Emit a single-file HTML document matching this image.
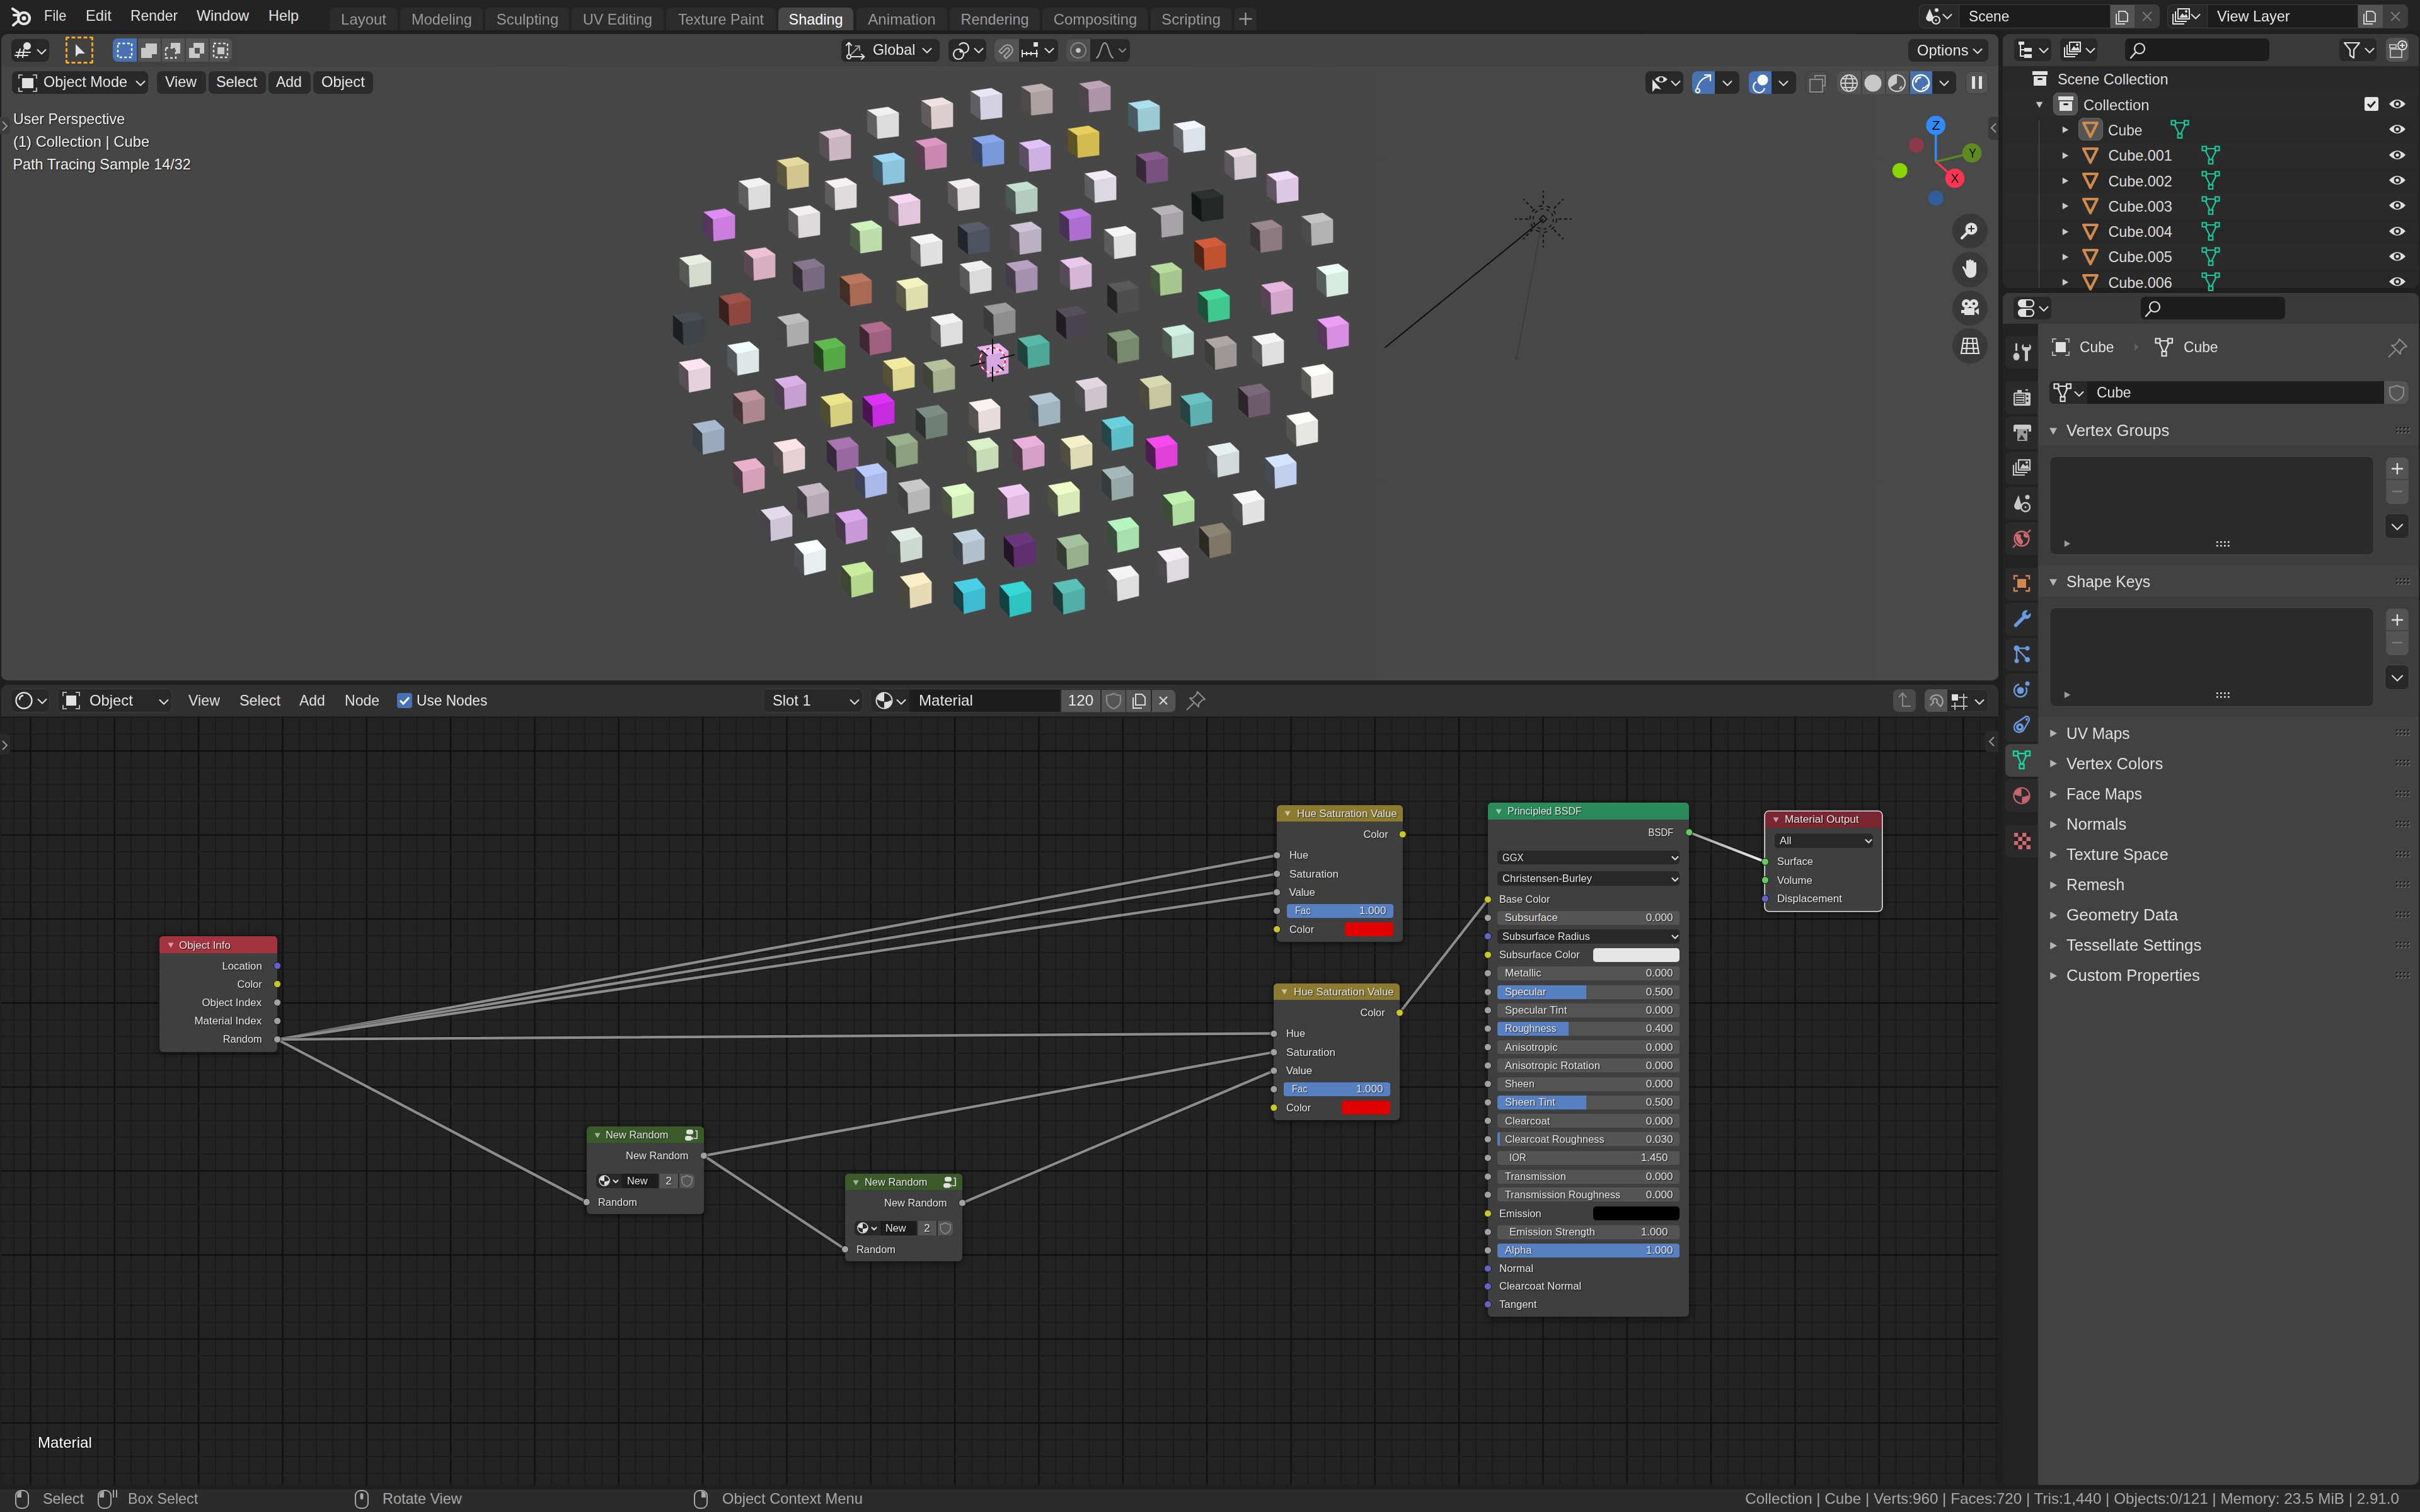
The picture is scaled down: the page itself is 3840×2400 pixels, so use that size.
<!DOCTYPE html>
<html><head><meta charset="utf-8"><style>
html,body{margin:0;padding:0;background:#1f1f1f;}
#root{position:relative;width:3840px;height:2400px;overflow:hidden;background:#1f1f1f;font-family:"Liberation Sans",sans-serif;}
.t{position:absolute;white-space:nowrap;}
svg{position:absolute;left:0;top:0;}
</style></head><body><div id="root">
<div style="position:absolute;left:0.0px;top:0.0px;width:3840.0px;height:48.0px;background:#232323;border-radius:0px;"></div>
<svg width="40" height="40" style="left:16px;top:6px" viewBox="0 0 40 40">
<g fill="none" stroke="#e6e6e6" stroke-width="4.2" stroke-linecap="round">
<circle cx="22" cy="23" r="9"/>
<path d="M13 14 L4 8"/><path d="M15 18 L6 18"/><path d="M12 28 L5 34"/>
</g><circle cx="22" cy="23" r="3.6" fill="#e6e6e6"/></svg>
<div class="t" style="left:70.0px;top:11.5px;font-size:23.4px;line-height:26.9px;color:#e0e0e0;transform:scaleX(0.9373);transform-origin:0 50%;">File</div>
<div class="t" style="left:136.0px;top:11.5px;font-size:23.4px;line-height:26.9px;color:#e0e0e0;transform:scaleX(1.0143);transform-origin:0 50%;">Edit</div>
<div class="t" style="left:207.0px;top:11.5px;font-size:23.4px;line-height:26.9px;color:#e0e0e0;transform:scaleX(0.9798);transform-origin:0 50%;">Render</div>
<div class="t" style="left:312.0px;top:11.5px;font-size:23.4px;line-height:26.9px;color:#e0e0e0;transform-origin:0 50%;">Window</div>
<div class="t" style="left:426.0px;top:11.5px;font-size:23.4px;line-height:26.9px;color:#e0e0e0;transform-origin:0 50%;">Help</div>
<div style="position:absolute;left:523.0px;top:12.0px;width:108.0px;height:36.0px;background:#2c2c2c;border-radius:0px;border-radius:8px 8px 0 0;"></div>
<div class="t" style="left:77.0px;width:1000px;top:17.5px;font-size:23.4px;line-height:26.9px;color:#9a9a9a;text-align:center;transform:scaleX(1.0220);transform-origin:50% 50%;">Layout</div>
<div style="position:absolute;left:635.0px;top:12.0px;width:131.0px;height:36.0px;background:#2c2c2c;border-radius:0px;border-radius:8px 8px 0 0;"></div>
<div class="t" style="left:200.5px;width:1000px;top:17.5px;font-size:23.4px;line-height:26.9px;color:#9a9a9a;text-align:center;transform:scaleX(1.0118);transform-origin:50% 50%;">Modeling</div>
<div style="position:absolute;left:770.0px;top:12.0px;width:133.0px;height:36.0px;background:#2c2c2c;border-radius:0px;border-radius:8px 8px 0 0;"></div>
<div class="t" style="left:336.5px;width:1000px;top:17.5px;font-size:23.4px;line-height:26.9px;color:#9a9a9a;text-align:center;transform:scaleX(1.0245);transform-origin:50% 50%;">Sculpting</div>
<div style="position:absolute;left:907.0px;top:12.0px;width:146.0px;height:36.0px;background:#2c2c2c;border-radius:0px;border-radius:8px 8px 0 0;"></div>
<div class="t" style="left:480.0px;width:1000px;top:17.5px;font-size:23.4px;line-height:26.9px;color:#9a9a9a;text-align:center;transform:scaleX(0.9965);transform-origin:50% 50%;">UV Editing</div>
<div style="position:absolute;left:1057.0px;top:12.0px;width:174.0px;height:36.0px;background:#2c2c2c;border-radius:0px;border-radius:8px 8px 0 0;"></div>
<div class="t" style="left:644.0px;width:1000px;top:17.5px;font-size:23.4px;line-height:26.9px;color:#9a9a9a;text-align:center;transform:scaleX(0.9979);transform-origin:50% 50%;">Texture Paint</div>
<div style="position:absolute;left:1235.0px;top:12.0px;width:119.0px;height:36.0px;background:#474747;border-radius:0px;border-radius:8px 8px 0 0;"></div>
<div class="t" style="left:794.5px;width:1000px;top:17.5px;font-size:23.4px;line-height:26.9px;color:#ffffff;text-align:center;transform-origin:50% 50%;">Shading</div>
<div style="position:absolute;left:1359.0px;top:12.0px;width:144.0px;height:36.0px;background:#2c2c2c;border-radius:0px;border-radius:8px 8px 0 0;"></div>
<div class="t" style="left:931.0px;width:1000px;top:17.5px;font-size:23.4px;line-height:26.9px;color:#9a9a9a;text-align:center;transform:scaleX(1.0347);transform-origin:50% 50%;">Animation</div>
<div style="position:absolute;left:1507.0px;top:12.0px;width:143.0px;height:36.0px;background:#2c2c2c;border-radius:0px;border-radius:8px 8px 0 0;"></div>
<div class="t" style="left:1078.5px;width:1000px;top:17.5px;font-size:23.4px;line-height:26.9px;color:#9a9a9a;text-align:center;transform-origin:50% 50%;">Rendering</div>
<div style="position:absolute;left:1654.0px;top:12.0px;width:167.0px;height:36.0px;background:#2c2c2c;border-radius:0px;border-radius:8px 8px 0 0;"></div>
<div class="t" style="left:1237.5px;width:1000px;top:17.5px;font-size:23.4px;line-height:26.9px;color:#9a9a9a;text-align:center;transform:scaleX(1.0179);transform-origin:50% 50%;">Compositing</div>
<div style="position:absolute;left:1826.0px;top:12.0px;width:128.0px;height:36.0px;background:#2c2c2c;border-radius:0px;border-radius:8px 8px 0 0;"></div>
<div class="t" style="left:1390.0px;width:1000px;top:17.5px;font-size:23.4px;line-height:26.9px;color:#9a9a9a;text-align:center;transform:scaleX(1.0316);transform-origin:50% 50%;">Scripting</div>
<div style="position:absolute;left:1959.0px;top:12.0px;width:35.0px;height:36.0px;background:#2c2c2c;border-radius:0px;border-radius:8px 8px 0 0;"></div>
<svg width="40" height="40" style="left:1957px;top:10px"><path d="M19.5 10 V30 M9.5 20 H29.5" stroke="#9a9a9a" stroke-width="2.4"/></svg>
<div style="position:absolute;left:3045.0px;top:7.0px;width:382.0px;height:38.0px;background:#3d3d3d;border-radius:8px;"></div>
<div style="position:absolute;left:3046.0px;top:8.0px;width:62.0px;height:36.0px;background:#282828;border-radius:0px;border-radius:7px 0 0 7px;"></div>
<div style="position:absolute;left:3109.0px;top:8.0px;width:239.0px;height:36.0px;background:#1d1d1d;border-radius:0px;"></div>
<div style="position:absolute;left:3349.0px;top:8.0px;width:38.0px;height:36.0px;background:#545454;border-radius:0px;"></div>
<div style="position:absolute;left:3388.0px;top:8.0px;width:38.0px;height:36.0px;background:#3d3d3d;border-radius:0px;border-radius:0 7px 7px 0;"></div>
<div class="t" style="left:3124.0px;top:12.5px;font-size:23.4px;line-height:26.9px;color:#e6e6e6;transform:scaleX(0.9706);transform-origin:0 50%;">Scene</div>
<svg width="40" height="40" style="left:3050px;top:6px"><path d="M12 8 L6 22 A6 6 0 0 0 18 22 Z" fill="#e0e0e0"/><circle cx="23" cy="10" r="3" fill="#e0e0e0"/><circle cx="22" cy="26" r="6" fill="none" stroke="#e0e0e0" stroke-width="2.2"/><circle cx="22" cy="26" r="1.6" fill="#e0e0e0"/></svg>
<svg width="40" height="40" style="left:3348px;top:6px"><g fill="none" stroke="#d0d0d0" stroke-width="2"><path d="M14 12 H24 L28 16 V28 H14 Z"/><path d="M10 16 V32 H24"/></g></svg>
<svg width="40" height="40" style="left:3387px;top:6px"><path d="M13 13 L27 27 M27 13 L13 27" stroke="#777" stroke-width="2.2"/></svg>
<svg width="24" height="24" style="left:3078.0px;top:14.0px"><path d="M5.5 9.075 L12 15.575 L18.5 9.075" fill="none" stroke="#e0e0e0" stroke-width="2.1" stroke-linecap="round" stroke-linejoin="round"/></svg>
<div style="position:absolute;left:3439.0px;top:7.0px;width:382.0px;height:38.0px;background:#3d3d3d;border-radius:8px;"></div>
<div style="position:absolute;left:3440.0px;top:8.0px;width:62.0px;height:36.0px;background:#282828;border-radius:0px;border-radius:7px 0 0 7px;"></div>
<div style="position:absolute;left:3503.0px;top:8.0px;width:238.0px;height:36.0px;background:#1d1d1d;border-radius:0px;"></div>
<div style="position:absolute;left:3742.0px;top:8.0px;width:39.0px;height:36.0px;background:#545454;border-radius:0px;"></div>
<div style="position:absolute;left:3782.0px;top:8.0px;width:38.0px;height:36.0px;background:#3d3d3d;border-radius:0px;border-radius:0 7px 7px 0;"></div>
<div class="t" style="left:3518.0px;top:12.5px;font-size:23.4px;line-height:26.9px;color:#e6e6e6;transform:scaleX(1.0034);transform-origin:0 50%;">View Layer</div>
<svg width="40" height="40" style="left:3444px;top:6px"><g fill="none" stroke="#e0e0e0" stroke-width="2"><rect x="12" y="8" width="18" height="16"/><path d="M8 12 V28 H26"/><path d="M4 16 V32 H22"/></g><path d="M14 22 L19 15 L22 19 L25 16 L28 22Z" fill="#e0e0e0"/><circle cx="25" cy="12" r="2" fill="#e0e0e0"/></svg>
<svg width="40" height="40" style="left:3741px;top:6px"><g fill="none" stroke="#d0d0d0" stroke-width="2"><path d="M14 12 H24 L28 16 V28 H14 Z"/><path d="M10 16 V32 H24"/></g></svg>
<svg width="40" height="40" style="left:3781px;top:6px"><path d="M13 13 L27 27 M27 13 L13 27" stroke="#777" stroke-width="2.2"/></svg>
<svg width="24" height="24" style="left:3472.0px;top:14.0px"><path d="M5.5 9.075 L12 15.575 L18.5 9.075" fill="none" stroke="#e0e0e0" stroke-width="2.1" stroke-linecap="round" stroke-linejoin="round"/></svg>
<div style="position:absolute;left:2.0px;top:54.0px;width:3169.0px;height:1026.0px;background:linear-gradient(90deg,#464646 0%,#474747 60%,#494949 100%);border-radius:10px;"></div>
<div style="position:absolute;left:2.0px;top:54.0px;width:3169.0px;height:51.0px;background:rgba(0,0,0,0.07);border-radius:0px;border-radius:10px 10px 0 0;"></div>
<div style="position:absolute;left:2.0px;top:1087.0px;width:3169.0px;height:1270.0px;background:#232323;border-radius:10px;"></div>
<div style="position:absolute;left:2.0px;top:1087.0px;width:3169.0px;height:50.0px;background:#303030;border-radius:0px;border-radius:10px 10px 0 0;"></div>
<svg width="3840" height="2400" style="clip-path:inset(1137px 669px 43px 2px round 0 0 10px 10px)"><line x1="21.83" y1="1137" x2="21.83" y2="2357" stroke="#1a1a1a" stroke-width="1.8"/><line x1="48.50" y1="1137" x2="48.50" y2="2357" stroke="#111111" stroke-width="2.4"/><line x1="75.17" y1="1137" x2="75.17" y2="2357" stroke="#1a1a1a" stroke-width="1.8"/><line x1="101.83" y1="1137" x2="101.83" y2="2357" stroke="#1a1a1a" stroke-width="1.8"/><line x1="128.50" y1="1137" x2="128.50" y2="2357" stroke="#1a1a1a" stroke-width="1.8"/><line x1="155.17" y1="1137" x2="155.17" y2="2357" stroke="#1a1a1a" stroke-width="1.8"/><line x1="181.83" y1="1137" x2="181.83" y2="2357" stroke="#111111" stroke-width="2.4"/><line x1="208.50" y1="1137" x2="208.50" y2="2357" stroke="#1a1a1a" stroke-width="1.8"/><line x1="235.17" y1="1137" x2="235.17" y2="2357" stroke="#1a1a1a" stroke-width="1.8"/><line x1="261.83" y1="1137" x2="261.83" y2="2357" stroke="#1a1a1a" stroke-width="1.8"/><line x1="288.50" y1="1137" x2="288.50" y2="2357" stroke="#1a1a1a" stroke-width="1.8"/><line x1="315.17" y1="1137" x2="315.17" y2="2357" stroke="#111111" stroke-width="2.4"/><line x1="341.83" y1="1137" x2="341.83" y2="2357" stroke="#1a1a1a" stroke-width="1.8"/><line x1="368.50" y1="1137" x2="368.50" y2="2357" stroke="#1a1a1a" stroke-width="1.8"/><line x1="395.17" y1="1137" x2="395.17" y2="2357" stroke="#1a1a1a" stroke-width="1.8"/><line x1="421.83" y1="1137" x2="421.83" y2="2357" stroke="#1a1a1a" stroke-width="1.8"/><line x1="448.50" y1="1137" x2="448.50" y2="2357" stroke="#111111" stroke-width="2.4"/><line x1="475.17" y1="1137" x2="475.17" y2="2357" stroke="#1a1a1a" stroke-width="1.8"/><line x1="501.83" y1="1137" x2="501.83" y2="2357" stroke="#1a1a1a" stroke-width="1.8"/><line x1="528.50" y1="1137" x2="528.50" y2="2357" stroke="#1a1a1a" stroke-width="1.8"/><line x1="555.17" y1="1137" x2="555.17" y2="2357" stroke="#1a1a1a" stroke-width="1.8"/><line x1="581.83" y1="1137" x2="581.83" y2="2357" stroke="#111111" stroke-width="2.4"/><line x1="608.50" y1="1137" x2="608.50" y2="2357" stroke="#1a1a1a" stroke-width="1.8"/><line x1="635.17" y1="1137" x2="635.17" y2="2357" stroke="#1a1a1a" stroke-width="1.8"/><line x1="661.83" y1="1137" x2="661.83" y2="2357" stroke="#1a1a1a" stroke-width="1.8"/><line x1="688.50" y1="1137" x2="688.50" y2="2357" stroke="#1a1a1a" stroke-width="1.8"/><line x1="715.17" y1="1137" x2="715.17" y2="2357" stroke="#111111" stroke-width="2.4"/><line x1="741.83" y1="1137" x2="741.83" y2="2357" stroke="#1a1a1a" stroke-width="1.8"/><line x1="768.50" y1="1137" x2="768.50" y2="2357" stroke="#1a1a1a" stroke-width="1.8"/><line x1="795.16" y1="1137" x2="795.16" y2="2357" stroke="#1a1a1a" stroke-width="1.8"/><line x1="821.83" y1="1137" x2="821.83" y2="2357" stroke="#1a1a1a" stroke-width="1.8"/><line x1="848.50" y1="1137" x2="848.50" y2="2357" stroke="#111111" stroke-width="2.4"/><line x1="875.16" y1="1137" x2="875.16" y2="2357" stroke="#1a1a1a" stroke-width="1.8"/><line x1="901.83" y1="1137" x2="901.83" y2="2357" stroke="#1a1a1a" stroke-width="1.8"/><line x1="928.50" y1="1137" x2="928.50" y2="2357" stroke="#1a1a1a" stroke-width="1.8"/><line x1="955.16" y1="1137" x2="955.16" y2="2357" stroke="#1a1a1a" stroke-width="1.8"/><line x1="981.83" y1="1137" x2="981.83" y2="2357" stroke="#111111" stroke-width="2.4"/><line x1="1008.50" y1="1137" x2="1008.50" y2="2357" stroke="#1a1a1a" stroke-width="1.8"/><line x1="1035.16" y1="1137" x2="1035.16" y2="2357" stroke="#1a1a1a" stroke-width="1.8"/><line x1="1061.83" y1="1137" x2="1061.83" y2="2357" stroke="#1a1a1a" stroke-width="1.8"/><line x1="1088.50" y1="1137" x2="1088.50" y2="2357" stroke="#1a1a1a" stroke-width="1.8"/><line x1="1115.16" y1="1137" x2="1115.16" y2="2357" stroke="#111111" stroke-width="2.4"/><line x1="1141.83" y1="1137" x2="1141.83" y2="2357" stroke="#1a1a1a" stroke-width="1.8"/><line x1="1168.50" y1="1137" x2="1168.50" y2="2357" stroke="#1a1a1a" stroke-width="1.8"/><line x1="1195.16" y1="1137" x2="1195.16" y2="2357" stroke="#1a1a1a" stroke-width="1.8"/><line x1="1221.83" y1="1137" x2="1221.83" y2="2357" stroke="#1a1a1a" stroke-width="1.8"/><line x1="1248.50" y1="1137" x2="1248.50" y2="2357" stroke="#111111" stroke-width="2.4"/><line x1="1275.16" y1="1137" x2="1275.16" y2="2357" stroke="#1a1a1a" stroke-width="1.8"/><line x1="1301.83" y1="1137" x2="1301.83" y2="2357" stroke="#1a1a1a" stroke-width="1.8"/><line x1="1328.50" y1="1137" x2="1328.50" y2="2357" stroke="#1a1a1a" stroke-width="1.8"/><line x1="1355.16" y1="1137" x2="1355.16" y2="2357" stroke="#1a1a1a" stroke-width="1.8"/><line x1="1381.83" y1="1137" x2="1381.83" y2="2357" stroke="#111111" stroke-width="2.4"/><line x1="1408.50" y1="1137" x2="1408.50" y2="2357" stroke="#1a1a1a" stroke-width="1.8"/><line x1="1435.16" y1="1137" x2="1435.16" y2="2357" stroke="#1a1a1a" stroke-width="1.8"/><line x1="1461.83" y1="1137" x2="1461.83" y2="2357" stroke="#1a1a1a" stroke-width="1.8"/><line x1="1488.50" y1="1137" x2="1488.50" y2="2357" stroke="#1a1a1a" stroke-width="1.8"/><line x1="1515.16" y1="1137" x2="1515.16" y2="2357" stroke="#111111" stroke-width="2.4"/><line x1="1541.83" y1="1137" x2="1541.83" y2="2357" stroke="#1a1a1a" stroke-width="1.8"/><line x1="1568.50" y1="1137" x2="1568.50" y2="2357" stroke="#1a1a1a" stroke-width="1.8"/><line x1="1595.16" y1="1137" x2="1595.16" y2="2357" stroke="#1a1a1a" stroke-width="1.8"/><line x1="1621.83" y1="1137" x2="1621.83" y2="2357" stroke="#1a1a1a" stroke-width="1.8"/><line x1="1648.50" y1="1137" x2="1648.50" y2="2357" stroke="#111111" stroke-width="2.4"/><line x1="1675.16" y1="1137" x2="1675.16" y2="2357" stroke="#1a1a1a" stroke-width="1.8"/><line x1="1701.83" y1="1137" x2="1701.83" y2="2357" stroke="#1a1a1a" stroke-width="1.8"/><line x1="1728.50" y1="1137" x2="1728.50" y2="2357" stroke="#1a1a1a" stroke-width="1.8"/><line x1="1755.16" y1="1137" x2="1755.16" y2="2357" stroke="#1a1a1a" stroke-width="1.8"/><line x1="1781.83" y1="1137" x2="1781.83" y2="2357" stroke="#111111" stroke-width="2.4"/><line x1="1808.50" y1="1137" x2="1808.50" y2="2357" stroke="#1a1a1a" stroke-width="1.8"/><line x1="1835.16" y1="1137" x2="1835.16" y2="2357" stroke="#1a1a1a" stroke-width="1.8"/><line x1="1861.83" y1="1137" x2="1861.83" y2="2357" stroke="#1a1a1a" stroke-width="1.8"/><line x1="1888.50" y1="1137" x2="1888.50" y2="2357" stroke="#1a1a1a" stroke-width="1.8"/><line x1="1915.16" y1="1137" x2="1915.16" y2="2357" stroke="#111111" stroke-width="2.4"/><line x1="1941.83" y1="1137" x2="1941.83" y2="2357" stroke="#1a1a1a" stroke-width="1.8"/><line x1="1968.50" y1="1137" x2="1968.50" y2="2357" stroke="#1a1a1a" stroke-width="1.8"/><line x1="1995.16" y1="1137" x2="1995.16" y2="2357" stroke="#1a1a1a" stroke-width="1.8"/><line x1="2021.83" y1="1137" x2="2021.83" y2="2357" stroke="#1a1a1a" stroke-width="1.8"/><line x1="2048.50" y1="1137" x2="2048.50" y2="2357" stroke="#111111" stroke-width="2.4"/><line x1="2075.16" y1="1137" x2="2075.16" y2="2357" stroke="#1a1a1a" stroke-width="1.8"/><line x1="2101.83" y1="1137" x2="2101.83" y2="2357" stroke="#1a1a1a" stroke-width="1.8"/><line x1="2128.49" y1="1137" x2="2128.49" y2="2357" stroke="#1a1a1a" stroke-width="1.8"/><line x1="2155.16" y1="1137" x2="2155.16" y2="2357" stroke="#1a1a1a" stroke-width="1.8"/><line x1="2181.83" y1="1137" x2="2181.83" y2="2357" stroke="#111111" stroke-width="2.4"/><line x1="2208.49" y1="1137" x2="2208.49" y2="2357" stroke="#1a1a1a" stroke-width="1.8"/><line x1="2235.16" y1="1137" x2="2235.16" y2="2357" stroke="#1a1a1a" stroke-width="1.8"/><line x1="2261.83" y1="1137" x2="2261.83" y2="2357" stroke="#1a1a1a" stroke-width="1.8"/><line x1="2288.49" y1="1137" x2="2288.49" y2="2357" stroke="#1a1a1a" stroke-width="1.8"/><line x1="2315.16" y1="1137" x2="2315.16" y2="2357" stroke="#111111" stroke-width="2.4"/><line x1="2341.83" y1="1137" x2="2341.83" y2="2357" stroke="#1a1a1a" stroke-width="1.8"/><line x1="2368.49" y1="1137" x2="2368.49" y2="2357" stroke="#1a1a1a" stroke-width="1.8"/><line x1="2395.16" y1="1137" x2="2395.16" y2="2357" stroke="#1a1a1a" stroke-width="1.8"/><line x1="2421.83" y1="1137" x2="2421.83" y2="2357" stroke="#1a1a1a" stroke-width="1.8"/><line x1="2448.49" y1="1137" x2="2448.49" y2="2357" stroke="#111111" stroke-width="2.4"/><line x1="2475.16" y1="1137" x2="2475.16" y2="2357" stroke="#1a1a1a" stroke-width="1.8"/><line x1="2501.83" y1="1137" x2="2501.83" y2="2357" stroke="#1a1a1a" stroke-width="1.8"/><line x1="2528.49" y1="1137" x2="2528.49" y2="2357" stroke="#1a1a1a" stroke-width="1.8"/><line x1="2555.16" y1="1137" x2="2555.16" y2="2357" stroke="#1a1a1a" stroke-width="1.8"/><line x1="2581.83" y1="1137" x2="2581.83" y2="2357" stroke="#111111" stroke-width="2.4"/><line x1="2608.49" y1="1137" x2="2608.49" y2="2357" stroke="#1a1a1a" stroke-width="1.8"/><line x1="2635.16" y1="1137" x2="2635.16" y2="2357" stroke="#1a1a1a" stroke-width="1.8"/><line x1="2661.83" y1="1137" x2="2661.83" y2="2357" stroke="#1a1a1a" stroke-width="1.8"/><line x1="2688.49" y1="1137" x2="2688.49" y2="2357" stroke="#1a1a1a" stroke-width="1.8"/><line x1="2715.16" y1="1137" x2="2715.16" y2="2357" stroke="#111111" stroke-width="2.4"/><line x1="2741.83" y1="1137" x2="2741.83" y2="2357" stroke="#1a1a1a" stroke-width="1.8"/><line x1="2768.49" y1="1137" x2="2768.49" y2="2357" stroke="#1a1a1a" stroke-width="1.8"/><line x1="2795.16" y1="1137" x2="2795.16" y2="2357" stroke="#1a1a1a" stroke-width="1.8"/><line x1="2821.83" y1="1137" x2="2821.83" y2="2357" stroke="#1a1a1a" stroke-width="1.8"/><line x1="2848.49" y1="1137" x2="2848.49" y2="2357" stroke="#111111" stroke-width="2.4"/><line x1="2875.16" y1="1137" x2="2875.16" y2="2357" stroke="#1a1a1a" stroke-width="1.8"/><line x1="2901.83" y1="1137" x2="2901.83" y2="2357" stroke="#1a1a1a" stroke-width="1.8"/><line x1="2928.49" y1="1137" x2="2928.49" y2="2357" stroke="#1a1a1a" stroke-width="1.8"/><line x1="2955.16" y1="1137" x2="2955.16" y2="2357" stroke="#1a1a1a" stroke-width="1.8"/><line x1="2981.83" y1="1137" x2="2981.83" y2="2357" stroke="#111111" stroke-width="2.4"/><line x1="3008.49" y1="1137" x2="3008.49" y2="2357" stroke="#1a1a1a" stroke-width="1.8"/><line x1="3035.16" y1="1137" x2="3035.16" y2="2357" stroke="#1a1a1a" stroke-width="1.8"/><line x1="3061.83" y1="1137" x2="3061.83" y2="2357" stroke="#1a1a1a" stroke-width="1.8"/><line x1="3088.49" y1="1137" x2="3088.49" y2="2357" stroke="#1a1a1a" stroke-width="1.8"/><line x1="3115.16" y1="1137" x2="3115.16" y2="2357" stroke="#111111" stroke-width="2.4"/><line x1="3141.83" y1="1137" x2="3141.83" y2="2357" stroke="#1a1a1a" stroke-width="1.8"/><line x1="3168.49" y1="1137" x2="3168.49" y2="2357" stroke="#1a1a1a" stroke-width="1.8"/><line x1="2" y1="1138.67" x2="3171" y2="1138.67" stroke="#1a1a1a" stroke-width="1.8"/><line x1="2" y1="1165.33" x2="3171" y2="1165.33" stroke="#1a1a1a" stroke-width="1.8"/><line x1="2" y1="1192.00" x2="3171" y2="1192.00" stroke="#111111" stroke-width="2.4"/><line x1="2" y1="1218.67" x2="3171" y2="1218.67" stroke="#1a1a1a" stroke-width="1.8"/><line x1="2" y1="1245.33" x2="3171" y2="1245.33" stroke="#1a1a1a" stroke-width="1.8"/><line x1="2" y1="1272.00" x2="3171" y2="1272.00" stroke="#1a1a1a" stroke-width="1.8"/><line x1="2" y1="1298.67" x2="3171" y2="1298.67" stroke="#1a1a1a" stroke-width="1.8"/><line x1="2" y1="1325.33" x2="3171" y2="1325.33" stroke="#111111" stroke-width="2.4"/><line x1="2" y1="1352.00" x2="3171" y2="1352.00" stroke="#1a1a1a" stroke-width="1.8"/><line x1="2" y1="1378.67" x2="3171" y2="1378.67" stroke="#1a1a1a" stroke-width="1.8"/><line x1="2" y1="1405.33" x2="3171" y2="1405.33" stroke="#1a1a1a" stroke-width="1.8"/><line x1="2" y1="1432.00" x2="3171" y2="1432.00" stroke="#1a1a1a" stroke-width="1.8"/><line x1="2" y1="1458.67" x2="3171" y2="1458.67" stroke="#111111" stroke-width="2.4"/><line x1="2" y1="1485.33" x2="3171" y2="1485.33" stroke="#1a1a1a" stroke-width="1.8"/><line x1="2" y1="1512.00" x2="3171" y2="1512.00" stroke="#1a1a1a" stroke-width="1.8"/><line x1="2" y1="1538.67" x2="3171" y2="1538.67" stroke="#1a1a1a" stroke-width="1.8"/><line x1="2" y1="1565.33" x2="3171" y2="1565.33" stroke="#1a1a1a" stroke-width="1.8"/><line x1="2" y1="1592.00" x2="3171" y2="1592.00" stroke="#111111" stroke-width="2.4"/><line x1="2" y1="1618.67" x2="3171" y2="1618.67" stroke="#1a1a1a" stroke-width="1.8"/><line x1="2" y1="1645.33" x2="3171" y2="1645.33" stroke="#1a1a1a" stroke-width="1.8"/><line x1="2" y1="1672.00" x2="3171" y2="1672.00" stroke="#1a1a1a" stroke-width="1.8"/><line x1="2" y1="1698.67" x2="3171" y2="1698.67" stroke="#1a1a1a" stroke-width="1.8"/><line x1="2" y1="1725.33" x2="3171" y2="1725.33" stroke="#111111" stroke-width="2.4"/><line x1="2" y1="1752.00" x2="3171" y2="1752.00" stroke="#1a1a1a" stroke-width="1.8"/><line x1="2" y1="1778.67" x2="3171" y2="1778.67" stroke="#1a1a1a" stroke-width="1.8"/><line x1="2" y1="1805.33" x2="3171" y2="1805.33" stroke="#1a1a1a" stroke-width="1.8"/><line x1="2" y1="1832.00" x2="3171" y2="1832.00" stroke="#1a1a1a" stroke-width="1.8"/><line x1="2" y1="1858.67" x2="3171" y2="1858.67" stroke="#111111" stroke-width="2.4"/><line x1="2" y1="1885.33" x2="3171" y2="1885.33" stroke="#1a1a1a" stroke-width="1.8"/><line x1="2" y1="1912.00" x2="3171" y2="1912.00" stroke="#1a1a1a" stroke-width="1.8"/><line x1="2" y1="1938.66" x2="3171" y2="1938.66" stroke="#1a1a1a" stroke-width="1.8"/><line x1="2" y1="1965.33" x2="3171" y2="1965.33" stroke="#1a1a1a" stroke-width="1.8"/><line x1="2" y1="1992.00" x2="3171" y2="1992.00" stroke="#111111" stroke-width="2.4"/><line x1="2" y1="2018.66" x2="3171" y2="2018.66" stroke="#1a1a1a" stroke-width="1.8"/><line x1="2" y1="2045.33" x2="3171" y2="2045.33" stroke="#1a1a1a" stroke-width="1.8"/><line x1="2" y1="2072.00" x2="3171" y2="2072.00" stroke="#1a1a1a" stroke-width="1.8"/><line x1="2" y1="2098.66" x2="3171" y2="2098.66" stroke="#1a1a1a" stroke-width="1.8"/><line x1="2" y1="2125.33" x2="3171" y2="2125.33" stroke="#111111" stroke-width="2.4"/><line x1="2" y1="2152.00" x2="3171" y2="2152.00" stroke="#1a1a1a" stroke-width="1.8"/><line x1="2" y1="2178.66" x2="3171" y2="2178.66" stroke="#1a1a1a" stroke-width="1.8"/><line x1="2" y1="2205.33" x2="3171" y2="2205.33" stroke="#1a1a1a" stroke-width="1.8"/><line x1="2" y1="2232.00" x2="3171" y2="2232.00" stroke="#1a1a1a" stroke-width="1.8"/><line x1="2" y1="2258.66" x2="3171" y2="2258.66" stroke="#111111" stroke-width="2.4"/><line x1="2" y1="2285.33" x2="3171" y2="2285.33" stroke="#1a1a1a" stroke-width="1.8"/><line x1="2" y1="2312.00" x2="3171" y2="2312.00" stroke="#1a1a1a" stroke-width="1.8"/><line x1="2" y1="2338.66" x2="3171" y2="2338.66" stroke="#1a1a1a" stroke-width="1.8"/></svg>
<div style="position:absolute;left:3178.0px;top:54.0px;width:660.0px;height:403.0px;background:#282828;border-radius:10px;"></div>
<div style="position:absolute;left:3178.0px;top:54.0px;width:660.0px;height:51.0px;background:#3a3a3a;border-radius:0px;border-radius:10px 10px 0 0;"></div>
<div style="position:absolute;left:3178.0px;top:465.0px;width:660.0px;height:1892.0px;background:#424242;border-radius:10px;"></div>
<div style="position:absolute;left:3178.0px;top:465.0px;width:660.0px;height:49.0px;background:#3a3a3a;border-radius:0px;border-radius:10px 10px 0 0;"></div>
<div style="position:absolute;left:3178.0px;top:514.0px;width:56.0px;height:1843.0px;background:#232323;border-radius:0px;border-radius:0 0 0 10px;"></div>
<div style="position:absolute;left:0.0px;top:2364.0px;width:3840.0px;height:36.0px;background:#2b2b2b;border-radius:0px;"></div>
<div style="position:absolute;left:18.0px;top:62.0px;width:60.0px;height:36.0px;background:#282828;border-radius:8px;"></div>
<svg width="36" height="32" style="left:22.0px;top:64.0px"><g fill="none" stroke="#e0e0e0" stroke-width="2.2" stroke-linecap="round"><path d="M6 27 L10 14 M14 27 L16 14 M4 19 H26 M2 24 H22"/></g><circle cx="21" cy="9" r="6" fill="#e0e0e0"/></svg>
<svg width="24" height="24" style="left:54.0px;top:70.0px"><path d="M5.5 9.075 L12 15.575 L18.5 9.075" fill="none" stroke="#e0e0e0" stroke-width="2.1" stroke-linecap="round" stroke-linejoin="round"/></svg>
<div style="position:absolute;left:104px;top:58px;width:44px;height:43px;box-sizing:border-box;border:3px dashed #f5a623;border-radius:3px"></div>
<svg width="26" height="28" style="left:114.0px;top:66.0px"><path d="M6 4 L6 24 L11 19 L21 19 Z" fill="#e0e0e0"/></svg>
<div style="position:absolute;left:179.0px;top:61.0px;width:189.0px;height:37.0px;background:#545454;border-radius:8px;"></div>
<div style="position:absolute;left:179.0px;top:61.0px;width:38.0px;height:37.0px;background:#4772b3;border-radius:0px;border-radius:8px 0 0 8px;"></div>
<div style="position:absolute;left:217.0px;top:61.0px;width:1.5px;height:37.0px;background:#3f3f3f;border-radius:0px;"></div>
<div style="position:absolute;left:255.0px;top:61.0px;width:1.5px;height:37.0px;background:#3f3f3f;border-radius:0px;"></div>
<div style="position:absolute;left:293.0px;top:61.0px;width:1.5px;height:37.0px;background:#3f3f3f;border-radius:0px;"></div>
<div style="position:absolute;left:331.0px;top:61.0px;width:1.5px;height:37.0px;background:#3f3f3f;border-radius:0px;"></div>
<svg width="30" height="32" style="left:183.0px;top:64.0px"><rect x="4" y="5" width="22" height="22" fill="none" stroke="#ffffff" stroke-width="2.4" stroke-dasharray="4 3.4"/></svg>
<svg width="30" height="32" style="left:221.0px;top:64.0px"><path d="M10 5 H28 V22 H20 V28 H3 V12 H10 Z" fill="#c8c8c8"/></svg>
<svg width="30" height="32" style="left:259.0px;top:64.0px"><rect x="4" y="12" width="16" height="16" fill="none" stroke="#e0e0e0" stroke-width="2.4" stroke-dasharray="4 3.4"/><path d="M12 4 H27 V21 H20 V12 H12 Z" fill="#c8c8c8"/></svg>
<svg width="30" height="32" style="left:297.0px;top:64.0px"><path d="M10 4 H27 V21 H20 V12 H12 V21 H20 V28 H3 V12 H10 Z" fill="#c8c8c8" fill-rule="evenodd"/></svg>
<svg width="30" height="32" style="left:335.0px;top:64.0px"><rect x="4" y="5" width="22" height="22" fill="none" stroke="#e0e0e0" stroke-width="2.4" stroke-dasharray="4 3.4"/><rect x="10" y="11" width="11" height="11" fill="#c8c8c8"/></svg>
<div style="position:absolute;left:1335.0px;top:62.0px;width:156.0px;height:36.0px;background:#282828;border-radius:8px;"></div>
<svg width="40" height="36" style="left:1340.0px;top:63.0px"><g fill="none" stroke="#e0e0e0" stroke-width="2" stroke-linecap="round" stroke-linejoin="round"><path d="M7 27 V5 M3 9 L7 4.5 L11 9"/><path d="M10 27 H31 M27 23 L31.5 27 L27 31"/></g><g fill="none" stroke="#9a9a9a" stroke-width="2" stroke-linecap="round"><path d="M9 25 L24 10 M17 10 H24 V17"/></g><circle cx="7" cy="27" r="3.2" fill="#282828" stroke="#e0e0e0" stroke-width="2"/></svg>
<div class="t" style="left:1385.0px;top:65.5px;font-size:23.4px;line-height:26.9px;color:#e6e6e6;transform:scaleX(0.9961);transform-origin:0 50%;">Global</div>
<svg width="24" height="24" style="left:1459.0px;top:68.0px"><path d="M5.5 9.075 L12 15.575 L18.5 9.075" fill="none" stroke="#e0e0e0" stroke-width="2.1" stroke-linecap="round" stroke-linejoin="round"/></svg>
<div style="position:absolute;left:1505.0px;top:62.0px;width:60.0px;height:36.0px;background:#282828;border-radius:8px;"></div>
<svg width="36" height="34" style="left:1508.0px;top:64.0px"><g fill="none" stroke="#e0e0e0" stroke-width="2.2"><circle cx="13" cy="22" r="8"/><path d="M14 8 A8 8 0 1 1 22 20"/></g><circle cx="17" cy="17" r="2.6" fill="#e0e0e0"/></svg>
<svg width="24" height="24" style="left:1541.0px;top:68.0px"><path d="M5.5 9.075 L12 15.575 L18.5 9.075" fill="none" stroke="#e0e0e0" stroke-width="2.1" stroke-linecap="round" stroke-linejoin="round"/></svg>
<div style="position:absolute;left:1578.0px;top:62.0px;width:101.0px;height:36.0px;background:#282828;border-radius:8px;"></div>
<div style="position:absolute;left:1578.0px;top:62.0px;width:39.0px;height:36.0px;background:#545454;border-radius:0px;border-radius:8px 0 0 8px;"></div>
<svg width="36" height="34" style="left:1580.0px;top:63.0px"><g transform="rotate(-135 18 17)"><path d="M10 7 V18 A8 8 0 0 0 26 18 V7 H21 V18 A3 3 0 0 1 15 18 V7 Z" fill="none" stroke="#a8a8a8" stroke-width="2" stroke-linejoin="round"/></g></svg>
<svg width="34" height="34" style="left:1618.0px;top:63.0px"><g stroke="#e0e0e0" stroke-width="2" fill="none"><path d="M3 22 H29 M4 16 V28 M11 19 V25 M18 19 V25 M27 16 V28"/></g><rect x="22" y="4" width="7" height="7" fill="#e0e0e0"/></svg>
<svg width="24" height="24" style="left:1653.0px;top:68.0px"><path d="M5.5 9.075 L12 15.575 L18.5 9.075" fill="none" stroke="#e0e0e0" stroke-width="2.1" stroke-linecap="round" stroke-linejoin="round"/></svg>
<div style="position:absolute;left:1692.0px;top:62.0px;width:101.0px;height:36.0px;background:#282828;border-radius:8px;"></div>
<div style="position:absolute;left:1692.0px;top:62.0px;width:38.0px;height:36.0px;background:#4e4e4e;border-radius:0px;border-radius:8px 0 0 8px;"></div>
<svg width="34" height="34" style="left:1694.0px;top:63.0px"><circle cx="17" cy="17" r="12" fill="none" stroke="#8a8a8a" stroke-width="1.8"/><circle cx="17" cy="17" r="3.8" fill="#c8c8c8"/></svg>
<svg width="36" height="34" style="left:1736.0px;top:63.0px"><path d="M3 29 C10 29 11 5 17 5 C23 5 24 29 31 29" fill="none" stroke="#9a9a9a" stroke-width="2"/></svg>
<svg width="24" height="24" style="left:1769.0px;top:68.0px"><path d="M7 9.75 L12 14.75 L17 9.75" fill="none" stroke="#8a8a8a" stroke-width="2.1" stroke-linecap="round" stroke-linejoin="round"/></svg>
<div style="position:absolute;left:3028.0px;top:62.0px;width:127.0px;height:36.0px;background:#282828;border-radius:8px;"></div>
<div class="t" style="left:3042.0px;top:66.5px;font-size:23.4px;line-height:26.9px;color:#e6e6e6;transform:scaleX(1.0105);transform-origin:0 50%;">Options</div>
<svg width="24" height="24" style="left:3126.0px;top:69.0px"><path d="M5.5 9.075 L12 15.575 L18.5 9.075" fill="none" stroke="#e0e0e0" stroke-width="2.1" stroke-linecap="round" stroke-linejoin="round"/></svg>
<div style="position:absolute;left:19.0px;top:113.0px;width:216.0px;height:36.0px;background:#282828;border-radius:8px;"></div>
<svg width="40" height="36" style="left:24.0px;top:113.0px"><g fill="none" stroke="#b0b0b0" stroke-width="2.2"><path d="M6 12 V6 H12 M28 6 H34 V12 M34 26 V32 H28 M12 32 H6 V26"/></g><rect x="11" y="11" width="18" height="16" fill="#e0e0e0"/></svg>
<div class="t" style="left:69.0px;top:116.5px;font-size:23.4px;line-height:26.9px;color:#e6e6e6;transform:scaleX(1.0029);transform-origin:0 50%;">Object Mode</div>
<svg width="24" height="24" style="left:211.0px;top:120.0px"><path d="M5.5 9.075 L12 15.575 L18.5 9.075" fill="none" stroke="#e0e0e0" stroke-width="2.1" stroke-linecap="round" stroke-linejoin="round"/></svg>
<div style="position:absolute;left:249.0px;top:113.0px;width:78.0px;height:36.0px;background:#2b2b2b;border-radius:8px;"></div>
<div class="t" style="left:262.0px;top:116.5px;font-size:23.4px;line-height:26.9px;color:#e6e6e6;transform:scaleX(0.9964);transform-origin:0 50%;">View</div>
<div style="position:absolute;left:331.0px;top:113.0px;width:91.0px;height:36.0px;background:#2b2b2b;border-radius:8px;"></div>
<div class="t" style="left:343.0px;top:116.5px;font-size:23.4px;line-height:26.9px;color:#e6e6e6;transform-origin:0 50%;">Select</div>
<div style="position:absolute;left:426.0px;top:113.0px;width:67.0px;height:36.0px;background:#2b2b2b;border-radius:8px;"></div>
<div class="t" style="left:438.0px;top:116.5px;font-size:23.4px;line-height:26.9px;color:#e6e6e6;transform:scaleX(0.9822);transform-origin:0 50%;">Add</div>
<div style="position:absolute;left:497.0px;top:113.0px;width:95.0px;height:36.0px;background:#2b2b2b;border-radius:8px;"></div>
<div class="t" style="left:509.5px;top:116.5px;font-size:23.4px;line-height:26.9px;color:#e6e6e6;transform:scaleX(1.0171);transform-origin:0 50%;">Object</div>
<div style="position:absolute;left:2611.0px;top:113.0px;width:60.0px;height:36.0px;background:#282828;border-radius:8px;"></div>
<svg width="38" height="36" style="left:2614.0px;top:114.0px"><path d="M8 12 L8 32 L13 26 L22 28 Z" fill="#e0e0e0"/><path d="M12 12 Q22 2 32 12 Q22 22 12 12Z" fill="#e0e0e0"/><circle cx="22" cy="12" r="3.5" fill="#282828"/></svg>
<svg width="24" height="24" style="left:2647.0px;top:120.0px"><path d="M5.5 9.075 L12 15.575 L18.5 9.075" fill="none" stroke="#e0e0e0" stroke-width="2.1" stroke-linecap="round" stroke-linejoin="round"/></svg>
<div style="position:absolute;left:2685.0px;top:113.0px;width:75.0px;height:36.0px;background:#282828;border-radius:8px;"></div>
<div style="position:absolute;left:2685.0px;top:113.0px;width:36.0px;height:36.0px;background:#4772b3;border-radius:0px;border-radius:8px 0 0 8px;"></div>
<svg width="36" height="36" style="left:2686.0px;top:114.0px"><g fill="none" stroke="#ffffff" stroke-width="2.2" stroke-linecap="round"><path d="M7 25 Q12 10 26 7"/><path d="M19 5 H28 V14"/></g><circle cx="8" cy="30" r="3.2" fill="none" stroke="#fff" stroke-width="2"/></svg>
<svg width="24" height="24" style="left:2729.0px;top:120.0px"><path d="M5.5 9.075 L12 15.575 L18.5 9.075" fill="none" stroke="#e0e0e0" stroke-width="2.1" stroke-linecap="round" stroke-linejoin="round"/></svg>
<div style="position:absolute;left:2775.0px;top:113.0px;width:75.0px;height:36.0px;background:#282828;border-radius:8px;"></div>
<div style="position:absolute;left:2775.0px;top:113.0px;width:36.0px;height:36.0px;background:#4772b3;border-radius:0px;border-radius:8px 0 0 8px;"></div>
<svg width="36" height="36" style="left:2776.0px;top:114.0px"><circle cx="21" cy="13" r="8.5" fill="#fff"/><path d="M11 16 A9 9 0 1 0 24 26" fill="none" stroke="#fff" stroke-width="2.2"/></svg>
<svg width="24" height="24" style="left:2818.0px;top:120.0px"><path d="M5.5 9.075 L12 15.575 L18.5 9.075" fill="none" stroke="#e0e0e0" stroke-width="2.1" stroke-linecap="round" stroke-linejoin="round"/></svg>
<div style="position:absolute;left:2865.0px;top:113.0px;width:36.0px;height:36.0px;background:#4a4a4a;border-radius:8px;box-sizing:border-box;border:1.5px solid #3d3d3d;"></div>
<svg width="36" height="36" style="left:2866.0px;top:114.0px"><g fill="none" stroke="#8a8a8a" stroke-width="2"><path d="M14 10 V6 H30 V22 H26"/><rect x="6" y="12" width="20" height="20"/></g></svg>
<div style="position:absolute;left:2915.0px;top:113.0px;width:189.0px;height:36.0px;background:#282828;border-radius:8px;"></div>
<div style="position:absolute;left:2915.0px;top:113.0px;width:151.0px;height:36.0px;background:#545454;border-radius:0px;border-radius:8px 0 0 8px;"></div>
<div style="position:absolute;left:3029.0px;top:113.0px;width:37.0px;height:36.0px;background:#4772b3;border-radius:0px;"></div>
<div style="position:absolute;left:2953.0px;top:113.0px;width:1.5px;height:36.0px;background:#3f3f3f;border-radius:0px;"></div>
<div style="position:absolute;left:2991.0px;top:113.0px;width:1.5px;height:36.0px;background:#3f3f3f;border-radius:0px;"></div>
<div style="position:absolute;left:3029.0px;top:113.0px;width:1.5px;height:36.0px;background:#3f3f3f;border-radius:0px;"></div>
<svg width="36" height="36" style="left:2916.0px;top:114.0px"><g fill="none" stroke="#d0d0d0" stroke-width="2"><circle cx="18" cy="18" r="13"/><ellipse cx="18" cy="18" rx="6" ry="13"/><path d="M5 18 H31 M7 11 H29 M7 25 H29"/></g></svg>
<svg width="36" height="36" style="left:2954.0px;top:114.0px"><circle cx="18" cy="18" r="13.5" fill="#c8c8c8"/></svg>
<svg width="36" height="36" style="left:2992.0px;top:114.0px"><circle cx="18" cy="18" r="13" fill="none" stroke="#d0d0d0" stroke-width="2"/><path d="M18 5 V18 L7 25 A13 13 0 0 1 18 5Z" fill="#c8c8c8"/><path d="M22 27 l4-4 M25 29 l4-4" stroke="#d0d0d0" stroke-width="2"/></svg>
<svg width="36" height="36" style="left:3030.0px;top:114.0px"><circle cx="18" cy="18" r="13" fill="none" stroke="#fff" stroke-width="2.4"/><path d="M10 16 A8 8 0 0 1 17 9" fill="none" stroke="#fff" stroke-width="3" stroke-linecap="round"/><path d="M20 28 l3-4 M24 26 l3-4 M27 23 l3-3" stroke="#fff" stroke-width="2"/></svg>
<svg width="24" height="24" style="left:3073.0px;top:120.0px"><path d="M5.5 9.075 L12 15.575 L18.5 9.075" fill="none" stroke="#e0e0e0" stroke-width="2.1" stroke-linecap="round" stroke-linejoin="round"/></svg>
<div style="position:absolute;left:3119.0px;top:113.0px;width:36.0px;height:36.0px;background:#545454;border-radius:8px;box-sizing:border-box;border:1.5px solid #3d3d3d;"></div>
<div style="position:absolute;left:3129.0px;top:121.0px;width:5.0px;height:20.0px;background:#e0e0e0;border-radius:0px;"></div>
<div style="position:absolute;left:3140.0px;top:121.0px;width:5.0px;height:20.0px;background:#e0e0e0;border-radius:0px;"></div>
<svg width="3840" height="2400" style="filter:blur(0.4px)"><polygon points="1712.0,133.0 1745.0,128.0 1762.0,137.0 1727.5,143.0" fill="#bfa4b7" stroke="#bfa4b7" stroke-width="0.7" stroke-linejoin="round"/><polygon points="1712.0,133.0 1727.5,143.0 1728.5,178.0 1712.5,167.0" fill="#4e444b" stroke="#4e444b" stroke-width="0.7" stroke-linejoin="round"/><polygon points="1727.5,143.0 1762.0,137.0 1762.0,174.0 1728.5,178.0" fill="#ad94a6" stroke="#ad94a6" stroke-width="0.7" stroke-linejoin="round"/><polygon points="1620.0,138.0 1653.0,133.0 1670.0,142.0 1635.5,148.0" fill="#bfb1b3" stroke="#bfb1b3" stroke-width="0.7" stroke-linejoin="round"/><polygon points="1620.0,138.0 1635.5,148.0 1636.5,183.0 1620.5,172.0" fill="#4e494a" stroke="#4e494a" stroke-width="0.7" stroke-linejoin="round"/><polygon points="1635.5,148.0 1670.0,142.0 1670.0,179.0 1636.5,183.0" fill="#ada0a2" stroke="#ada0a2" stroke-width="0.7" stroke-linejoin="round"/><polygon points="1540.0,145.0 1573.0,140.0 1590.0,149.0 1555.5,155.0" fill="#e8e6f7" stroke="#e8e6f7" stroke-width="0.7" stroke-linejoin="round"/><polygon points="1540.0,145.0 1555.5,155.0 1556.5,190.0 1540.5,179.0" fill="#5e5e64" stroke="#5e5e64" stroke-width="0.7" stroke-linejoin="round"/><polygon points="1555.5,155.0 1590.0,149.0 1590.0,186.0 1556.5,190.0" fill="#d4d2e2" stroke="#d4d2e2" stroke-width="0.7" stroke-linejoin="round"/><polygon points="1462.0,160.0 1495.1,154.9 1512.0,164.1 1477.5,170.2" fill="#f1e1e4" stroke="#f1e1e4" stroke-width="0.7" stroke-linejoin="round"/><polygon points="1462.0,160.0 1477.5,170.2 1478.5,205.1 1462.5,193.9" fill="#615b5c" stroke="#615b5c" stroke-width="0.7" stroke-linejoin="round"/><polygon points="1477.5,170.2 1512.0,164.1 1512.0,201.0 1478.5,205.1" fill="#dccdd0" stroke="#dccdd0" stroke-width="0.7" stroke-linejoin="round"/><polygon points="1790.0,164.0 1823.1,158.9 1840.0,168.1 1805.5,174.2" fill="#acdfed" stroke="#acdfed" stroke-width="0.7" stroke-linejoin="round"/><polygon points="1790.0,164.0 1805.5,174.2 1806.5,209.1 1790.5,197.9" fill="#465a5f" stroke="#465a5f" stroke-width="0.7" stroke-linejoin="round"/><polygon points="1805.5,174.2 1840.0,168.1 1840.0,205.0 1806.5,209.1" fill="#9ccbd8" stroke="#9ccbd8" stroke-width="0.7" stroke-linejoin="round"/><polygon points="1376.0,174.9 1409.2,169.9 1426.0,179.1 1391.5,185.3" fill="#f1f1f1" stroke="#f1f1f1" stroke-width="0.7" stroke-linejoin="round"/><polygon points="1376.0,174.9 1391.5,185.3 1392.5,220.1 1376.5,208.9" fill="#616161" stroke="#616161" stroke-width="0.7" stroke-linejoin="round"/><polygon points="1391.5,185.3 1426.0,179.1 1426.0,215.9 1392.5,220.1" fill="#dcdcdc" stroke="#dcdcdc" stroke-width="0.7" stroke-linejoin="round"/><polygon points="1862.0,196.9 1895.3,191.8 1912.0,201.2 1877.5,207.5" fill="#f2f7ff" stroke="#f2f7ff" stroke-width="0.7" stroke-linejoin="round"/><polygon points="1862.0,196.9 1877.5,207.5 1878.5,242.2 1862.5,230.8" fill="#606266" stroke="#606266" stroke-width="0.7" stroke-linejoin="round"/><polygon points="1877.5,207.5 1912.0,201.2 1912.0,237.9 1878.5,242.2" fill="#dde2ea" stroke="#dde2ea" stroke-width="0.7" stroke-linejoin="round"/><polygon points="1694.0,204.9 1727.3,199.7 1744.0,209.2 1709.5,215.6" fill="#e8cf5b" stroke="#e8cf5b" stroke-width="0.7" stroke-linejoin="round"/><polygon points="1694.0,204.9 1709.5,215.6 1710.5,250.3 1694.5,238.8" fill="#5c5326" stroke="#5c5326" stroke-width="0.7" stroke-linejoin="round"/><polygon points="1709.5,215.6 1744.0,209.2 1744.0,245.9 1710.5,250.3" fill="#d4bc50" stroke="#d4bc50" stroke-width="0.7" stroke-linejoin="round"/><polygon points="1300.0,209.9 1333.4,204.7 1350.0,214.2 1315.5,220.6" fill="#e0c8d3" stroke="#e0c8d3" stroke-width="0.7" stroke-linejoin="round"/><polygon points="1300.0,209.9 1315.5,220.6 1316.5,255.3 1300.5,243.8" fill="#595054" stroke="#595054" stroke-width="0.7" stroke-linejoin="round"/><polygon points="1315.5,220.6 1350.0,214.2 1350.0,250.9 1316.5,255.3" fill="#ccb6c0" stroke="#ccb6c0" stroke-width="0.7" stroke-linejoin="round"/><polygon points="1543.0,218.9 1576.4,213.7 1593.0,223.3 1558.5,229.7" fill="#88a8ed" stroke="#88a8ed" stroke-width="0.7" stroke-linejoin="round"/><polygon points="1543.0,218.9 1558.5,229.7 1559.5,264.3 1543.5,252.7" fill="#37435e" stroke="#37435e" stroke-width="0.7" stroke-linejoin="round"/><polygon points="1558.5,229.7 1593.0,223.3 1593.0,259.9 1559.5,264.3" fill="#7a98d8" stroke="#7a98d8" stroke-width="0.7" stroke-linejoin="round"/><polygon points="1452.0,223.9 1485.4,218.7 1502.0,228.3 1467.5,234.7" fill="#dc97c2" stroke="#dc97c2" stroke-width="0.7" stroke-linejoin="round"/><polygon points="1452.0,223.9 1467.5,234.7 1468.5,269.4 1452.5,257.7" fill="#573d4d" stroke="#573d4d" stroke-width="0.7" stroke-linejoin="round"/><polygon points="1467.5,234.7 1502.0,228.3 1502.0,264.9 1468.5,269.4" fill="#c888b0" stroke="#c888b0" stroke-width="0.7" stroke-linejoin="round"/><polygon points="1617.0,226.9 1650.4,221.6 1667.0,231.3 1632.5,237.8" fill="#e3c2f7" stroke="#e3c2f7" stroke-width="0.7" stroke-linejoin="round"/><polygon points="1617.0,226.9 1632.5,237.8 1633.5,272.4 1617.5,260.7" fill="#5a4d61" stroke="#5a4d61" stroke-width="0.7" stroke-linejoin="round"/><polygon points="1632.5,237.8 1667.0,231.3 1667.0,267.9 1633.5,272.4" fill="#cfb0e2" stroke="#cfb0e2" stroke-width="0.7" stroke-linejoin="round"/><polygon points="1943.0,239.8 1976.5,234.6 1993.0,244.4 1958.5,250.9" fill="#eadee4" stroke="#eadee4" stroke-width="0.7" stroke-linejoin="round"/><polygon points="1943.0,239.8 1958.5,250.9 1959.5,285.4 1943.5,273.6" fill="#5c575a" stroke="#5c575a" stroke-width="0.7" stroke-linejoin="round"/><polygon points="1958.5,250.9 1993.0,244.4 1993.0,280.8 1959.5,285.4" fill="#d6cad0" stroke="#d6cad0" stroke-width="0.7" stroke-linejoin="round"/><polygon points="1803.0,245.8 1836.5,240.6 1853.0,250.4 1818.5,256.9" fill="#885d8e" stroke="#885d8e" stroke-width="0.7" stroke-linejoin="round"/><polygon points="1803.0,245.8 1818.5,256.9 1819.5,291.4 1803.5,279.6" fill="#372739" stroke="#372739" stroke-width="0.7" stroke-linejoin="round"/><polygon points="1818.5,256.9 1853.0,250.4 1853.0,286.8 1819.5,291.4" fill="#7a5280" stroke="#7a5280" stroke-width="0.7" stroke-linejoin="round"/><polygon points="1385.0,247.8 1418.6,242.6 1435.0,252.4 1400.5,258.9" fill="#9bd7f3" stroke="#9bd7f3" stroke-width="0.7" stroke-linejoin="round"/><polygon points="1385.0,247.8 1400.5,258.9 1401.5,293.4 1385.5,281.6" fill="#3e555f" stroke="#3e555f" stroke-width="0.7" stroke-linejoin="round"/><polygon points="1400.5,258.9 1435.0,252.4 1435.0,288.8 1401.5,293.4" fill="#8cc4de" stroke="#8cc4de" stroke-width="0.7" stroke-linejoin="round"/><polygon points="1233.0,254.8 1266.6,249.5 1283.0,259.4 1248.5,266.0" fill="#e6d99d" stroke="#e6d99d" stroke-width="0.7" stroke-linejoin="round"/><polygon points="1233.0,254.8 1248.5,266.0 1249.5,300.5 1233.5,288.6" fill="#5a553f" stroke="#5a553f" stroke-width="0.7" stroke-linejoin="round"/><polygon points="1248.5,266.0 1283.0,259.4 1283.0,295.8 1249.5,300.5" fill="#d2c68e" stroke="#d2c68e" stroke-width="0.7" stroke-linejoin="round"/><polygon points="1721.0,275.8 1754.7,270.4 1771.0,280.5 1736.5,287.2" fill="#f1edf7" stroke="#f1edf7" stroke-width="0.7" stroke-linejoin="round"/><polygon points="1721.0,275.8 1736.5,287.2 1737.5,321.6 1721.5,309.5" fill="#5d5c60" stroke="#5d5c60" stroke-width="0.7" stroke-linejoin="round"/><polygon points="1736.5,287.2 1771.0,280.5 1771.0,316.8 1737.5,321.6" fill="#dcd8e2" stroke="#dcd8e2" stroke-width="0.7" stroke-linejoin="round"/><polygon points="2010.0,276.8 2043.7,271.4 2060.0,281.5 2025.5,288.2" fill="#f1dcf9" stroke="#f1dcf9" stroke-width="0.7" stroke-linejoin="round"/><polygon points="2010.0,276.8 2025.5,288.2 2026.5,322.6 2010.5,310.5" fill="#5d5560" stroke="#5d5560" stroke-width="0.7" stroke-linejoin="round"/><polygon points="2025.5,288.2 2060.0,281.5 2060.0,317.8 2026.5,322.6" fill="#dcc8e4" stroke="#dcc8e4" stroke-width="0.7" stroke-linejoin="round"/><polygon points="1172.0,287.8 1205.8,282.4 1222.0,292.5 1187.5,299.3" fill="#f1f1f1" stroke="#f1f1f1" stroke-width="0.7" stroke-linejoin="round"/><polygon points="1172.0,287.8 1187.5,299.3 1188.5,333.6 1172.5,321.5" fill="#5d5d5d" stroke="#5d5d5d" stroke-width="0.7" stroke-linejoin="round"/><polygon points="1187.5,299.3 1222.0,292.5 1222.0,328.8 1188.5,333.6" fill="#dcdcdc" stroke="#dcdcdc" stroke-width="0.7" stroke-linejoin="round"/><polygon points="1309.0,287.8 1342.8,282.4 1359.0,292.5 1324.5,299.3" fill="#f3f1f1" stroke="#f3f1f1" stroke-width="0.7" stroke-linejoin="round"/><polygon points="1309.0,287.8 1324.5,299.3 1325.5,333.6 1309.5,321.5" fill="#5e5d5d" stroke="#5e5d5d" stroke-width="0.7" stroke-linejoin="round"/><polygon points="1324.5,299.3 1359.0,292.5 1359.0,328.8 1325.5,333.6" fill="#dedcdc" stroke="#dedcdc" stroke-width="0.7" stroke-linejoin="round"/><polygon points="1504.0,288.8 1537.8,283.4 1554.0,293.5 1519.5,300.3" fill="#f1eff0" stroke="#f1eff0" stroke-width="0.7" stroke-linejoin="round"/><polygon points="1504.0,288.8 1519.5,300.3 1520.5,334.6 1504.5,322.5" fill="#5d5c5c" stroke="#5d5c5c" stroke-width="0.7" stroke-linejoin="round"/><polygon points="1519.5,300.3 1554.0,293.5 1554.0,329.8 1520.5,334.6" fill="#dcdadb" stroke="#dcdadb" stroke-width="0.7" stroke-linejoin="round"/><polygon points="1596.0,293.8 1629.8,288.4 1646.0,298.5 1611.5,305.3" fill="#c4e0d3" stroke="#c4e0d3" stroke-width="0.7" stroke-linejoin="round"/><polygon points="1596.0,293.8 1611.5,305.3 1612.5,339.6 1596.5,327.5" fill="#4c5652" stroke="#4c5652" stroke-width="0.7" stroke-linejoin="round"/><polygon points="1611.5,305.3 1646.0,298.5 1646.0,334.8 1612.5,339.6" fill="#b2ccc0" stroke="#b2ccc0" stroke-width="0.7" stroke-linejoin="round"/><polygon points="1891.0,305.7 1924.9,300.3 1941.0,310.6 1906.5,317.4" fill="#2e3030" stroke="#2e3030" stroke-width="0.7" stroke-linejoin="round"/><polygon points="1891.0,305.7 1906.5,317.4 1907.5,351.7 1891.5,339.4" fill="#141515" stroke="#141515" stroke-width="0.7" stroke-linejoin="round"/><polygon points="1906.5,317.4 1941.0,310.6 1941.0,346.7 1907.5,351.7" fill="#262828" stroke="#262828" stroke-width="0.7" stroke-linejoin="round"/><polygon points="1410.0,312.7 1443.9,307.3 1460.0,317.6 1425.5,324.5" fill="#f7d7f1" stroke="#f7d7f1" stroke-width="0.7" stroke-linejoin="round"/><polygon points="1410.0,312.7 1425.5,324.5 1426.5,358.7 1410.5,346.4" fill="#5e535c" stroke="#5e535c" stroke-width="0.7" stroke-linejoin="round"/><polygon points="1425.5,324.5 1460.0,317.6 1460.0,353.7 1426.5,358.7" fill="#e2c4dc" stroke="#e2c4dc" stroke-width="0.7" stroke-linejoin="round"/><polygon points="1827.0,330.7 1861.0,325.2 1877.0,335.7 1842.5,342.7" fill="#b7b5b9" stroke="#b7b5b9" stroke-width="0.7" stroke-linejoin="round"/><polygon points="1827.0,330.7 1842.5,342.7 1843.5,376.8 1827.5,364.3" fill="#464647" stroke="#464647" stroke-width="0.7" stroke-linejoin="round"/><polygon points="1842.5,342.7 1877.0,335.7 1877.0,371.7 1843.5,376.8" fill="#a6a4a8" stroke="#a6a4a8" stroke-width="0.7" stroke-linejoin="round"/><polygon points="1251.0,331.7 1285.0,326.2 1301.0,336.7 1266.5,343.7" fill="#f1efef" stroke="#f1efef" stroke-width="0.7" stroke-linejoin="round"/><polygon points="1251.0,331.7 1266.5,343.7 1267.5,377.8 1251.5,365.3" fill="#5b5b5b" stroke="#5b5b5b" stroke-width="0.7" stroke-linejoin="round"/><polygon points="1266.5,343.7 1301.0,336.7 1301.0,372.7 1267.5,377.8" fill="#dcdada" stroke="#dcdada" stroke-width="0.7" stroke-linejoin="round"/><polygon points="1116.0,336.7 1150.0,331.2 1166.0,341.7 1131.5,348.7" fill="#e08cf5" stroke="#e08cf5" stroke-width="0.7" stroke-linejoin="round"/><polygon points="1116.0,336.7 1131.5,348.7 1132.5,382.8 1116.5,370.3" fill="#55375d" stroke="#55375d" stroke-width="0.7" stroke-linejoin="round"/><polygon points="1131.5,348.7 1166.0,341.7 1166.0,377.7 1132.5,382.8" fill="#cc7ee0" stroke="#cc7ee0" stroke-width="0.7" stroke-linejoin="round"/><polygon points="1681.0,336.7 1715.0,331.2 1731.0,341.7 1696.5,348.7" fill="#c07be4" stroke="#c07be4" stroke-width="0.7" stroke-linejoin="round"/><polygon points="1681.0,336.7 1696.5,348.7 1697.5,382.8 1681.5,370.3" fill="#493057" stroke="#493057" stroke-width="0.7" stroke-linejoin="round"/><polygon points="1696.5,348.7 1731.0,341.7 1731.0,377.7 1697.5,382.8" fill="#ae6ed0" stroke="#ae6ed0" stroke-width="0.7" stroke-linejoin="round"/><polygon points="2065.0,343.7 2099.0,338.1 2115.0,348.7 2080.5,355.8" fill="#c4c4c4" stroke="#c4c4c4" stroke-width="0.7" stroke-linejoin="round"/><polygon points="2065.0,343.7 2080.5,355.8 2081.5,389.8 2065.5,377.3" fill="#4b4b4b" stroke="#4b4b4b" stroke-width="0.7" stroke-linejoin="round"/><polygon points="2080.5,355.8 2115.0,348.7 2115.0,384.7 2081.5,389.8" fill="#b2b2b2" stroke="#b2b2b2" stroke-width="0.7" stroke-linejoin="round"/><polygon points="1984.0,354.7 2018.1,349.1 2034.0,359.8 1999.5,366.9" fill="#9b888e" stroke="#9b888e" stroke-width="0.7" stroke-linejoin="round"/><polygon points="1984.0,354.7 1999.5,366.9 2000.5,400.9 1984.5,388.2" fill="#3c3537" stroke="#3c3537" stroke-width="0.7" stroke-linejoin="round"/><polygon points="1999.5,366.9 2034.0,359.8 2034.0,395.7 2000.5,400.9" fill="#8c7a80" stroke="#8c7a80" stroke-width="0.7" stroke-linejoin="round"/><polygon points="1349.0,355.7 1383.1,350.1 1399.0,360.8 1364.5,367.9" fill="#cff1be" stroke="#cff1be" stroke-width="0.7" stroke-linejoin="round"/><polygon points="1349.0,355.7 1364.5,367.9 1365.5,401.9 1349.5,389.2" fill="#4e5b48" stroke="#4e5b48" stroke-width="0.7" stroke-linejoin="round"/><polygon points="1364.5,367.9 1399.0,360.8 1399.0,396.7 1365.5,401.9" fill="#bcdcac" stroke="#bcdcac" stroke-width="0.7" stroke-linejoin="round"/><polygon points="1520.0,357.7 1554.1,352.1 1570.0,362.8 1535.5,369.9" fill="#595d6a" stroke="#595d6a" stroke-width="0.7" stroke-linejoin="round"/><polygon points="1520.0,357.7 1535.5,369.9 1536.5,403.9 1520.5,391.2" fill="#24252a" stroke="#24252a" stroke-width="0.7" stroke-linejoin="round"/><polygon points="1535.5,369.9 1570.0,362.8 1570.0,398.7 1536.5,403.9" fill="#4e525e" stroke="#4e525e" stroke-width="0.7" stroke-linejoin="round"/><polygon points="1602.0,357.7 1636.1,352.1 1652.0,362.8 1617.5,369.9" fill="#cdc4d5" stroke="#cdc4d5" stroke-width="0.7" stroke-linejoin="round"/><polygon points="1602.0,357.7 1617.5,369.9 1618.5,403.9 1602.5,391.2" fill="#4d4a50" stroke="#4d4a50" stroke-width="0.7" stroke-linejoin="round"/><polygon points="1617.5,369.9 1652.0,362.8 1652.0,398.7 1618.5,403.9" fill="#bab2c2" stroke="#bab2c2" stroke-width="0.7" stroke-linejoin="round"/><polygon points="1752.0,364.6 1786.2,359.1 1802.0,369.8 1767.5,376.9" fill="#f5f5f5" stroke="#f5f5f5" stroke-width="0.7" stroke-linejoin="round"/><polygon points="1752.0,364.6 1767.5,376.9 1768.5,410.9 1752.5,398.2" fill="#5c5c5c" stroke="#5c5c5c" stroke-width="0.7" stroke-linejoin="round"/><polygon points="1767.5,376.9 1802.0,369.8 1802.0,405.6 1768.5,410.9" fill="#e0e0e0" stroke="#e0e0e0" stroke-width="0.7" stroke-linejoin="round"/><polygon points="1445.0,376.6 1479.2,371.0 1495.0,381.8 1460.5,389.1" fill="#f5f5f5" stroke="#f5f5f5" stroke-width="0.7" stroke-linejoin="round"/><polygon points="1445.0,376.6 1460.5,389.1 1461.5,423.0 1445.5,410.2" fill="#5b5b5b" stroke="#5b5b5b" stroke-width="0.7" stroke-linejoin="round"/><polygon points="1460.5,389.1 1495.0,381.8 1495.0,417.6 1461.5,423.0" fill="#e0e0e0" stroke="#e0e0e0" stroke-width="0.7" stroke-linejoin="round"/><polygon points="1895.0,382.6 1929.2,377.0 1945.0,387.9 1910.5,395.1" fill="#d35d3b" stroke="#d35d3b" stroke-width="0.7" stroke-linejoin="round"/><polygon points="1895.0,382.6 1910.5,395.1 1911.5,429.0 1895.5,416.1" fill="#4f2519" stroke="#4f2519" stroke-width="0.7" stroke-linejoin="round"/><polygon points="1910.5,395.1 1945.0,387.9 1945.0,423.6 1911.5,429.0" fill="#c05232" stroke="#c05232" stroke-width="0.7" stroke-linejoin="round"/><polygon points="1180.0,398.6 1214.3,392.9 1230.0,403.9 1195.5,411.2" fill="#edc2d5" stroke="#edc2d5" stroke-width="0.7" stroke-linejoin="round"/><polygon points="1180.0,398.6 1195.5,411.2 1196.5,445.1 1180.5,432.1" fill="#58484f" stroke="#58484f" stroke-width="0.7" stroke-linejoin="round"/><polygon points="1195.5,411.2 1230.0,403.9 1230.0,439.6 1196.5,445.1" fill="#d8b0c2" stroke="#d8b0c2" stroke-width="0.7" stroke-linejoin="round"/><polygon points="1078.0,409.6 1112.4,403.9 1128.0,415.0 1093.5,422.3" fill="#e8efe2" stroke="#e8efe2" stroke-width="0.7" stroke-linejoin="round"/><polygon points="1078.0,409.6 1093.5,422.3 1094.5,456.1 1078.5,443.0" fill="#565853" stroke="#565853" stroke-width="0.7" stroke-linejoin="round"/><polygon points="1093.5,422.3 1128.0,415.0 1128.0,450.6 1094.5,456.1" fill="#d4dace" stroke="#d4dace" stroke-width="0.7" stroke-linejoin="round"/><polygon points="1682.0,413.6 1716.4,407.9 1732.0,419.0 1697.5,426.4" fill="#eac8ea" stroke="#eac8ea" stroke-width="0.7" stroke-linejoin="round"/><polygon points="1682.0,413.6 1697.5,426.4 1698.5,460.1 1682.5,447.0" fill="#564a56" stroke="#564a56" stroke-width="0.7" stroke-linejoin="round"/><polygon points="1697.5,426.4 1732.0,419.0 1732.0,454.6 1698.5,460.1" fill="#d6b6d6" stroke="#d6b6d6" stroke-width="0.7" stroke-linejoin="round"/><polygon points="1258.0,416.6 1292.4,410.8 1308.0,422.0 1273.5,429.4" fill="#86778e" stroke="#86778e" stroke-width="0.7" stroke-linejoin="round"/><polygon points="1258.0,416.6 1273.5,429.4 1274.5,463.2 1258.5,450.0" fill="#332e36" stroke="#332e36" stroke-width="0.7" stroke-linejoin="round"/><polygon points="1273.5,429.4 1308.0,422.0 1308.0,457.6 1274.5,463.2" fill="#786a80" stroke="#786a80" stroke-width="0.7" stroke-linejoin="round"/><polygon points="1596.0,418.6 1630.4,412.8 1646.0,424.0 1611.5,431.4" fill="#b7a0c2" stroke="#b7a0c2" stroke-width="0.7" stroke-linejoin="round"/><polygon points="1596.0,418.6 1611.5,431.4 1612.5,465.2 1596.5,452.0" fill="#443c48" stroke="#443c48" stroke-width="0.7" stroke-linejoin="round"/><polygon points="1611.5,431.4 1646.0,424.0 1646.0,459.6 1612.5,465.2" fill="#a690b0" stroke="#a690b0" stroke-width="0.7" stroke-linejoin="round"/><polygon points="1523.0,419.6 1557.4,413.8 1573.0,425.0 1538.5,432.4" fill="#efefef" stroke="#efefef" stroke-width="0.7" stroke-linejoin="round"/><polygon points="1523.0,419.6 1538.5,432.4 1539.5,466.2 1523.5,453.0" fill="#585858" stroke="#585858" stroke-width="0.7" stroke-linejoin="round"/><polygon points="1538.5,432.4 1573.0,425.0 1573.0,460.6 1539.5,466.2" fill="#dadada" stroke="#dadada" stroke-width="0.7" stroke-linejoin="round"/><polygon points="1825.0,422.5 1859.5,416.8 1875.0,428.0 1840.5,435.4" fill="#b7dc9d" stroke="#b7dc9d" stroke-width="0.7" stroke-linejoin="round"/><polygon points="1825.0,422.5 1840.5,435.4 1841.5,469.2 1825.5,456.0" fill="#44513b" stroke="#44513b" stroke-width="0.7" stroke-linejoin="round"/><polygon points="1840.5,435.4 1875.0,428.0 1875.0,463.5 1841.5,469.2" fill="#a6c88e" stroke="#a6c88e" stroke-width="0.7" stroke-linejoin="round"/><polygon points="2089.0,424.5 2123.5,418.8 2139.0,430.0 2104.5,437.5" fill="#eafff7" stroke="#eafff7" stroke-width="0.7" stroke-linejoin="round"/><polygon points="2089.0,424.5 2104.5,437.5 2105.5,471.2 2089.5,458.0" fill="#565e5b" stroke="#565e5b" stroke-width="0.7" stroke-linejoin="round"/><polygon points="2104.5,437.5 2139.0,430.0 2139.0,465.5 2105.5,471.2" fill="#d6ece2" stroke="#d6ece2" stroke-width="0.7" stroke-linejoin="round"/><polygon points="1333.0,439.5 1367.5,433.8 1383.0,445.1 1348.5,452.6" fill="#b9775d" stroke="#b9775d" stroke-width="0.7" stroke-linejoin="round"/><polygon points="1333.0,439.5 1348.5,452.6 1349.5,486.2 1333.5,472.9" fill="#442d24" stroke="#442d24" stroke-width="0.7" stroke-linejoin="round"/><polygon points="1348.5,452.6 1383.0,445.1 1383.0,480.5 1349.5,486.2" fill="#a86a52" stroke="#a86a52" stroke-width="0.7" stroke-linejoin="round"/><polygon points="1422.0,446.5 1456.6,440.7 1472.0,452.1 1437.5,459.7" fill="#f3f3c0" stroke="#f3f3c0" stroke-width="0.7" stroke-linejoin="round"/><polygon points="1422.0,446.5 1437.5,459.7 1438.5,493.3 1422.5,479.9" fill="#585846" stroke="#585846" stroke-width="0.7" stroke-linejoin="round"/><polygon points="1437.5,459.7 1472.0,452.1 1472.0,487.5 1438.5,493.3" fill="#dedeae" stroke="#dedeae" stroke-width="0.7" stroke-linejoin="round"/><polygon points="1757.0,451.5 1791.6,445.7 1807.0,457.1 1772.5,464.7" fill="#595959" stroke="#595959" stroke-width="0.7" stroke-linejoin="round"/><polygon points="1757.0,451.5 1772.5,464.7 1773.5,498.3 1757.5,484.9" fill="#232323" stroke="#232323" stroke-width="0.7" stroke-linejoin="round"/><polygon points="1772.5,464.7 1807.0,457.1 1807.0,492.5 1773.5,498.3" fill="#4e4e4e" stroke="#4e4e4e" stroke-width="0.7" stroke-linejoin="round"/><polygon points="2001.0,452.5 2035.6,446.7 2051.0,458.1 2016.5,465.7" fill="#e6b7de" stroke="#e6b7de" stroke-width="0.7" stroke-linejoin="round"/><polygon points="2001.0,452.5 2016.5,465.7 2017.5,499.3 2001.5,485.9" fill="#544351" stroke="#544351" stroke-width="0.7" stroke-linejoin="round"/><polygon points="2016.5,465.7 2051.0,458.1 2051.0,493.5 2017.5,499.3" fill="#d2a6ca" stroke="#d2a6ca" stroke-width="0.7" stroke-linejoin="round"/><polygon points="1901.0,464.5 1935.7,458.6 1951.0,470.1 1916.5,477.8" fill="#48dca0" stroke="#48dca0" stroke-width="0.7" stroke-linejoin="round"/><polygon points="1901.0,464.5 1916.5,477.8 1917.5,511.4 1901.5,497.9" fill="#1c503b" stroke="#1c503b" stroke-width="0.7" stroke-linejoin="round"/><polygon points="1916.5,477.8 1951.0,470.1 1951.0,505.5 1917.5,511.4" fill="#3ec890" stroke="#3ec890" stroke-width="0.7" stroke-linejoin="round"/><polygon points="1141.0,470.5 1175.7,464.6 1191.0,476.2 1156.5,483.9" fill="#9d534a" stroke="#9d534a" stroke-width="0.7" stroke-linejoin="round"/><polygon points="1141.0,470.5 1156.5,483.9 1157.5,517.4 1141.5,503.8" fill="#3a201d" stroke="#3a201d" stroke-width="0.7" stroke-linejoin="round"/><polygon points="1156.5,483.9 1191.0,476.2 1191.0,511.5 1157.5,517.4" fill="#8e4840" stroke="#8e4840" stroke-width="0.7" stroke-linejoin="round"/><polygon points="1561.0,486.4 1595.8,480.6 1611.0,492.2 1576.5,500.0" fill="#9d9d9d" stroke="#9d9d9d" stroke-width="0.7" stroke-linejoin="round"/><polygon points="1561.0,486.4 1576.5,500.0 1577.5,533.4 1561.5,519.8" fill="#3a3a3a" stroke="#3a3a3a" stroke-width="0.7" stroke-linejoin="round"/><polygon points="1576.5,500.0 1611.0,492.2 1611.0,527.4 1577.5,533.4" fill="#8e8e8e" stroke="#8e8e8e" stroke-width="0.7" stroke-linejoin="round"/><polygon points="1676.0,491.4 1710.8,485.5 1726.0,497.2 1691.5,505.0" fill="#554e5b" stroke="#554e5b" stroke-width="0.7" stroke-linejoin="round"/><polygon points="1676.0,491.4 1691.5,505.0 1692.5,538.5 1676.5,524.8" fill="#211e23" stroke="#211e23" stroke-width="0.7" stroke-linejoin="round"/><polygon points="1691.5,505.0 1726.0,497.2 1726.0,532.4 1692.5,538.5" fill="#4a4450" stroke="#4a4450" stroke-width="0.7" stroke-linejoin="round"/><polygon points="1068.0,500.4 1102.9,494.5 1118.0,506.3 1083.5,514.1" fill="#484e53" stroke="#484e53" stroke-width="0.7" stroke-linejoin="round"/><polygon points="1068.0,500.4 1083.5,514.1 1084.5,547.5 1068.5,533.7" fill="#1c1e20" stroke="#1c1e20" stroke-width="0.7" stroke-linejoin="round"/><polygon points="1083.5,514.1 1118.0,506.3 1118.0,541.4 1084.5,547.5" fill="#3e4448" stroke="#3e4448" stroke-width="0.7" stroke-linejoin="round"/><polygon points="1233.0,503.4 1267.9,497.5 1283.0,509.3 1248.5,517.1" fill="#bebebe" stroke="#bebebe" stroke-width="0.7" stroke-linejoin="round"/><polygon points="1233.0,503.4 1248.5,517.1 1249.5,550.5 1233.5,536.7" fill="#444444" stroke="#444444" stroke-width="0.7" stroke-linejoin="round"/><polygon points="1248.5,517.1 1283.0,509.3 1283.0,544.4 1249.5,550.5" fill="#acacac" stroke="#acacac" stroke-width="0.7" stroke-linejoin="round"/><polygon points="1477.0,503.4 1511.9,497.5 1527.0,509.3 1492.5,517.1" fill="#f3f3f3" stroke="#f3f3f3" stroke-width="0.7" stroke-linejoin="round"/><polygon points="1477.0,503.4 1492.5,517.1 1493.5,550.5 1477.5,536.7" fill="#565656" stroke="#565656" stroke-width="0.7" stroke-linejoin="round"/><polygon points="1492.5,517.1 1527.0,509.3 1527.0,544.4 1493.5,550.5" fill="#dedede" stroke="#dedede" stroke-width="0.7" stroke-linejoin="round"/><polygon points="2090.0,507.4 2124.9,501.5 2140.0,513.3 2105.5,521.2" fill="#ed9df5" stroke="#ed9df5" stroke-width="0.7" stroke-linejoin="round"/><polygon points="2090.0,507.4 2105.5,521.2 2106.5,554.5 2090.5,540.7" fill="#543957" stroke="#543957" stroke-width="0.7" stroke-linejoin="round"/><polygon points="2105.5,521.2 2140.0,513.3 2140.0,548.4 2106.5,554.5" fill="#d88ee0" stroke="#d88ee0" stroke-width="0.7" stroke-linejoin="round"/><polygon points="1364.0,516.4 1398.9,510.4 1414.0,522.3 1379.5,530.3" fill="#b16c8e" stroke="#b16c8e" stroke-width="0.7" stroke-linejoin="round"/><polygon points="1364.0,516.4 1379.5,530.3 1380.5,563.6 1364.5,549.7" fill="#3f2834" stroke="#3f2834" stroke-width="0.7" stroke-linejoin="round"/><polygon points="1379.5,530.3 1414.0,522.3 1414.0,557.4 1380.5,563.6" fill="#a06080" stroke="#a06080" stroke-width="0.7" stroke-linejoin="round"/><polygon points="1844.0,521.4 1879.0,515.4 1894.0,527.3 1859.5,535.3" fill="#d1f1e2" stroke="#d1f1e2" stroke-width="0.7" stroke-linejoin="round"/><polygon points="1844.0,521.4 1859.5,535.3 1860.5,568.6 1844.5,554.7" fill="#4a5550" stroke="#4a5550" stroke-width="0.7" stroke-linejoin="round"/><polygon points="1859.5,535.3 1894.0,527.3 1894.0,562.4 1860.5,568.6" fill="#bedcce" stroke="#bedcce" stroke-width="0.7" stroke-linejoin="round"/><polygon points="1757.0,529.4 1792.0,523.4 1807.0,535.4 1772.5,543.4" fill="#86997b" stroke="#86997b" stroke-width="0.7" stroke-linejoin="round"/><polygon points="1757.0,529.4 1772.5,543.4 1773.5,576.6 1757.5,562.6" fill="#31372d" stroke="#31372d" stroke-width="0.7" stroke-linejoin="round"/><polygon points="1772.5,543.4 1807.0,535.4 1807.0,570.4 1773.5,576.6" fill="#788a6e" stroke="#788a6e" stroke-width="0.7" stroke-linejoin="round"/><polygon points="1987.0,534.4 2022.0,528.4 2037.0,540.4 2002.5,548.4" fill="#f5f5f5" stroke="#f5f5f5" stroke-width="0.7" stroke-linejoin="round"/><polygon points="1987.0,534.4 2002.5,548.4 2003.5,581.6 1987.5,567.6" fill="#565656" stroke="#565656" stroke-width="0.7" stroke-linejoin="round"/><polygon points="2002.5,548.4 2037.0,540.4 2037.0,575.4 2003.5,581.6" fill="#e0e0e0" stroke="#e0e0e0" stroke-width="0.7" stroke-linejoin="round"/><polygon points="1615.0,537.4 1650.0,531.3 1665.0,543.4 1630.5,551.4" fill="#59b9a8" stroke="#59b9a8" stroke-width="0.7" stroke-linejoin="round"/><polygon points="1615.0,537.4 1630.5,551.4 1631.5,584.7 1615.5,570.6" fill="#21423c" stroke="#21423c" stroke-width="0.7" stroke-linejoin="round"/><polygon points="1630.5,551.4 1665.0,543.4 1665.0,578.4 1631.5,584.7" fill="#4ea898" stroke="#4ea898" stroke-width="0.7" stroke-linejoin="round"/><polygon points="1912.0,539.4 1947.1,533.3 1962.0,545.4 1927.5,553.5" fill="#afa6a6" stroke="#afa6a6" stroke-width="0.7" stroke-linejoin="round"/><polygon points="1912.0,539.4 1927.5,553.5 1928.5,586.7 1912.5,572.6" fill="#3e3b3b" stroke="#3e3b3b" stroke-width="0.7" stroke-linejoin="round"/><polygon points="1927.5,553.5 1962.0,545.4 1962.0,580.4 1928.5,586.7" fill="#9e9696" stroke="#9e9696" stroke-width="0.7" stroke-linejoin="round"/><polygon points="1291.0,542.4 1326.1,536.3 1341.0,548.4 1306.5,556.5" fill="#62b950" stroke="#62b950" stroke-width="0.7" stroke-linejoin="round"/><polygon points="1291.0,542.4 1306.5,556.5 1307.5,589.7 1291.5,575.6" fill="#24421f" stroke="#24421f" stroke-width="0.7" stroke-linejoin="round"/><polygon points="1306.5,556.5 1341.0,548.4 1341.0,583.4 1307.5,589.7" fill="#56a846" stroke="#56a846" stroke-width="0.7" stroke-linejoin="round"/><polygon points="1154.0,548.3 1189.1,542.3 1204.0,554.4 1169.5,562.5" fill="#f3fcfc" stroke="#f3fcfc" stroke-width="0.7" stroke-linejoin="round"/><polygon points="1154.0,548.3 1169.5,562.5 1170.5,595.7 1154.5,581.6" fill="#555858" stroke="#555858" stroke-width="0.7" stroke-linejoin="round"/><polygon points="1169.5,562.5 1204.0,554.4 1204.0,589.3 1170.5,595.7" fill="#dee6e6" stroke="#dee6e6" stroke-width="0.7" stroke-linejoin="round"/><polygon points="1550.0,551.3 1585.1,545.3 1600.0,557.5 1565.5,565.6" fill="#eab7f5" stroke="#eab7f5" stroke-width="0.7" stroke-linejoin="round"/><polygon points="1550.0,551.3 1565.5,565.6 1566.5,598.7 1550.5,584.5" fill="#524155" stroke="#524155" stroke-width="0.7" stroke-linejoin="round"/><polygon points="1565.5,565.6 1600.0,557.5 1600.0,592.3 1566.5,598.7" fill="#d6a6e0" stroke="#d6a6e0" stroke-width="0.7" stroke-linejoin="round"/><polygon points="1401.0,573.3 1436.2,567.2 1451.0,579.5 1416.5,587.8" fill="#f3eaa0" stroke="#f3eaa0" stroke-width="0.7" stroke-linejoin="round"/><polygon points="1401.0,573.3 1416.5,587.8 1417.5,620.8 1401.5,606.5" fill="#545138" stroke="#545138" stroke-width="0.7" stroke-linejoin="round"/><polygon points="1416.5,587.8 1451.0,579.5 1451.0,614.3 1417.5,620.8" fill="#ded690" stroke="#ded690" stroke-width="0.7" stroke-linejoin="round"/><polygon points="1077.0,575.3 1112.2,569.2 1127.0,581.5 1092.5,589.8" fill="#fce4f1" stroke="#fce4f1" stroke-width="0.7" stroke-linejoin="round"/><polygon points="1077.0,575.3 1092.5,589.8 1093.5,622.8 1077.5,608.5" fill="#574f53" stroke="#574f53" stroke-width="0.7" stroke-linejoin="round"/><polygon points="1092.5,589.8 1127.0,581.5 1127.0,616.3 1093.5,622.8" fill="#e6d0dc" stroke="#e6d0dc" stroke-width="0.7" stroke-linejoin="round"/><polygon points="1465.0,576.3 1500.2,570.2 1515.0,582.5 1480.5,590.8" fill="#b7c09d" stroke="#b7c09d" stroke-width="0.7" stroke-linejoin="round"/><polygon points="1465.0,576.3 1480.5,590.8 1481.5,623.8 1465.5,609.5" fill="#404338" stroke="#404338" stroke-width="0.7" stroke-linejoin="round"/><polygon points="1480.5,590.8 1515.0,582.5 1515.0,617.3 1481.5,623.8" fill="#a6ae8e" stroke="#a6ae8e" stroke-width="0.7" stroke-linejoin="round"/><polygon points="2065.0,584.3 2100.3,578.1 2115.0,590.6 2080.5,598.9" fill="#fffffe" stroke="#fffffe" stroke-width="0.7" stroke-linejoin="round"/><polygon points="2065.0,584.3 2080.5,598.9 2081.5,631.9 2065.5,617.4" fill="#585857" stroke="#585857" stroke-width="0.7" stroke-linejoin="round"/><polygon points="2080.5,598.9 2115.0,590.6 2115.0,625.3 2081.5,631.9" fill="#ecebe8" stroke="#ecebe8" stroke-width="0.7" stroke-linejoin="round"/><polygon points="1229.0,602.3 1264.4,596.1 1279.0,608.6 1244.5,617.0" fill="#d9b1e4" stroke="#d9b1e4" stroke-width="0.7" stroke-linejoin="round"/><polygon points="1229.0,602.3 1244.5,617.0 1245.5,649.9 1229.5,635.4" fill="#4b3d4e" stroke="#4b3d4e" stroke-width="0.7" stroke-linejoin="round"/><polygon points="1244.5,617.0 1279.0,608.6 1279.0,643.3 1245.5,649.9" fill="#c6a0d0" stroke="#c6a0d0" stroke-width="0.7" stroke-linejoin="round"/><polygon points="1808.0,602.3 1843.4,596.1 1858.0,608.6 1823.5,617.0" fill="#d9d9b1" stroke="#d9d9b1" stroke-width="0.7" stroke-linejoin="round"/><polygon points="1808.0,602.3 1823.5,617.0 1824.5,649.9 1808.5,635.4" fill="#4b4b3d" stroke="#4b4b3d" stroke-width="0.7" stroke-linejoin="round"/><polygon points="1823.5,617.0 1858.0,608.6 1858.0,643.3 1824.5,649.9" fill="#c6c6a0" stroke="#c6c6a0" stroke-width="0.7" stroke-linejoin="round"/><polygon points="1706.0,605.3 1741.4,599.1 1756.0,611.6 1721.5,620.0" fill="#e2d7e0" stroke="#e2d7e0" stroke-width="0.7" stroke-linejoin="round"/><polygon points="1706.0,605.3 1721.5,620.0 1722.5,652.9 1706.5,638.4" fill="#4d4a4d" stroke="#4d4a4d" stroke-width="0.7" stroke-linejoin="round"/><polygon points="1721.5,620.0 1756.0,611.6 1756.0,646.3 1722.5,652.9" fill="#cec4cc" stroke="#cec4cc" stroke-width="0.7" stroke-linejoin="round"/><polygon points="1965.0,615.2 2000.4,609.0 2015.0,621.7 1980.5,630.1" fill="#7b687b" stroke="#7b687b" stroke-width="0.7" stroke-linejoin="round"/><polygon points="1965.0,615.2 1980.5,630.1 1981.5,663.0 1965.5,648.3" fill="#2c252c" stroke="#2c252c" stroke-width="0.7" stroke-linejoin="round"/><polygon points="1980.5,630.1 2015.0,621.7 2015.0,656.2 1981.5,663.0" fill="#6e5c6e" stroke="#6e5c6e" stroke-width="0.7" stroke-linejoin="round"/><polygon points="1163.0,625.2 1198.5,619.0 1213.0,631.7 1178.5,640.2" fill="#c097a0" stroke="#c097a0" stroke-width="0.7" stroke-linejoin="round"/><polygon points="1163.0,625.2 1178.5,640.2 1179.5,673.0 1163.5,658.3" fill="#423437" stroke="#423437" stroke-width="0.7" stroke-linejoin="round"/><polygon points="1178.5,640.2 1213.0,631.7 1213.0,666.2 1179.5,673.0" fill="#ae8890" stroke="#ae8890" stroke-width="0.7" stroke-linejoin="round"/><polygon points="1632.0,629.2 1667.5,623.0 1682.0,635.7 1647.5,644.2" fill="#b1c6d3" stroke="#b1c6d3" stroke-width="0.7" stroke-linejoin="round"/><polygon points="1632.0,629.2 1647.5,644.2 1648.5,677.0 1632.5,662.3" fill="#3d4448" stroke="#3d4448" stroke-width="0.7" stroke-linejoin="round"/><polygon points="1647.5,644.2 1682.0,635.7 1682.0,670.2 1648.5,677.0" fill="#a0b4c0" stroke="#a0b4c0" stroke-width="0.7" stroke-linejoin="round"/><polygon points="1873.0,629.2 1908.5,623.0 1923.0,635.7 1888.5,644.2" fill="#6ac2c2" stroke="#6ac2c2" stroke-width="0.7" stroke-linejoin="round"/><polygon points="1873.0,629.2 1888.5,644.2 1889.5,677.0 1873.5,662.3" fill="#264242" stroke="#264242" stroke-width="0.7" stroke-linejoin="round"/><polygon points="1888.5,644.2 1923.0,635.7 1923.0,670.2 1889.5,677.0" fill="#5eb0b0" stroke="#5eb0b0" stroke-width="0.7" stroke-linejoin="round"/><polygon points="1302.0,630.2 1337.5,624.0 1352.0,636.7 1317.5,645.2" fill="#eae48c" stroke="#eae48c" stroke-width="0.7" stroke-linejoin="round"/><polygon points="1302.0,630.2 1317.5,645.2 1318.5,678.0 1302.5,663.3" fill="#4f4d31" stroke="#4f4d31" stroke-width="0.7" stroke-linejoin="round"/><polygon points="1317.5,645.2 1352.0,636.7 1352.0,671.2 1318.5,678.0" fill="#d6d07e" stroke="#d6d07e" stroke-width="0.7" stroke-linejoin="round"/><polygon points="1369.0,630.2 1404.5,624.0 1419.0,636.7 1384.5,645.2" fill="#dc32f5" stroke="#dc32f5" stroke-width="0.7" stroke-linejoin="round"/><polygon points="1369.0,630.2 1384.5,645.2 1385.5,678.0 1369.5,663.3" fill="#4a1453" stroke="#4a1453" stroke-width="0.7" stroke-linejoin="round"/><polygon points="1384.5,645.2 1419.0,636.7 1419.0,671.2 1385.5,678.0" fill="#c82ae0" stroke="#c82ae0" stroke-width="0.7" stroke-linejoin="round"/><polygon points="1537.0,639.2 1572.6,632.9 1587.0,645.8 1552.5,654.3" fill="#fcf1f1" stroke="#fcf1f1" stroke-width="0.7" stroke-linejoin="round"/><polygon points="1537.0,639.2 1552.5,654.3 1553.5,687.1 1537.5,672.2" fill="#545151" stroke="#545151" stroke-width="0.7" stroke-linejoin="round"/><polygon points="1552.5,654.3 1587.0,645.8 1587.0,680.2 1553.5,687.1" fill="#e6dcdc" stroke="#e6dcdc" stroke-width="0.7" stroke-linejoin="round"/><polygon points="1453.0,649.2 1488.6,642.9 1503.0,655.8 1468.5,664.4" fill="#7b8e84" stroke="#7b8e84" stroke-width="0.7" stroke-linejoin="round"/><polygon points="1453.0,649.2 1468.5,664.4 1469.5,697.1 1453.5,682.2" fill="#2b312e" stroke="#2b312e" stroke-width="0.7" stroke-linejoin="round"/><polygon points="1468.5,664.4 1503.0,655.8 1503.0,690.2 1469.5,697.1" fill="#6e8076" stroke="#6e8076" stroke-width="0.7" stroke-linejoin="round"/><polygon points="2041.0,660.2 2076.7,653.8 2091.0,666.8 2056.5,675.5" fill="#fcfcf9" stroke="#fcfcf9" stroke-width="0.7" stroke-linejoin="round"/><polygon points="2041.0,660.2 2056.5,675.5 2057.5,708.2 2041.5,693.2" fill="#545453" stroke="#545453" stroke-width="0.7" stroke-linejoin="round"/><polygon points="2056.5,675.5 2091.0,666.8 2091.0,701.2 2057.5,708.2" fill="#e6e6e4" stroke="#e6e6e4" stroke-width="0.7" stroke-linejoin="round"/><polygon points="1748.0,667.2 1783.7,660.8 1798.0,673.9 1763.5,682.6" fill="#6ad1dc" stroke="#6ad1dc" stroke-width="0.7" stroke-linejoin="round"/><polygon points="1748.0,667.2 1763.5,682.6 1764.5,715.2 1748.5,700.1" fill="#254649" stroke="#254649" stroke-width="0.7" stroke-linejoin="round"/><polygon points="1763.5,682.6 1798.0,673.9 1798.0,708.2 1764.5,715.2" fill="#5ebec8" stroke="#5ebec8" stroke-width="0.7" stroke-linejoin="round"/><polygon points="1099.0,673.1 1134.7,666.8 1149.0,679.9 1114.5,688.6" fill="#a8bbce" stroke="#a8bbce" stroke-width="0.7" stroke-linejoin="round"/><polygon points="1099.0,673.1 1114.5,688.6 1115.5,721.2 1099.5,706.1" fill="#393f45" stroke="#393f45" stroke-width="0.7" stroke-linejoin="round"/><polygon points="1114.5,688.6 1149.0,679.9 1149.0,714.1 1115.5,721.2" fill="#98aabb" stroke="#98aabb" stroke-width="0.7" stroke-linejoin="round"/><polygon points="1406.0,694.1 1441.8,687.7 1456.0,701.0 1421.5,709.8" fill="#99b18c" stroke="#99b18c" stroke-width="0.7" stroke-linejoin="round"/><polygon points="1406.0,694.1 1421.5,709.8 1422.5,742.3 1406.5,727.0" fill="#343b30" stroke="#343b30" stroke-width="0.7" stroke-linejoin="round"/><polygon points="1421.5,709.8 1456.0,701.0 1456.0,735.1 1422.5,742.3" fill="#8aa07e" stroke="#8aa07e" stroke-width="0.7" stroke-linejoin="round"/><polygon points="1683.0,697.1 1718.9,690.7 1733.0,704.0 1698.5,712.8" fill="#f3efc8" stroke="#f3efc8" stroke-width="0.7" stroke-linejoin="round"/><polygon points="1683.0,697.1 1698.5,712.8 1699.5,745.3 1683.5,730.0" fill="#504e42" stroke="#504e42" stroke-width="0.7" stroke-linejoin="round"/><polygon points="1698.5,712.8 1733.0,704.0 1733.0,738.1 1699.5,745.3" fill="#dedab6" stroke="#dedab6" stroke-width="0.7" stroke-linejoin="round"/><polygon points="1818.0,697.1 1853.9,690.7 1868.0,704.0 1833.5,712.8" fill="#f54aed" stroke="#f54aed" stroke-width="0.7" stroke-linejoin="round"/><polygon points="1818.0,697.1 1833.5,712.8 1834.5,745.3 1818.5,730.0" fill="#501b4e" stroke="#501b4e" stroke-width="0.7" stroke-linejoin="round"/><polygon points="1833.5,712.8 1868.0,704.0 1868.0,738.1 1834.5,745.3" fill="#e040d8" stroke="#e040d8" stroke-width="0.7" stroke-linejoin="round"/><polygon points="1607.0,698.1 1642.9,691.7 1657.0,705.0 1622.5,713.8" fill="#eab1dc" stroke="#eab1dc" stroke-width="0.7" stroke-linejoin="round"/><polygon points="1607.0,698.1 1622.5,713.8 1623.5,746.3 1607.5,731.0" fill="#4d3b48" stroke="#4d3b48" stroke-width="0.7" stroke-linejoin="round"/><polygon points="1622.5,713.8 1657.0,705.0 1657.0,739.1 1623.5,746.3" fill="#d6a0c8" stroke="#d6a0c8" stroke-width="0.7" stroke-linejoin="round"/><polygon points="1312.0,700.1 1347.9,693.7 1362.0,707.0 1327.5,715.9" fill="#a875b1" stroke="#a875b1" stroke-width="0.7" stroke-linejoin="round"/><polygon points="1312.0,700.1 1327.5,715.9 1328.5,748.3 1312.5,733.0" fill="#38283b" stroke="#38283b" stroke-width="0.7" stroke-linejoin="round"/><polygon points="1327.5,715.9 1362.0,707.0 1362.0,741.1 1328.5,748.3" fill="#9868a0" stroke="#9868a0" stroke-width="0.7" stroke-linejoin="round"/><polygon points="1534.0,701.1 1569.9,694.7 1584.0,708.0 1549.5,716.9" fill="#d9f1c8" stroke="#d9f1c8" stroke-width="0.7" stroke-linejoin="round"/><polygon points="1534.0,701.1 1549.5,716.9 1550.5,749.3 1534.5,734.0" fill="#484f42" stroke="#484f42" stroke-width="0.7" stroke-linejoin="round"/><polygon points="1549.5,716.9 1584.0,708.0 1584.0,742.1 1550.5,749.3" fill="#c6dcb6" stroke="#c6dcb6" stroke-width="0.7" stroke-linejoin="round"/><polygon points="1227.0,703.1 1262.9,696.6 1277.0,710.0 1242.5,718.9" fill="#fce4e8" stroke="#fce4e8" stroke-width="0.7" stroke-linejoin="round"/><polygon points="1227.0,703.1 1242.5,718.9 1243.5,751.4 1227.5,736.0" fill="#524b4c" stroke="#524b4c" stroke-width="0.7" stroke-linejoin="round"/><polygon points="1242.5,718.9 1277.0,710.0 1277.0,744.1 1243.5,751.4" fill="#e6d0d4" stroke="#e6d0d4" stroke-width="0.7" stroke-linejoin="round"/><polygon points="1916.0,709.1 1951.9,702.6 1966.0,716.0 1931.5,724.9" fill="#e6efef" stroke="#e6efef" stroke-width="0.7" stroke-linejoin="round"/><polygon points="1916.0,709.1 1931.5,724.9 1932.5,757.4 1916.5,742.0" fill="#4b4e4e" stroke="#4b4e4e" stroke-width="0.7" stroke-linejoin="round"/><polygon points="1931.5,724.9 1966.0,716.0 1966.0,750.1 1932.5,757.4" fill="#d2dada" stroke="#d2dada" stroke-width="0.7" stroke-linejoin="round"/><polygon points="2007.0,727.1 2043.0,720.5 2057.0,734.1 2022.5,743.1" fill="#d3e4ff" stroke="#d3e4ff" stroke-width="0.7" stroke-linejoin="round"/><polygon points="2007.0,727.1 2022.5,743.1 2023.5,775.4 2007.5,759.9" fill="#454a53" stroke="#454a53" stroke-width="0.7" stroke-linejoin="round"/><polygon points="2022.5,743.1 2057.0,734.1 2057.0,768.1 2023.5,775.4" fill="#c0d0ec" stroke="#c0d0ec" stroke-width="0.7" stroke-linejoin="round"/><polygon points="1163.0,734.0 1199.1,727.5 1213.0,741.1 1178.5,750.1" fill="#eab1ca" stroke="#eab1ca" stroke-width="0.7" stroke-linejoin="round"/><polygon points="1163.0,734.0 1178.5,750.1 1179.5,782.5 1163.5,766.9" fill="#4c3a42" stroke="#4c3a42" stroke-width="0.7" stroke-linejoin="round"/><polygon points="1178.5,750.1 1213.0,741.1 1213.0,775.0 1179.5,782.5" fill="#d6a0b8" stroke="#d6a0b8" stroke-width="0.7" stroke-linejoin="round"/><polygon points="1357.0,742.0 1393.1,735.5 1407.0,749.1 1372.5,758.2" fill="#b9cafe" stroke="#b9cafe" stroke-width="0.7" stroke-linejoin="round"/><polygon points="1357.0,742.0 1372.5,758.2 1373.5,790.5 1357.5,774.9" fill="#3c4251" stroke="#3c4251" stroke-width="0.7" stroke-linejoin="round"/><polygon points="1372.5,758.2 1407.0,749.1 1407.0,783.0 1373.5,790.5" fill="#a8b8e8" stroke="#a8b8e8" stroke-width="0.7" stroke-linejoin="round"/><polygon points="1748.0,746.0 1784.1,739.5 1798.0,753.1 1763.5,762.3" fill="#a6b9b9" stroke="#a6b9b9" stroke-width="0.7" stroke-linejoin="round"/><polygon points="1748.0,746.0 1763.5,762.3 1764.5,794.5 1748.5,778.9" fill="#363c3c" stroke="#363c3c" stroke-width="0.7" stroke-linejoin="round"/><polygon points="1763.5,762.3 1798.0,753.1 1798.0,787.0 1764.5,794.5" fill="#96a8a8" stroke="#96a8a8" stroke-width="0.7" stroke-linejoin="round"/><polygon points="1425.0,767.0 1461.2,760.4 1475.0,774.2 1440.5,783.4" fill="#c8c8c8" stroke="#c8c8c8" stroke-width="0.7" stroke-linejoin="round"/><polygon points="1425.0,767.0 1440.5,783.4 1441.5,815.6 1425.5,799.8" fill="#404040" stroke="#404040" stroke-width="0.7" stroke-linejoin="round"/><polygon points="1440.5,783.4 1475.0,774.2 1475.0,808.0 1441.5,815.6" fill="#b6b6b6" stroke="#b6b6b6" stroke-width="0.7" stroke-linejoin="round"/><polygon points="1663.0,771.0 1699.2,764.4 1713.0,778.2 1678.5,787.5" fill="#efffc8" stroke="#efffc8" stroke-width="0.7" stroke-linejoin="round"/><polygon points="1663.0,771.0 1678.5,787.5 1679.5,819.6 1663.5,803.8" fill="#4c5140" stroke="#4c5140" stroke-width="0.7" stroke-linejoin="round"/><polygon points="1678.5,787.5 1713.0,778.2 1713.0,812.0 1679.5,819.6" fill="#daeab6" stroke="#daeab6" stroke-width="0.7" stroke-linejoin="round"/><polygon points="1265.0,773.0 1301.3,766.4 1315.0,780.2 1280.5,789.5" fill="#c8b9c6" stroke="#c8b9c6" stroke-width="0.7" stroke-linejoin="round"/><polygon points="1265.0,773.0 1280.5,789.5 1281.5,821.6 1265.5,805.8" fill="#403c40" stroke="#403c40" stroke-width="0.7" stroke-linejoin="round"/><polygon points="1280.5,789.5 1315.0,780.2 1315.0,814.0 1281.5,821.6" fill="#b6a8b4" stroke="#b6a8b4" stroke-width="0.7" stroke-linejoin="round"/><polygon points="1495.0,774.0 1531.3,767.4 1545.0,781.2 1510.5,790.5" fill="#e1ffc8" stroke="#e1ffc8" stroke-width="0.7" stroke-linejoin="round"/><polygon points="1495.0,774.0 1510.5,790.5 1511.5,822.6 1495.5,806.8" fill="#485140" stroke="#485140" stroke-width="0.7" stroke-linejoin="round"/><polygon points="1510.5,790.5 1545.0,781.2 1545.0,815.0 1511.5,822.6" fill="#cdeab6" stroke="#cdeab6" stroke-width="0.7" stroke-linejoin="round"/><polygon points="1583.0,775.0 1619.3,768.4 1633.0,782.2 1598.5,791.5" fill="#f3caf3" stroke="#f3caf3" stroke-width="0.7" stroke-linejoin="round"/><polygon points="1583.0,775.0 1598.5,791.5 1599.5,823.6 1583.5,807.8" fill="#4d414d" stroke="#4d414d" stroke-width="0.7" stroke-linejoin="round"/><polygon points="1598.5,791.5 1633.0,782.2 1633.0,816.0 1599.5,823.6" fill="#deb8de" stroke="#deb8de" stroke-width="0.7" stroke-linejoin="round"/><polygon points="1956.0,785.0 1992.3,778.3 2006.0,792.3 1971.5,801.6" fill="#f7f7f7" stroke="#f7f7f7" stroke-width="0.7" stroke-linejoin="round"/><polygon points="1956.0,785.0 1971.5,801.6 1972.5,833.7 1956.5,817.7" fill="#4e4e4e" stroke="#4e4e4e" stroke-width="0.7" stroke-linejoin="round"/><polygon points="1971.5,801.6 2006.0,792.3 2006.0,826.0 1972.5,833.7" fill="#e2e2e2" stroke="#e2e2e2" stroke-width="0.7" stroke-linejoin="round"/><polygon points="1845.0,786.0 1881.3,779.3 1895.0,793.3 1860.5,802.6" fill="#c0f1af" stroke="#c0f1af" stroke-width="0.7" stroke-linejoin="round"/><polygon points="1845.0,786.0 1860.5,802.6 1861.5,834.7 1845.5,818.7" fill="#3d4c38" stroke="#3d4c38" stroke-width="0.7" stroke-linejoin="round"/><polygon points="1860.5,802.6 1895.0,793.3 1895.0,827.0 1861.5,834.7" fill="#aedc9e" stroke="#aedc9e" stroke-width="0.7" stroke-linejoin="round"/><polygon points="1207.0,809.9 1243.4,803.2 1257.0,817.4 1222.5,826.8" fill="#e2d9ea" stroke="#e2d9ea" stroke-width="0.7" stroke-linejoin="round"/><polygon points="1207.0,809.9 1222.5,826.8 1223.5,858.8 1207.5,842.6" fill="#474449" stroke="#474449" stroke-width="0.7" stroke-linejoin="round"/><polygon points="1222.5,826.8 1257.0,817.4 1257.0,850.9 1223.5,858.8" fill="#cec6d6" stroke="#cec6d6" stroke-width="0.7" stroke-linejoin="round"/><polygon points="1326.0,814.9 1362.5,808.2 1376.0,822.4 1341.5,831.8" fill="#dca8ed" stroke="#dca8ed" stroke-width="0.7" stroke-linejoin="round"/><polygon points="1326.0,814.9 1341.5,831.8 1342.5,863.8 1326.5,847.6" fill="#45364a" stroke="#45364a" stroke-width="0.7" stroke-linejoin="round"/><polygon points="1341.5,831.8 1376.0,822.4 1376.0,855.9 1342.5,863.8" fill="#c898d8" stroke="#c898d8" stroke-width="0.7" stroke-linejoin="round"/><polygon points="1757.0,827.9 1793.5,821.1 1807.0,835.4 1772.5,845.0" fill="#b7f5c0" stroke="#b7f5c0" stroke-width="0.7" stroke-linejoin="round"/><polygon points="1757.0,827.9 1772.5,845.0 1773.5,876.9 1757.5,860.6" fill="#3a4c3c" stroke="#3a4c3c" stroke-width="0.7" stroke-linejoin="round"/><polygon points="1772.5,845.0 1807.0,835.4 1807.0,868.9 1773.5,876.9" fill="#a6e0ae" stroke="#a6e0ae" stroke-width="0.7" stroke-linejoin="round"/><polygon points="1903.0,836.9 1939.6,830.1 1953.0,844.5 1918.5,854.0" fill="#8c8473" stroke="#8c8473" stroke-width="0.7" stroke-linejoin="round"/><polygon points="1903.0,836.9 1918.5,854.0 1919.5,885.9 1903.5,869.5" fill="#2d2a25" stroke="#2d2a25" stroke-width="0.7" stroke-linejoin="round"/><polygon points="1918.5,854.0 1953.0,844.5 1953.0,877.9 1919.5,885.9" fill="#7e7666" stroke="#7e7666" stroke-width="0.7" stroke-linejoin="round"/><polygon points="1413.0,843.9 1449.6,837.1 1463.0,851.5 1428.5,861.1" fill="#e2ede6" stroke="#e2ede6" stroke-width="0.7" stroke-linejoin="round"/><polygon points="1413.0,843.9 1428.5,861.1 1429.5,892.9 1413.5,876.5" fill="#464947" stroke="#464947" stroke-width="0.7" stroke-linejoin="round"/><polygon points="1428.5,861.1 1463.0,851.5 1463.0,884.9 1429.5,892.9" fill="#ced8d2" stroke="#ced8d2" stroke-width="0.7" stroke-linejoin="round"/><polygon points="1512.0,846.9 1548.6,840.0 1562.0,854.5 1527.5,864.1" fill="#c2d3e0" stroke="#c2d3e0" stroke-width="0.7" stroke-linejoin="round"/><polygon points="1512.0,846.9 1527.5,864.1 1528.5,895.9 1512.5,879.5" fill="#3c4145" stroke="#3c4145" stroke-width="0.7" stroke-linejoin="round"/><polygon points="1527.5,864.1 1562.0,854.5 1562.0,887.9 1528.5,895.9" fill="#b0c0cc" stroke="#b0c0cc" stroke-width="0.7" stroke-linejoin="round"/><polygon points="1593.0,851.9 1629.7,845.0 1643.0,859.5 1608.5,869.2" fill="#6a377d" stroke="#6a377d" stroke-width="0.7" stroke-linejoin="round"/><polygon points="1593.0,851.9 1608.5,869.2 1609.5,901.0 1593.5,884.5" fill="#231428" stroke="#231428" stroke-width="0.7" stroke-linejoin="round"/><polygon points="1608.5,869.2 1643.0,859.5 1643.0,892.9 1609.5,901.0" fill="#5e2e70" stroke="#5e2e70" stroke-width="0.7" stroke-linejoin="round"/><polygon points="1677.0,854.9 1713.7,848.0 1727.0,862.5 1692.5,872.2" fill="#a6c29d" stroke="#a6c29d" stroke-width="0.7" stroke-linejoin="round"/><polygon points="1677.0,854.9 1692.5,872.2 1693.5,904.0 1677.5,887.5" fill="#343c31" stroke="#343c31" stroke-width="0.7" stroke-linejoin="round"/><polygon points="1692.5,872.2 1727.0,862.5 1727.0,895.9 1693.5,904.0" fill="#96b08e" stroke="#96b08e" stroke-width="0.7" stroke-linejoin="round"/><polygon points="1260.0,863.8 1296.7,857.0 1310.0,871.6 1275.5,881.3" fill="#fcffff" stroke="#fcffff" stroke-width="0.7" stroke-linejoin="round"/><polygon points="1260.0,863.8 1275.5,881.3 1276.5,913.0 1260.5,896.4" fill="#4c4f4f" stroke="#4c4f4f" stroke-width="0.7" stroke-linejoin="round"/><polygon points="1275.5,881.3 1310.0,871.6 1310.0,904.8 1276.5,913.0" fill="#e6eeee" stroke="#e6eeee" stroke-width="0.7" stroke-linejoin="round"/><polygon points="1836.0,875.8 1872.8,868.9 1886.0,883.6 1851.5,893.4" fill="#f3eff3" stroke="#f3eff3" stroke-width="0.7" stroke-linejoin="round"/><polygon points="1836.0,875.8 1851.5,893.4 1852.5,925.1 1836.5,908.4" fill="#4a484a" stroke="#4a484a" stroke-width="0.7" stroke-linejoin="round"/><polygon points="1851.5,893.4 1886.0,883.6 1886.0,916.8 1852.5,925.1" fill="#dedade" stroke="#dedade" stroke-width="0.7" stroke-linejoin="round"/><polygon points="1335.0,898.8 1371.9,891.8 1385.0,906.7 1350.5,916.6" fill="#c8ed9d" stroke="#c8ed9d" stroke-width="0.7" stroke-linejoin="round"/><polygon points="1335.0,898.8 1350.5,916.6 1351.5,948.2 1335.5,931.3" fill="#3d4731" stroke="#3d4731" stroke-width="0.7" stroke-linejoin="round"/><polygon points="1350.5,916.6 1385.0,906.7 1385.0,939.8 1351.5,948.2" fill="#b6d88e" stroke="#b6d88e" stroke-width="0.7" stroke-linejoin="round"/><polygon points="1757.0,904.8 1793.9,897.8 1807.0,912.7 1772.5,922.6" fill="#f3f3f3" stroke="#f3f3f3" stroke-width="0.7" stroke-linejoin="round"/><polygon points="1757.0,904.8 1772.5,922.6 1773.5,954.2 1757.5,937.3" fill="#494949" stroke="#494949" stroke-width="0.7" stroke-linejoin="round"/><polygon points="1772.5,922.6 1807.0,912.7 1807.0,945.8 1773.5,954.2" fill="#dedede" stroke="#dedede" stroke-width="0.7" stroke-linejoin="round"/><polygon points="1428.0,915.8 1465.0,908.8 1478.0,923.7 1443.5,933.7" fill="#fcefc8" stroke="#fcefc8" stroke-width="0.7" stroke-linejoin="round"/><polygon points="1428.0,915.8 1443.5,933.7 1444.5,965.2 1428.5,948.3" fill="#4b473c" stroke="#4b473c" stroke-width="0.7" stroke-linejoin="round"/><polygon points="1443.5,933.7 1478.0,923.7 1478.0,956.8 1444.5,965.2" fill="#e6dab6" stroke="#e6dab6" stroke-width="0.7" stroke-linejoin="round"/><polygon points="1513.0,924.8 1550.0,917.8 1563.0,932.8 1528.5,942.8" fill="#4acfe4" stroke="#4acfe4" stroke-width="0.7" stroke-linejoin="round"/><polygon points="1513.0,924.8 1528.5,942.8 1529.5,974.2 1513.5,957.2" fill="#193e44" stroke="#193e44" stroke-width="0.7" stroke-linejoin="round"/><polygon points="1528.5,942.8 1563.0,932.8 1563.0,965.8 1529.5,974.2" fill="#40bcd0" stroke="#40bcd0" stroke-width="0.7" stroke-linejoin="round"/><polygon points="1671.0,925.8 1708.0,918.8 1721.0,933.8 1686.5,943.8" fill="#5bc0b7" stroke="#5bc0b7" stroke-width="0.7" stroke-linejoin="round"/><polygon points="1671.0,925.8 1686.5,943.8 1687.5,975.2 1671.5,958.2" fill="#1e3a37" stroke="#1e3a37" stroke-width="0.7" stroke-linejoin="round"/><polygon points="1686.5,943.8 1721.0,933.8 1721.0,966.8 1687.5,975.2" fill="#50aea6" stroke="#50aea6" stroke-width="0.7" stroke-linejoin="round"/><polygon points="1586.0,929.8 1623.0,922.8 1636.0,937.8 1601.5,947.8" fill="#37d7d7" stroke="#37d7d7" stroke-width="0.7" stroke-linejoin="round"/><polygon points="1586.0,929.8 1601.5,947.8 1602.5,979.2 1586.5,962.2" fill="#134040" stroke="#134040" stroke-width="0.7" stroke-linejoin="round"/><polygon points="1601.5,947.8 1636.0,937.8 1636.0,970.8 1602.5,979.2" fill="#2ec4c4" stroke="#2ec4c4" stroke-width="0.7" stroke-linejoin="round"/></svg>
<svg width="3840" height="2400">
<line x1="2197.4" y1="552" x2="2448.8" y2="347.7" stroke="#0e0e0e" stroke-width="2"/>
<line x1="2406.5" y1="568" x2="2447" y2="352" stroke="#3a3a3a" stroke-width="1.5"/>
<circle cx="2406.5" cy="568" r="2.5" fill="none" stroke="#333" stroke-width="1"/>
<circle cx="2448.8" cy="347.7" r="16" fill="none" stroke="#111" stroke-width="1.8" stroke-dasharray="5 5"/><circle cx="2448.8" cy="347.7" r="21" fill="none" stroke="#111" stroke-width="1.8" stroke-dasharray="6 7"/>
<rect x="2444.8" y="343.7" width="8" height="8" fill="none" stroke="#111" stroke-width="1.8" transform="rotate(45 2448.8 347.7)"/>
<line x1="2472.8" y1="347.7" x2="2493.8" y2="347.7" stroke="#111" stroke-width="2" stroke-dasharray="5 4"/><line x1="2465.8" y1="364.7" x2="2480.6" y2="379.5" stroke="#111" stroke-width="2" stroke-dasharray="5 4"/><line x1="2448.8" y1="371.7" x2="2448.8" y2="392.7" stroke="#111" stroke-width="2" stroke-dasharray="5 4"/><line x1="2431.8" y1="364.7" x2="2417.0" y2="379.5" stroke="#111" stroke-width="2" stroke-dasharray="5 4"/><line x1="2424.8" y1="347.7" x2="2403.8" y2="347.7" stroke="#111" stroke-width="2" stroke-dasharray="5 4"/><line x1="2431.8" y1="330.7" x2="2417.0" y2="315.9" stroke="#111" stroke-width="2" stroke-dasharray="5 4"/><line x1="2448.8" y1="323.7" x2="2448.8" y2="302.7" stroke="#111" stroke-width="2" stroke-dasharray="5 4"/><line x1="2465.8" y1="330.7" x2="2480.6" y2="315.9" stroke="#111" stroke-width="2" stroke-dasharray="5 4"/>
</svg>
<svg width="3840" height="2400">
<circle cx="1575" cy="572" r="20" fill="none" stroke="#ffffff" stroke-width="2"/>
<circle cx="1575" cy="572" r="20" fill="none" stroke="#e01010" stroke-width="2" stroke-dasharray="5.2 5.2"/>
<g stroke="#111" stroke-width="2"><line x1="1575" y1="538" x2="1575" y2="562"/><line x1="1575" y1="582" x2="1575" y2="606"/>
<line x1="1540" y1="581" x2="1563" y2="575"/><line x1="1587" y1="569" x2="1610" y2="563"/>
<line x1="1557" y1="556" x2="1567" y2="565"/><line x1="1583" y1="579" x2="1593" y2="588"/></g>
</svg>
<svg width="3840" height="2400">
<circle cx="3041" cy="230.5" r="12" fill="#8b3a4a"/>
<circle cx="3014.7" cy="270.8" r="12" fill="#8ad400"/>
<circle cx="3071.7" cy="314.4" r="12" fill="#2f5e9a"/>
<line x1="3071.7" y1="256.7" x2="3071.7" y2="199" stroke="#2f8cff" stroke-width="3.4"/>
<line x1="3071.7" y1="256.7" x2="3129" y2="242.8" stroke="#5a8a1e" stroke-width="3.4"/>
<line x1="3071.7" y1="256.7" x2="3102" y2="283" stroke="#ff3352" stroke-width="3.4"/>
<circle cx="3071.7" cy="199" r="15.3" fill="#2f8cff"/>
<circle cx="3129" cy="242.8" r="15.3" fill="#5e8a1e"/>
<circle cx="3102" cy="283" r="15.3" fill="#ff3352"/>
</svg>
<div class="t" style="left:2571.7px;width:1000px;top:187.4px;font-size:21px;line-height:24.1px;color:#000;text-align:center;transform:scaleX(1.0122);transform-origin:50% 50%;">Z</div>
<div class="t" style="left:2629.5px;width:1000px;top:230.9px;font-size:21px;line-height:24.1px;color:#000;text-align:center;transform:scaleX(0.8264);transform-origin:50% 50%;">Y</div>
<div class="t" style="left:2602.0px;width:1000px;top:271.4px;font-size:21px;line-height:24.1px;color:#000;text-align:center;transform:scaleX(0.9268);transform-origin:50% 50%;">X</div>
<div style="position:absolute;left:3098.0px;top:338.9px;width:55.6px;height:55.6px;border-radius:50%;background:rgba(30,30,30,0.35)"></div>
<div style="position:absolute;left:3098.0px;top:400.0px;width:55.6px;height:55.6px;border-radius:50%;background:rgba(30,30,30,0.35)"></div>
<div style="position:absolute;left:3098.0px;top:461.1px;width:55.6px;height:55.6px;border-radius:50%;background:rgba(30,30,30,0.35)"></div>
<div style="position:absolute;left:3098.0px;top:521.2px;width:55.6px;height:55.6px;border-radius:50%;background:rgba(30,30,30,0.35)"></div>
<svg width="36" height="36" style="left:3108.0px;top:349.0px"><circle cx="20" cy="14" r="9.5" fill="#e0e0e0"/><path d="M20 9 V19 M15 14 H25" stroke="#2e2e2e" stroke-width="2"/><path d="M13 21 L5 29" stroke="#e0e0e0" stroke-width="4" stroke-linecap="round"/></svg>
<svg width="36" height="36" style="left:3108.0px;top:410.0px"><path d="M9 20 L6 15 Q5 12 8 13 L12 18 V6 Q12 3 14 3 Q16 3 16 6 V14 V4 Q16 1.5 18 1.5 Q20 1.5 20 4 V14 V5 Q20 3 22 3 Q24 3 24 5.5 V15 V8 Q24 6 26 6 Q28 6 28 8 V20 Q28 31 18 31 Q12 31 9 20Z" fill="#e0e0e0"/></svg>
<svg width="36" height="36" style="left:3108.0px;top:471.0px"><circle cx="12" cy="11" r="7" fill="#e0e0e0"/><circle cx="24" cy="11" r="7" fill="#e0e0e0"/><circle cx="12" cy="11" r="2.2" fill="#3a3a3a"/><circle cx="24" cy="11" r="2.2" fill="#3a3a3a"/><rect x="9" y="18" width="16" height="11" fill="#e0e0e0"/><path d="M25 23 L32 18 V29Z" fill="#e0e0e0"/><rect x="4" y="21" width="5" height="5" fill="#e0e0e0"/></svg>
<svg width="36" height="36" style="left:3108.0px;top:531.0px"><g fill="none" stroke="#e0e0e0" stroke-width="2.2"><path d="M8 6 H28 L32 30 H4 Z"/><path d="M14 6 L12 30 M22 6 L24 30 M6 14 H30 M5 22 H31"/></g></svg>
<div class="t" style="left:20.5px;top:175.5px;font-size:23.4px;line-height:26.9px;color:#f0f0f0;transform:scaleX(0.9944);transform-origin:0 50%;text-shadow:1px 1px 2px rgba(0,0,0,0.7);">User Perspective</div>
<div class="t" style="left:20.5px;top:211.5px;font-size:23.4px;line-height:26.9px;color:#f0f0f0;transform:scaleX(1.0155);transform-origin:0 50%;text-shadow:1px 1px 2px rgba(0,0,0,0.7);">(1) Collection | Cube</div>
<div class="t" style="left:20.5px;top:247.5px;font-size:23.4px;line-height:26.9px;color:#f0f0f0;transform-origin:0 50%;text-shadow:1px 1px 2px rgba(0,0,0,0.7);">Path Tracing Sample 14/32</div>
<div style="position:absolute;left:0.0px;top:186.0px;width:16.0px;height:27.0px;background:#3d3d3d;border-radius:0px;border-radius:0 6px 6px 0;"></div>
<svg width="16" height="26" style="left:0.0px;top:186.5px"><path d="M4 6 L11 13 L4 20" fill="none" stroke="#999" stroke-width="2"/></svg>
<div style="position:absolute;left:3155.0px;top:185.0px;width:16.0px;height:37.0px;background:#3a3a3a;border-radius:0px;border-radius:6px 0 0 6px;"></div>
<svg width="16" height="26" style="left:3155.0px;top:190.0px"><path d="M12 6 L5 13 L12 20" fill="none" stroke="#999" stroke-width="2"/></svg>
<div style="position:absolute;left:3195.0px;top:60.0px;width:61.0px;height:38.0px;background:#282828;border-radius:8px;box-sizing:border-box;border:1.5px solid #3a3a3a;"></div>
<svg width="34" height="34" style="left:3200.0px;top:62.0px"><g fill="#e0e0e0"><rect x="3" y="4" width="9" height="5"/><rect x="12" y="14" width="12" height="6"/><rect x="12" y="24" width="12" height="6"/></g><path d="M6 9 V27 H12 M6 17 H12" fill="none" stroke="#e0e0e0" stroke-width="2"/></svg>
<svg width="24" height="24" style="left:3231.0px;top:68.0px"><path d="M5.5 9.075 L12 15.575 L18.5 9.075" fill="none" stroke="#e0e0e0" stroke-width="2.1" stroke-linecap="round" stroke-linejoin="round"/></svg>
<div style="position:absolute;left:3268.0px;top:60.0px;width:61.0px;height:38.0px;background:#282828;border-radius:8px;box-sizing:border-box;border:1.5px solid #3a3a3a;"></div>
<svg width="36" height="34" style="left:3272.0px;top:62.0px"><g fill="none" stroke="#e0e0e0" stroke-width="2"><rect x="12" y="5" width="17" height="15"/><path d="M8 9 V24 H25"/><path d="M4 13 V28 H21"/></g><path d="M14 18 L19 11 L22 15 L25 12 L28 18Z" fill="#e0e0e0"/><circle cx="24" cy="9" r="2" fill="#e0e0e0"/></svg>
<svg width="24" height="24" style="left:3305.0px;top:68.0px"><path d="M5.5 9.075 L12 15.575 L18.5 9.075" fill="none" stroke="#e0e0e0" stroke-width="2.1" stroke-linecap="round" stroke-linejoin="round"/></svg>
<div style="position:absolute;left:3371.0px;top:60.0px;width:231.0px;height:38.0px;background:#1d1d1d;border-radius:8px;box-sizing:border-box;border:1.5px solid #3a3a3a;"></div>
<svg width="34" height="34" style="left:3376.0px;top:63.0px"><circle cx="19" cy="14" r="8" fill="none" stroke="#e0e0e0" stroke-width="2.2"/><path d="M13 20 L5 29" stroke="#e0e0e0" stroke-width="2.4" stroke-linecap="round"/></svg>
<div style="position:absolute;left:3711.0px;top:60.0px;width:61.0px;height:38.0px;background:#282828;border-radius:8px;box-sizing:border-box;border:1.5px solid #3a3a3a;"></div>
<svg width="34" height="34" style="left:3716.0px;top:62.0px"><path d="M4 6 H28 L19 17 V30 L13 26 V17 Z" fill="none" stroke="#e0e0e0" stroke-width="2.2" stroke-linejoin="round"/></svg>
<svg width="24" height="24" style="left:3748.0px;top:68.0px"><path d="M5.5 9.075 L12 15.575 L18.5 9.075" fill="none" stroke="#e0e0e0" stroke-width="2.1" stroke-linecap="round" stroke-linejoin="round"/></svg>
<div style="position:absolute;left:3786.0px;top:60.0px;width:36.0px;height:38.0px;background:#545454;border-radius:8px;"></div>
<svg width="34" height="36" style="left:3787.0px;top:61.0px"><g fill="none" stroke="#b8b8b8" stroke-width="2"><rect x="5" y="10" width="10" height="5"/><rect x="6" y="17" width="18" height="13"/></g><circle cx="25" cy="11" r="7" fill="#545454" stroke="#e0e0e0" stroke-width="2"/><path d="M25 7 V15 M21 11 H29" stroke="#e0e0e0" stroke-width="2"/></svg>
<div style="position:absolute;left:3178.0px;top:144.9px;width:660.0px;height:40.3px;background:#2b2b2b;border-radius:0px;"></div>
<div style="position:absolute;left:3178.0px;top:225.5px;width:660.0px;height:40.3px;background:#2b2b2b;border-radius:0px;"></div>
<div style="position:absolute;left:3178.0px;top:306.1px;width:660.0px;height:40.3px;background:#2b2b2b;border-radius:0px;"></div>
<div style="position:absolute;left:3178.0px;top:386.7px;width:660.0px;height:40.3px;background:#2b2b2b;border-radius:0px;"></div>
<div style="position:absolute;left:3178px;top:440px;width:660px;height:17px;background:#282828;border-radius:0 0 10px 10px"></div>
<svg width="32" height="32" style="left:3220.5px;top:108.8px"><rect x="4" y="4" width="24" height="6" fill="#e0e0e0"/><rect x="6" y="12" width="20" height="15" fill="#e0e0e0"/><rect x="12" y="15" width="8" height="3" rx="1.5" fill="#282828"/></svg>
<div class="t" style="left:3265.0px;top:113.3px;font-size:23.4px;line-height:26.9px;color:#dddddd;transform-origin:0 50%;">Scene Collection</div>
<svg width="20" height="20" style="left:3226.0px;top:156.0px"><path d="M4.75 5.8 L15.25 5.8 L10 15.25Z" fill="#c8c8c8"/></svg>
<div style="position:absolute;left:3258.0px;top:147.0px;width:39.0px;height:36.0px;background:#545454;border-radius:8px;box-sizing:border-box;border:1.5px solid #666;"></div>
<svg width="32" height="32" style="left:3261.5px;top:149.0px"><rect x="4" y="4" width="24" height="6" fill="#e0e0e0"/><rect x="6" y="12" width="20" height="15" fill="#e0e0e0"/><rect x="12" y="15" width="8" height="3" rx="1.5" fill="#282828"/></svg>
<div class="t" style="left:3305.7px;top:153.6px;font-size:23.4px;line-height:26.9px;color:#dddddd;transform:scaleX(1.0167);transform-origin:0 50%;">Collection</div>
<svg width="22" height="22" style="left:3752.0px;top:154.0px"><rect x="0" y="0" width="22" height="22" rx="3" fill="#e6e6e6"/><path d="M5 11 L9.5 15.5 L17 7" fill="none" stroke="#282828" stroke-width="3"/></svg>
<svg width="32" height="24" style="left:3788.0px;top:153.0px"><path d="M3 12 Q16 -2 29 12 Q16 26 3 12Z" fill="#e0e0e0"/><circle cx="16" cy="12" r="5.5" fill="#282828"/><circle cx="16" cy="12" r="2.6" fill="#e0e0e0"/></svg>
<div style="position:absolute;left:3234.8px;top:191.3px;width:1.5px;height:265.6px;background:#5a5a5a;border-radius:0px;"></div>
<svg width="20" height="20" style="left:3267.0px;top:196.3px"><path d="M5.8 4.75 L15.25 10 L5.8 15.25Z" fill="#c8c8c8"/></svg>
<div style="position:absolute;left:3298.0px;top:187.3px;width:39.0px;height:36.0px;background:#545454;border-radius:8px;box-sizing:border-box;border:1.5px solid #666;"></div>
<svg width="32" height="32" style="left:3301.0px;top:189.3px"><path d="M5 6 H27 L16 28 Z" fill="none" stroke="#d08a4c" stroke-width="4.2" stroke-linejoin="round"/></svg>
<svg width="32" height="32" style="left:3443.0px;top:189.3px"><g fill="none" stroke="#19c79b" stroke-width="2.2"><path d="M6 6 H26 L16 26 Z"/><rect x="2.5" y="2.5" width="6.5" height="6.5" fill="#282828"/><rect x="23" y="2.5" width="6.5" height="6.5" fill="#282828"/><rect x="12.75" y="23.5" width="6.5" height="6.5" fill="#282828"/></g></svg>
<div class="t" style="left:3345.4px;top:193.9px;font-size:23.4px;line-height:26.9px;color:#dddddd;transform:scaleX(0.9749);transform-origin:0 50%;">Cube</div>
<svg width="32" height="24" style="left:3788.0px;top:193.3px"><path d="M3 12 Q16 -2 29 12 Q16 26 3 12Z" fill="#e0e0e0"/><circle cx="16" cy="12" r="5.5" fill="#282828"/><circle cx="16" cy="12" r="2.6" fill="#e0e0e0"/></svg>
<svg width="20" height="20" style="left:3267.0px;top:236.7px"><path d="M5.8 4.75 L15.25 10 L5.8 15.25Z" fill="#c8c8c8"/></svg>
<svg width="32" height="32" style="left:3301.0px;top:229.7px"><path d="M5 6 H27 L16 28 Z" fill="none" stroke="#d08a4c" stroke-width="4.2" stroke-linejoin="round"/></svg>
<svg width="32" height="32" style="left:3492.0px;top:229.7px"><g fill="none" stroke="#19c79b" stroke-width="2.2"><path d="M6 6 H26 L16 26 Z"/><rect x="2.5" y="2.5" width="6.5" height="6.5" fill="#282828"/><rect x="23" y="2.5" width="6.5" height="6.5" fill="#282828"/><rect x="12.75" y="23.5" width="6.5" height="6.5" fill="#282828"/></g></svg>
<div class="t" style="left:3345.4px;top:234.2px;font-size:23.4px;line-height:26.9px;color:#dddddd;transform-origin:0 50%;">Cube.001</div>
<svg width="32" height="24" style="left:3788.0px;top:233.7px"><path d="M3 12 Q16 -2 29 12 Q16 26 3 12Z" fill="#e0e0e0"/><circle cx="16" cy="12" r="5.5" fill="#282828"/><circle cx="16" cy="12" r="2.6" fill="#e0e0e0"/></svg>
<svg width="20" height="20" style="left:3267.0px;top:276.9px"><path d="M5.8 4.75 L15.25 10 L5.8 15.25Z" fill="#c8c8c8"/></svg>
<svg width="32" height="32" style="left:3301.0px;top:269.9px"><path d="M5 6 H27 L16 28 Z" fill="none" stroke="#d08a4c" stroke-width="4.2" stroke-linejoin="round"/></svg>
<svg width="32" height="32" style="left:3492.0px;top:269.9px"><g fill="none" stroke="#19c79b" stroke-width="2.2"><path d="M6 6 H26 L16 26 Z"/><rect x="2.5" y="2.5" width="6.5" height="6.5" fill="#282828"/><rect x="23" y="2.5" width="6.5" height="6.5" fill="#282828"/><rect x="12.75" y="23.5" width="6.5" height="6.5" fill="#282828"/></g></svg>
<div class="t" style="left:3345.4px;top:274.5px;font-size:23.4px;line-height:26.9px;color:#dddddd;transform-origin:0 50%;">Cube.002</div>
<svg width="32" height="24" style="left:3788.0px;top:273.9px"><path d="M3 12 Q16 -2 29 12 Q16 26 3 12Z" fill="#e0e0e0"/><circle cx="16" cy="12" r="5.5" fill="#282828"/><circle cx="16" cy="12" r="2.6" fill="#e0e0e0"/></svg>
<svg width="20" height="20" style="left:3267.0px;top:317.2px"><path d="M5.8 4.75 L15.25 10 L5.8 15.25Z" fill="#c8c8c8"/></svg>
<svg width="32" height="32" style="left:3301.0px;top:310.2px"><path d="M5 6 H27 L16 28 Z" fill="none" stroke="#d08a4c" stroke-width="4.2" stroke-linejoin="round"/></svg>
<svg width="32" height="32" style="left:3492.0px;top:310.2px"><g fill="none" stroke="#19c79b" stroke-width="2.2"><path d="M6 6 H26 L16 26 Z"/><rect x="2.5" y="2.5" width="6.5" height="6.5" fill="#282828"/><rect x="23" y="2.5" width="6.5" height="6.5" fill="#282828"/><rect x="12.75" y="23.5" width="6.5" height="6.5" fill="#282828"/></g></svg>
<div class="t" style="left:3345.4px;top:314.8px;font-size:23.4px;line-height:26.9px;color:#dddddd;transform-origin:0 50%;">Cube.003</div>
<svg width="32" height="24" style="left:3788.0px;top:314.2px"><path d="M3 12 Q16 -2 29 12 Q16 26 3 12Z" fill="#e0e0e0"/><circle cx="16" cy="12" r="5.5" fill="#282828"/><circle cx="16" cy="12" r="2.6" fill="#e0e0e0"/></svg>
<svg width="20" height="20" style="left:3267.0px;top:357.5px"><path d="M5.8 4.75 L15.25 10 L5.8 15.25Z" fill="#c8c8c8"/></svg>
<svg width="32" height="32" style="left:3301.0px;top:350.5px"><path d="M5 6 H27 L16 28 Z" fill="none" stroke="#d08a4c" stroke-width="4.2" stroke-linejoin="round"/></svg>
<svg width="32" height="32" style="left:3492.0px;top:350.5px"><g fill="none" stroke="#19c79b" stroke-width="2.2"><path d="M6 6 H26 L16 26 Z"/><rect x="2.5" y="2.5" width="6.5" height="6.5" fill="#282828"/><rect x="23" y="2.5" width="6.5" height="6.5" fill="#282828"/><rect x="12.75" y="23.5" width="6.5" height="6.5" fill="#282828"/></g></svg>
<div class="t" style="left:3345.4px;top:355.1px;font-size:23.4px;line-height:26.9px;color:#dddddd;transform-origin:0 50%;">Cube.004</div>
<svg width="32" height="24" style="left:3788.0px;top:354.5px"><path d="M3 12 Q16 -2 29 12 Q16 26 3 12Z" fill="#e0e0e0"/><circle cx="16" cy="12" r="5.5" fill="#282828"/><circle cx="16" cy="12" r="2.6" fill="#e0e0e0"/></svg>
<svg width="20" height="20" style="left:3267.0px;top:397.8px"><path d="M5.8 4.75 L15.25 10 L5.8 15.25Z" fill="#c8c8c8"/></svg>
<svg width="32" height="32" style="left:3301.0px;top:390.8px"><path d="M5 6 H27 L16 28 Z" fill="none" stroke="#d08a4c" stroke-width="4.2" stroke-linejoin="round"/></svg>
<svg width="32" height="32" style="left:3492.0px;top:390.8px"><g fill="none" stroke="#19c79b" stroke-width="2.2"><path d="M6 6 H26 L16 26 Z"/><rect x="2.5" y="2.5" width="6.5" height="6.5" fill="#282828"/><rect x="23" y="2.5" width="6.5" height="6.5" fill="#282828"/><rect x="12.75" y="23.5" width="6.5" height="6.5" fill="#282828"/></g></svg>
<div class="t" style="left:3345.4px;top:395.4px;font-size:23.4px;line-height:26.9px;color:#dddddd;transform-origin:0 50%;">Cube.005</div>
<svg width="32" height="24" style="left:3788.0px;top:394.8px"><path d="M3 12 Q16 -2 29 12 Q16 26 3 12Z" fill="#e0e0e0"/><circle cx="16" cy="12" r="5.5" fill="#282828"/><circle cx="16" cy="12" r="2.6" fill="#e0e0e0"/></svg>
<svg width="20" height="20" style="left:3267.0px;top:438.1px"><path d="M5.8 4.75 L15.25 10 L5.8 15.25Z" fill="#c8c8c8"/></svg>
<svg width="32" height="32" style="left:3301.0px;top:431.1px"><path d="M5 6 H27 L16 28 Z" fill="none" stroke="#d08a4c" stroke-width="4.2" stroke-linejoin="round"/></svg>
<svg width="32" height="32" style="left:3492.0px;top:431.1px"><g fill="none" stroke="#19c79b" stroke-width="2.2"><path d="M6 6 H26 L16 26 Z"/><rect x="2.5" y="2.5" width="6.5" height="6.5" fill="#282828"/><rect x="23" y="2.5" width="6.5" height="6.5" fill="#282828"/><rect x="12.75" y="23.5" width="6.5" height="6.5" fill="#282828"/></g></svg>
<div class="t" style="left:3345.4px;top:435.7px;font-size:23.4px;line-height:26.9px;color:#dddddd;transform-origin:0 50%;">Cube.006</div>
<svg width="32" height="24" style="left:3788.0px;top:435.1px"><path d="M3 12 Q16 -2 29 12 Q16 26 3 12Z" fill="#e0e0e0"/><circle cx="16" cy="12" r="5.5" fill="#282828"/><circle cx="16" cy="12" r="2.6" fill="#e0e0e0"/></svg>
<div style="position:absolute;left:3194.0px;top:470.0px;width:62.0px;height:38.0px;background:#282828;border-radius:8px;box-sizing:border-box;border:1.5px solid #3a3a3a;"></div>
<svg width="36" height="34" style="left:3199.0px;top:472.0px"><g fill="none" stroke="#e0e0e0" stroke-width="2.2"><rect x="4" y="4" width="24" height="11" rx="5.5"/><rect x="4" y="19" width="24" height="11" rx="5.5"/></g><path d="M9.5 4 H16 V15 H9.5 A5.5 5.5 0 0 1 9.5 4Z M9.5 19 H16 V30 H9.5 A5.5 5.5 0 0 1 9.5 19Z" fill="#e0e0e0"/></svg>
<svg width="24" height="24" style="left:3231.0px;top:478.0px"><path d="M5.5 9.075 L12 15.575 L18.5 9.075" fill="none" stroke="#e0e0e0" stroke-width="2.1" stroke-linecap="round" stroke-linejoin="round"/></svg>
<div style="position:absolute;left:3396.0px;top:470.0px;width:231.0px;height:38.0px;background:#1d1d1d;border-radius:8px;box-sizing:border-box;border:1.5px solid #3a3a3a;"></div>
<svg width="34" height="34" style="left:3400.0px;top:473.0px"><circle cx="19" cy="14" r="8" fill="none" stroke="#e0e0e0" stroke-width="2.2"/><path d="M13 20 L5 29" stroke="#e0e0e0" stroke-width="2.4" stroke-linecap="round"/></svg>
<div style="position:absolute;left:3182.0px;top:533.0px;width:52.0px;height:51.5px;background:#2b2b2b;border-radius:0px;border-radius:8px 0 0 8px;"></div>
<div style="position:absolute;left:3182.0px;top:605.0px;width:52.0px;height:51.5px;background:#2b2b2b;border-radius:0px;border-radius:8px 0 0 8px;"></div>
<div style="position:absolute;left:3182.0px;top:661.0px;width:52.0px;height:51.5px;background:#2b2b2b;border-radius:0px;border-radius:8px 0 0 8px;"></div>
<div style="position:absolute;left:3182.0px;top:717.0px;width:52.0px;height:51.5px;background:#2b2b2b;border-radius:0px;border-radius:8px 0 0 8px;"></div>
<div style="position:absolute;left:3182.0px;top:773.0px;width:52.0px;height:51.5px;background:#2b2b2b;border-radius:0px;border-radius:8px 0 0 8px;"></div>
<div style="position:absolute;left:3182.0px;top:829.0px;width:52.0px;height:51.5px;background:#2b2b2b;border-radius:0px;border-radius:8px 0 0 8px;"></div>
<div style="position:absolute;left:3182.0px;top:901.0px;width:52.0px;height:51.5px;background:#2b2b2b;border-radius:0px;border-radius:8px 0 0 8px;"></div>
<div style="position:absolute;left:3182.0px;top:957.0px;width:52.0px;height:51.5px;background:#2b2b2b;border-radius:0px;border-radius:8px 0 0 8px;"></div>
<div style="position:absolute;left:3182.0px;top:1013.0px;width:52.0px;height:51.5px;background:#2b2b2b;border-radius:0px;border-radius:8px 0 0 8px;"></div>
<div style="position:absolute;left:3182.0px;top:1069.0px;width:52.0px;height:51.5px;background:#2b2b2b;border-radius:0px;border-radius:8px 0 0 8px;"></div>
<div style="position:absolute;left:3182.0px;top:1125.0px;width:52.0px;height:51.5px;background:#2b2b2b;border-radius:0px;border-radius:8px 0 0 8px;"></div>
<div style="position:absolute;left:3182.0px;top:1181.0px;width:52.0px;height:51.5px;background:#424242;border-radius:0px;border-radius:8px 0 0 8px;"></div>
<div style="position:absolute;left:3182.0px;top:1237.0px;width:52.0px;height:51.5px;background:#2b2b2b;border-radius:0px;border-radius:8px 0 0 8px;"></div>
<div style="position:absolute;left:3182.0px;top:1309.0px;width:52.0px;height:51.5px;background:#2b2b2b;border-radius:0px;border-radius:8px 0 0 8px;"></div>
<svg width="34" height="34" style="left:3192.0px;top:542.0px"><g fill="#c8c8c8"><rect x="6" y="3" width="3" height="12"/><ellipse cx="7.5" cy="24" rx="5" ry="6"/><path d="M19 4 A6 6 0 0 0 21 15 V29 A2.5 2.5 0 0 0 26 29 V15 A6 6 0 0 0 28 4 V9 H19Z"/></g></svg>
<svg width="34" height="34" style="left:3192.0px;top:614.0px"><rect x="3" y="9" width="27" height="21" rx="2.5" fill="#c8c8c8"/><path d="M9 9 V5 H16 V9Z" fill="#c8c8c8"/><rect x="22" y="4" width="4" height="2" fill="#c8c8c8"/><g stroke="#2b2b2b" stroke-width="2"><path d="M7 15 H19 M7 19 H19 M7 23 H19"/></g><rect x="6" y="12" width="15" height="14" fill="none" stroke="#2b2b2b" stroke-width="1.5"/><circle cx="25" cy="15" r="1.8" fill="#2b2b2b"/><circle cx="25" cy="22" r="1.8" fill="#2b2b2b"/></svg>
<svg width="34" height="34" style="left:3192.0px;top:670.0px"><path d="M6 4 H28 A3 3 0 0 1 31 7 V15 H27 V11 H7 V15 H3 V7 A3 3 0 0 1 6 4Z" fill="#c8c8c8"/><rect x="9" y="11" width="16" height="19" fill="#9a9a9a"/><path d="M11 28 L16 20 L21 28Z" fill="#2b2b2b"/><circle cx="21" cy="16" r="2.2" fill="#2b2b2b"/></svg>
<svg width="34" height="34" style="left:3192.0px;top:726.0px"><g fill="none" stroke="#c8c8c8" stroke-width="2.2"><rect x="11" y="4" width="18" height="16"/><path d="M7 8 V24 H25"/><path d="M3 12 V28 H21"/></g><path d="M13 18 L18 10 L22 14 L25 11 L28 18Z" fill="#c8c8c8"/><circle cx="24" cy="8" r="2" fill="#c8c8c8"/></svg>
<svg width="34" height="34" style="left:3192.0px;top:782.0px"><path d="M11 4 L4 20 A6 6 0 0 0 16 22 Z" fill="#c8c8c8"/><circle cx="25" cy="7" r="3.5" fill="#c8c8c8"/><circle cx="22" cy="23" r="7" fill="none" stroke="#c8c8c8" stroke-width="2.4"/><circle cx="22" cy="23" r="1.6" fill="#c8c8c8"/></svg>
<svg width="34" height="34" style="left:3192.0px;top:838.0px"><circle cx="16" cy="17" r="11.5" fill="none" stroke="#d06a72" stroke-width="2.4"/><path d="M7 11 Q12 8 15 12 Q13 16 17 19 Q20 23 15 27 Q8 23 7 17Z M19 8 Q25 10 26 15 Q22 17 19 13Z" fill="#d06a72"/><path d="M2 31 L6.5 26.5 M25.5 7.5 L30 3" stroke="#d06a72" stroke-width="2.4"/></svg>
<svg width="34" height="34" style="left:3192.0px;top:910.0px"><g fill="none" stroke="#d4874c" stroke-width="2.4"><path d="M4 10 V4 H10 M22 4 H28 V10 M28 22 V28 H22 M10 28 H4 V22"/></g><rect x="9" y="9" width="14" height="14" fill="#d4874c"/></svg>
<svg width="34" height="34" style="left:3192.0px;top:966.0px"><path d="M26 3 A7 7 0 0 0 17 12 L4 25 A3 3 0 0 0 8 29 L21 16 A7 7 0 0 0 30 7 L25 11 L22 8Z" fill="#6a9be0"/></svg>
<svg width="34" height="34" style="left:3192.0px;top:1022.0px"><g stroke="#6a9be0" stroke-width="2.4"><path d="M8 7 V27 M8 7 L25 25 M8 7 H25"/></g><g fill="#6a9be0"><circle cx="8" cy="7" r="4.5"/><circle cx="25" cy="7" r="3.5"/><circle cx="8" cy="27" r="3.5"/><circle cx="25" cy="25" r="4"/></g></svg>
<svg width="34" height="34" style="left:3192.0px;top:1078.0px"><circle cx="14" cy="18" r="10" fill="none" stroke="#6a9be0" stroke-width="2.4" stroke-dasharray="50 14" transform="rotate(-30 14 18)"/><circle cx="14" cy="18" r="5.5" fill="#6a9be0"/><circle cx="25" cy="7" r="3.5" fill="#6a9be0"/></svg>
<svg width="34" height="34" style="left:3192.0px;top:1134.0px"><path d="M6 26 A9 9 0 0 1 10 12 L23 3 A5 5 0 0 1 28 9 L20 23 A9 9 0 0 1 6 26Z" fill="none" stroke="#6a9be0" stroke-width="2.4"/><circle cx="13" cy="20" r="6" fill="#6a9be0"/><circle cx="13" cy="20" r="2.2" fill="#2b2b2b"/><circle cx="24" cy="8" r="2" fill="#6a9be0"/></svg>
<svg width="34" height="34" style="left:3192.0px;top:1190.0px"><g fill="none" stroke="#19d7a5" stroke-width="2.4"><path d="M8 6 H25 L16 25 Z"/><rect x="3" y="2.5" width="7" height="7" fill="#424242"/><rect x="22" y="2.5" width="7" height="7" fill="#424242"/><rect x="12.5" y="23" width="7" height="7" fill="#424242"/></g></svg>
<svg width="34" height="34" style="left:3192.0px;top:1246.0px"><circle cx="16" cy="17" r="12.5" fill="none" stroke="#c96470" stroke-width="2.2"/><path d="M15.5 5.5 V18 Q9 17.5 4.5 15 A11.5 11.5 0 0 1 15.5 5.5Z" fill="#c96470"/><path d="M16.5 28.5 V19 Q23 18.5 27.5 16 A11.5 11.5 0 0 1 16.5 28.5Z" fill="#c96470"/></svg>
<svg width="34" height="34" style="left:3192.0px;top:1318.0px"><rect x="4.0" y="4.0" width="6.5" height="6.5" fill="#d06a72"/><rect x="10.5" y="4.0" width="6.5" height="6.5" fill="#222"/><rect x="17.0" y="4.0" width="6.5" height="6.5" fill="#d06a72"/><rect x="23.5" y="4.0" width="6.5" height="6.5" fill="#222"/><rect x="4.0" y="10.5" width="6.5" height="6.5" fill="#222"/><rect x="10.5" y="10.5" width="6.5" height="6.5" fill="#d06a72"/><rect x="17.0" y="10.5" width="6.5" height="6.5" fill="#222"/><rect x="23.5" y="10.5" width="6.5" height="6.5" fill="#d06a72"/><rect x="4.0" y="17.0" width="6.5" height="6.5" fill="#d06a72"/><rect x="10.5" y="17.0" width="6.5" height="6.5" fill="#222"/><rect x="17.0" y="17.0" width="6.5" height="6.5" fill="#d06a72"/><rect x="23.5" y="17.0" width="6.5" height="6.5" fill="#222"/><rect x="4.0" y="23.5" width="6.5" height="6.5" fill="#222"/><rect x="10.5" y="23.5" width="6.5" height="6.5" fill="#d06a72"/><rect x="17.0" y="23.5" width="6.5" height="6.5" fill="#222"/><rect x="23.5" y="23.5" width="6.5" height="6.5" fill="#d06a72"/></svg>
<svg width="34" height="34" style="left:3253.0px;top:534.0px"><g fill="none" stroke="#b0b0b0" stroke-width="2"><path d="M4 10 V4 H10 M24 4 H30 V10 M30 24 V30 H24 M10 30 H4 V24"/></g><rect x="9" y="9" width="16" height="16" fill="#e0e0e0"/></svg>
<div class="t" style="left:3300.4px;top:537.5px;font-size:23.4px;line-height:26.9px;color:#e0e0e0;transform:scaleX(0.9749);transform-origin:0 50%;">Cube</div>
<svg width="16" height="18" style="left:3382.0px;top:542.0px"><path d="M5 3 L12 9 L5 15Z" fill="#5e5e5e"/></svg>
<svg width="34" height="34" style="left:3417.0px;top:534.0px"><g fill="none" stroke="#e0e0e0" stroke-width="2.2"><path d="M8 7 H26 L17 27 Z"/><rect x="3.5" y="3.5" width="7" height="7" fill="#424242"/><rect x="23" y="3.5" width="7" height="7" fill="#424242"/><rect x="13.5" y="24" width="7" height="7" fill="#424242"/></g></svg>
<div class="t" style="left:3464.8px;top:537.5px;font-size:23.4px;line-height:26.9px;color:#e0e0e0;transform:scaleX(0.9749);transform-origin:0 50%;">Cube</div>
<svg width="40" height="40" style="left:3785.0px;top:532.0px"><g fill="none" stroke="#8a8a8a" stroke-width="2.2" stroke-linejoin="round"><path d="M22 6 L34 18 L30 19 L24 25 L24 30 L10 16 L15 16 L21 10Z"/><path d="M16 24 L5 35"/></g></svg>
<div style="position:absolute;left:3252.0px;top:605.0px;width:570.0px;height:36.0px;background:#1d1d1d;border-radius:8px;"></div>
<div style="position:absolute;left:3252.0px;top:605.0px;width:60.0px;height:36.0px;background:#282828;border-radius:0px;border-radius:8px 0 0 8px;"></div>
<div style="position:absolute;left:3783.0px;top:605.0px;width:39.0px;height:36.0px;background:#545454;border-radius:0px;border-radius:0 8px 8px 0;"></div>
<svg width="36" height="34" style="left:3256.0px;top:606.0px"><g fill="none" stroke="#e0e0e0" stroke-width="2.2"><path d="M8 7 H26 L17 27 Z"/><rect x="3.5" y="3.5" width="7" height="7" fill="#282828"/><rect x="23" y="3.5" width="7" height="7" fill="#282828"/><rect x="13.5" y="24" width="7" height="7" fill="#282828"/></g></svg>
<svg width="24" height="24" style="left:3287.0px;top:613.0px"><path d="M5.5 9.075 L12 15.575 L18.5 9.075" fill="none" stroke="#e0e0e0" stroke-width="2.1" stroke-linecap="round" stroke-linejoin="round"/></svg>
<div class="t" style="left:3327.4px;top:609.5px;font-size:23.4px;line-height:26.9px;color:#e0e0e0;transform:scaleX(0.9749);transform-origin:0 50%;">Cube</div>
<svg width="28" height="30" style="left:3788.5px;top:608.0px"><path d="M14 4 Q20 7 25 7 V15 Q25 24 14 28 Q3 24 3 15 V7 Q8 7 14 4Z" fill="none" stroke="#8a8a8a" stroke-width="2.2"/></svg>
<div style="position:absolute;left:3234.0px;top:658.5px;width:604.0px;height:48.2px;background:#424242;border-radius:0px;"></div>
<svg width="20" height="20" style="left:3248.0px;top:673.6px"><path d="M4.0 5.2 L16.0 5.2 L10 16.0Z" fill="#b4b4b4"/></svg>
<div class="t" style="left:3278.5px;top:668.9px;font-size:25.5px;line-height:29.3px;color:#e0e0e0;transform:scaleX(1.0022);transform-origin:0 50%;">Vertex Groups</div>
<svg width="30" height="16" style="left:3800.0px;top:675.6px"><rect x="3" y="3" width="2.6" height="2.6" fill="#909090"/><rect x="2" y="2" width="2.6" height="2.6" fill="#141414"/><rect x="9" y="3" width="2.6" height="2.6" fill="#909090"/><rect x="8" y="2" width="2.6" height="2.6" fill="#141414"/><rect x="15" y="3" width="2.6" height="2.6" fill="#909090"/><rect x="14" y="2" width="2.6" height="2.6" fill="#141414"/><rect x="21" y="3" width="2.6" height="2.6" fill="#909090"/><rect x="20" y="2" width="2.6" height="2.6" fill="#141414"/><rect x="3" y="9" width="2.6" height="2.6" fill="#909090"/><rect x="2" y="8" width="2.6" height="2.6" fill="#141414"/><rect x="9" y="9" width="2.6" height="2.6" fill="#909090"/><rect x="8" y="8" width="2.6" height="2.6" fill="#141414"/><rect x="15" y="9" width="2.6" height="2.6" fill="#909090"/><rect x="14" y="8" width="2.6" height="2.6" fill="#141414"/><rect x="21" y="9" width="2.6" height="2.6" fill="#909090"/><rect x="20" y="8" width="2.6" height="2.6" fill="#141414"/></svg>
<div style="position:absolute;left:3234.0px;top:706.7px;width:604.0px;height:190.7px;background:#3d3d3d;border-radius:0px;"></div>
<div style="position:absolute;left:3251.5px;top:724.4px;width:515.2px;height:157.1px;background:#2b2b2b;border-radius:10px;box-sizing:border-box;border:1.5px solid #484848;"></div>
<svg width="20" height="20" style="left:3269.8px;top:852.5px"><path d="M5.8 4.75 L15.25 10 L5.8 15.25Z" fill="#9a9a9a"/></svg>
<svg width="30" height="14" style="left:3515.0px;top:856.5px"><rect x="2" y="2" width="2.6" height="2.6" fill="#e0e0e0"/><rect x="8" y="2" width="2.6" height="2.6" fill="#e0e0e0"/><rect x="14" y="2" width="2.6" height="2.6" fill="#e0e0e0"/><rect x="20" y="2" width="2.6" height="2.6" fill="#e0e0e0"/><rect x="2" y="8" width="2.6" height="2.6" fill="#e0e0e0"/><rect x="8" y="8" width="2.6" height="2.6" fill="#e0e0e0"/><rect x="14" y="8" width="2.6" height="2.6" fill="#e0e0e0"/><rect x="20" y="8" width="2.6" height="2.6" fill="#e0e0e0"/></svg>
<div style="position:absolute;left:3786.0px;top:726.4px;width:35.5px;height:74.0px;background:#545454;border-radius:8px;"></div>
<div style="position:absolute;left:3786.0px;top:760.4px;width:35.5px;height:1.5px;background:#454545;border-radius:0px;"></div>
<svg width="32" height="32" style="left:3788.0px;top:728.4px"><path d="M16 7 V25 M7 16 H25" stroke="#e0e0e0" stroke-width="2.4"/></svg>
<svg width="32" height="32" style="left:3788.0px;top:764.4px"><path d="M8 16 H24" stroke="#777" stroke-width="2.4"/></svg>
<div style="position:absolute;left:3784.0px;top:815.4px;width:39.0px;height:40.0px;background:#282828;border-radius:8px;box-sizing:border-box;border:1.5px solid #4a4a4a;"></div>
<svg width="24" height="24" style="left:3791.5px;top:824.4px"><path d="M4 8.4 L12 16.4 L20 8.4" fill="none" stroke="#e0e0e0" stroke-width="2.1" stroke-linecap="round" stroke-linejoin="round"/></svg>
<div style="position:absolute;left:3234.0px;top:899.0px;width:604.0px;height:47.7px;background:#424242;border-radius:0px;"></div>
<svg width="20" height="20" style="left:3248.0px;top:913.9px"><path d="M4.0 5.2 L16.0 5.2 L10 16.0Z" fill="#b4b4b4"/></svg>
<div class="t" style="left:3278.5px;top:909.2px;font-size:25.5px;line-height:29.3px;color:#e0e0e0;transform:scaleX(0.9680);transform-origin:0 50%;">Shape Keys</div>
<svg width="30" height="16" style="left:3800.0px;top:915.9px"><rect x="3" y="3" width="2.6" height="2.6" fill="#909090"/><rect x="2" y="2" width="2.6" height="2.6" fill="#141414"/><rect x="9" y="3" width="2.6" height="2.6" fill="#909090"/><rect x="8" y="2" width="2.6" height="2.6" fill="#141414"/><rect x="15" y="3" width="2.6" height="2.6" fill="#909090"/><rect x="14" y="2" width="2.6" height="2.6" fill="#141414"/><rect x="21" y="3" width="2.6" height="2.6" fill="#909090"/><rect x="20" y="2" width="2.6" height="2.6" fill="#141414"/><rect x="3" y="9" width="2.6" height="2.6" fill="#909090"/><rect x="2" y="8" width="2.6" height="2.6" fill="#141414"/><rect x="9" y="9" width="2.6" height="2.6" fill="#909090"/><rect x="8" y="8" width="2.6" height="2.6" fill="#141414"/><rect x="15" y="9" width="2.6" height="2.6" fill="#909090"/><rect x="14" y="8" width="2.6" height="2.6" fill="#141414"/><rect x="21" y="9" width="2.6" height="2.6" fill="#909090"/><rect x="20" y="8" width="2.6" height="2.6" fill="#141414"/></svg>
<div style="position:absolute;left:3234.0px;top:946.7px;width:604.0px;height:191.1px;background:#3d3d3d;border-radius:0px;"></div>
<div style="position:absolute;left:3251.5px;top:964.0px;width:515.2px;height:157.5px;background:#2b2b2b;border-radius:10px;box-sizing:border-box;border:1.5px solid #484848;"></div>
<svg width="20" height="20" style="left:3269.8px;top:1092.5px"><path d="M5.8 4.75 L15.25 10 L5.8 15.25Z" fill="#9a9a9a"/></svg>
<svg width="30" height="14" style="left:3515.0px;top:1096.5px"><rect x="2" y="2" width="2.6" height="2.6" fill="#e0e0e0"/><rect x="8" y="2" width="2.6" height="2.6" fill="#e0e0e0"/><rect x="14" y="2" width="2.6" height="2.6" fill="#e0e0e0"/><rect x="20" y="2" width="2.6" height="2.6" fill="#e0e0e0"/><rect x="2" y="8" width="2.6" height="2.6" fill="#e0e0e0"/><rect x="8" y="8" width="2.6" height="2.6" fill="#e0e0e0"/><rect x="14" y="8" width="2.6" height="2.6" fill="#e0e0e0"/><rect x="20" y="8" width="2.6" height="2.6" fill="#e0e0e0"/></svg>
<div style="position:absolute;left:3786.0px;top:966.0px;width:35.5px;height:74.0px;background:#545454;border-radius:8px;"></div>
<div style="position:absolute;left:3786.0px;top:1000.0px;width:35.5px;height:1.5px;background:#454545;border-radius:0px;"></div>
<svg width="32" height="32" style="left:3788.0px;top:968.0px"><path d="M16 7 V25 M7 16 H25" stroke="#e0e0e0" stroke-width="2.4"/></svg>
<svg width="32" height="32" style="left:3788.0px;top:1004.0px"><path d="M8 16 H24" stroke="#777" stroke-width="2.4"/></svg>
<div style="position:absolute;left:3784.0px;top:1055.0px;width:39.0px;height:40.0px;background:#282828;border-radius:8px;box-sizing:border-box;border:1.5px solid #4a4a4a;"></div>
<svg width="24" height="24" style="left:3791.5px;top:1064.0px"><path d="M4 8.4 L12 16.4 L20 8.4" fill="none" stroke="#e0e0e0" stroke-width="2.1" stroke-linecap="round" stroke-linejoin="round"/></svg>
<div style="position:absolute;left:3234.0px;top:1139.3px;width:604.0px;height:48.0px;background:#424242;border-radius:0px;"></div>
<svg width="20" height="20" style="left:3248.0px;top:1154.3px"><path d="M5.2 4.0 L16.0 10 L5.2 16.0Z" fill="#b4b4b4"/></svg>
<div class="t" style="left:3278.5px;top:1149.6px;font-size:25.5px;line-height:29.3px;color:#e0e0e0;transform:scaleX(0.9580);transform-origin:0 50%;">UV Maps</div>
<svg width="30" height="16" style="left:3800.0px;top:1156.3px"><rect x="3" y="3" width="2.6" height="2.6" fill="#909090"/><rect x="2" y="2" width="2.6" height="2.6" fill="#141414"/><rect x="9" y="3" width="2.6" height="2.6" fill="#909090"/><rect x="8" y="2" width="2.6" height="2.6" fill="#141414"/><rect x="15" y="3" width="2.6" height="2.6" fill="#909090"/><rect x="14" y="2" width="2.6" height="2.6" fill="#141414"/><rect x="21" y="3" width="2.6" height="2.6" fill="#909090"/><rect x="20" y="2" width="2.6" height="2.6" fill="#141414"/><rect x="3" y="9" width="2.6" height="2.6" fill="#909090"/><rect x="2" y="8" width="2.6" height="2.6" fill="#141414"/><rect x="9" y="9" width="2.6" height="2.6" fill="#909090"/><rect x="8" y="8" width="2.6" height="2.6" fill="#141414"/><rect x="15" y="9" width="2.6" height="2.6" fill="#909090"/><rect x="14" y="8" width="2.6" height="2.6" fill="#141414"/><rect x="21" y="9" width="2.6" height="2.6" fill="#909090"/><rect x="20" y="8" width="2.6" height="2.6" fill="#141414"/></svg>
<div style="position:absolute;left:3234.0px;top:1187.4px;width:604.0px;height:48.0px;background:#424242;border-radius:0px;"></div>
<svg width="20" height="20" style="left:3248.0px;top:1202.4px"><path d="M5.2 4.0 L16.0 10 L5.2 16.0Z" fill="#b4b4b4"/></svg>
<div class="t" style="left:3278.5px;top:1197.7px;font-size:25.5px;line-height:29.3px;color:#e0e0e0;transform:scaleX(1.0021);transform-origin:0 50%;">Vertex Colors</div>
<svg width="30" height="16" style="left:3800.0px;top:1204.4px"><rect x="3" y="3" width="2.6" height="2.6" fill="#909090"/><rect x="2" y="2" width="2.6" height="2.6" fill="#141414"/><rect x="9" y="3" width="2.6" height="2.6" fill="#909090"/><rect x="8" y="2" width="2.6" height="2.6" fill="#141414"/><rect x="15" y="3" width="2.6" height="2.6" fill="#909090"/><rect x="14" y="2" width="2.6" height="2.6" fill="#141414"/><rect x="21" y="3" width="2.6" height="2.6" fill="#909090"/><rect x="20" y="2" width="2.6" height="2.6" fill="#141414"/><rect x="3" y="9" width="2.6" height="2.6" fill="#909090"/><rect x="2" y="8" width="2.6" height="2.6" fill="#141414"/><rect x="9" y="9" width="2.6" height="2.6" fill="#909090"/><rect x="8" y="8" width="2.6" height="2.6" fill="#141414"/><rect x="15" y="9" width="2.6" height="2.6" fill="#909090"/><rect x="14" y="8" width="2.6" height="2.6" fill="#141414"/><rect x="21" y="9" width="2.6" height="2.6" fill="#909090"/><rect x="20" y="8" width="2.6" height="2.6" fill="#141414"/></svg>
<div style="position:absolute;left:3234.0px;top:1235.5px;width:604.0px;height:48.0px;background:#424242;border-radius:0px;"></div>
<svg width="20" height="20" style="left:3248.0px;top:1250.5px"><path d="M5.2 4.0 L16.0 10 L5.2 16.0Z" fill="#b4b4b4"/></svg>
<div class="t" style="left:3278.5px;top:1245.8px;font-size:25.5px;line-height:29.3px;color:#e0e0e0;transform:scaleX(0.9508);transform-origin:0 50%;">Face Maps</div>
<svg width="30" height="16" style="left:3800.0px;top:1252.5px"><rect x="3" y="3" width="2.6" height="2.6" fill="#909090"/><rect x="2" y="2" width="2.6" height="2.6" fill="#141414"/><rect x="9" y="3" width="2.6" height="2.6" fill="#909090"/><rect x="8" y="2" width="2.6" height="2.6" fill="#141414"/><rect x="15" y="3" width="2.6" height="2.6" fill="#909090"/><rect x="14" y="2" width="2.6" height="2.6" fill="#141414"/><rect x="21" y="3" width="2.6" height="2.6" fill="#909090"/><rect x="20" y="2" width="2.6" height="2.6" fill="#141414"/><rect x="3" y="9" width="2.6" height="2.6" fill="#909090"/><rect x="2" y="8" width="2.6" height="2.6" fill="#141414"/><rect x="9" y="9" width="2.6" height="2.6" fill="#909090"/><rect x="8" y="8" width="2.6" height="2.6" fill="#141414"/><rect x="15" y="9" width="2.6" height="2.6" fill="#909090"/><rect x="14" y="8" width="2.6" height="2.6" fill="#141414"/><rect x="21" y="9" width="2.6" height="2.6" fill="#909090"/><rect x="20" y="8" width="2.6" height="2.6" fill="#141414"/></svg>
<div style="position:absolute;left:3234.0px;top:1283.5px;width:604.0px;height:48.0px;background:#424242;border-radius:0px;"></div>
<svg width="20" height="20" style="left:3248.0px;top:1298.5px"><path d="M5.2 4.0 L16.0 10 L5.2 16.0Z" fill="#b4b4b4"/></svg>
<div class="t" style="left:3278.5px;top:1293.9px;font-size:25.5px;line-height:29.3px;color:#e0e0e0;transform:scaleX(1.0036);transform-origin:0 50%;">Normals</div>
<svg width="30" height="16" style="left:3800.0px;top:1300.5px"><rect x="3" y="3" width="2.6" height="2.6" fill="#909090"/><rect x="2" y="2" width="2.6" height="2.6" fill="#141414"/><rect x="9" y="3" width="2.6" height="2.6" fill="#909090"/><rect x="8" y="2" width="2.6" height="2.6" fill="#141414"/><rect x="15" y="3" width="2.6" height="2.6" fill="#909090"/><rect x="14" y="2" width="2.6" height="2.6" fill="#141414"/><rect x="21" y="3" width="2.6" height="2.6" fill="#909090"/><rect x="20" y="2" width="2.6" height="2.6" fill="#141414"/><rect x="3" y="9" width="2.6" height="2.6" fill="#909090"/><rect x="2" y="8" width="2.6" height="2.6" fill="#141414"/><rect x="9" y="9" width="2.6" height="2.6" fill="#909090"/><rect x="8" y="8" width="2.6" height="2.6" fill="#141414"/><rect x="15" y="9" width="2.6" height="2.6" fill="#909090"/><rect x="14" y="8" width="2.6" height="2.6" fill="#141414"/><rect x="21" y="9" width="2.6" height="2.6" fill="#909090"/><rect x="20" y="8" width="2.6" height="2.6" fill="#141414"/></svg>
<div style="position:absolute;left:3234.0px;top:1331.6px;width:604.0px;height:48.0px;background:#424242;border-radius:0px;"></div>
<svg width="20" height="20" style="left:3248.0px;top:1346.6px"><path d="M5.2 4.0 L16.0 10 L5.2 16.0Z" fill="#b4b4b4"/></svg>
<div class="t" style="left:3278.5px;top:1342.0px;font-size:25.5px;line-height:29.3px;color:#e0e0e0;transform:scaleX(0.9921);transform-origin:0 50%;">Texture Space</div>
<svg width="30" height="16" style="left:3800.0px;top:1348.6px"><rect x="3" y="3" width="2.6" height="2.6" fill="#909090"/><rect x="2" y="2" width="2.6" height="2.6" fill="#141414"/><rect x="9" y="3" width="2.6" height="2.6" fill="#909090"/><rect x="8" y="2" width="2.6" height="2.6" fill="#141414"/><rect x="15" y="3" width="2.6" height="2.6" fill="#909090"/><rect x="14" y="2" width="2.6" height="2.6" fill="#141414"/><rect x="21" y="3" width="2.6" height="2.6" fill="#909090"/><rect x="20" y="2" width="2.6" height="2.6" fill="#141414"/><rect x="3" y="9" width="2.6" height="2.6" fill="#909090"/><rect x="2" y="8" width="2.6" height="2.6" fill="#141414"/><rect x="9" y="9" width="2.6" height="2.6" fill="#909090"/><rect x="8" y="8" width="2.6" height="2.6" fill="#141414"/><rect x="15" y="9" width="2.6" height="2.6" fill="#909090"/><rect x="14" y="8" width="2.6" height="2.6" fill="#141414"/><rect x="21" y="9" width="2.6" height="2.6" fill="#909090"/><rect x="20" y="8" width="2.6" height="2.6" fill="#141414"/></svg>
<div style="position:absolute;left:3234.0px;top:1379.7px;width:604.0px;height:48.0px;background:#424242;border-radius:0px;"></div>
<svg width="20" height="20" style="left:3248.0px;top:1394.7px"><path d="M5.2 4.0 L16.0 10 L5.2 16.0Z" fill="#b4b4b4"/></svg>
<div class="t" style="left:3278.5px;top:1390.0px;font-size:25.5px;line-height:29.3px;color:#e0e0e0;transform:scaleX(0.9718);transform-origin:0 50%;">Remesh</div>
<svg width="30" height="16" style="left:3800.0px;top:1396.7px"><rect x="3" y="3" width="2.6" height="2.6" fill="#909090"/><rect x="2" y="2" width="2.6" height="2.6" fill="#141414"/><rect x="9" y="3" width="2.6" height="2.6" fill="#909090"/><rect x="8" y="2" width="2.6" height="2.6" fill="#141414"/><rect x="15" y="3" width="2.6" height="2.6" fill="#909090"/><rect x="14" y="2" width="2.6" height="2.6" fill="#141414"/><rect x="21" y="3" width="2.6" height="2.6" fill="#909090"/><rect x="20" y="2" width="2.6" height="2.6" fill="#141414"/><rect x="3" y="9" width="2.6" height="2.6" fill="#909090"/><rect x="2" y="8" width="2.6" height="2.6" fill="#141414"/><rect x="9" y="9" width="2.6" height="2.6" fill="#909090"/><rect x="8" y="8" width="2.6" height="2.6" fill="#141414"/><rect x="15" y="9" width="2.6" height="2.6" fill="#909090"/><rect x="14" y="8" width="2.6" height="2.6" fill="#141414"/><rect x="21" y="9" width="2.6" height="2.6" fill="#909090"/><rect x="20" y="8" width="2.6" height="2.6" fill="#141414"/></svg>
<div style="position:absolute;left:3234.0px;top:1427.8px;width:604.0px;height:48.0px;background:#424242;border-radius:0px;"></div>
<svg width="20" height="20" style="left:3248.0px;top:1442.8px"><path d="M5.2 4.0 L16.0 10 L5.2 16.0Z" fill="#b4b4b4"/></svg>
<div class="t" style="left:3278.5px;top:1438.1px;font-size:25.5px;line-height:29.3px;color:#e0e0e0;transform:scaleX(1.0239);transform-origin:0 50%;">Geometry Data</div>
<svg width="30" height="16" style="left:3800.0px;top:1444.8px"><rect x="3" y="3" width="2.6" height="2.6" fill="#909090"/><rect x="2" y="2" width="2.6" height="2.6" fill="#141414"/><rect x="9" y="3" width="2.6" height="2.6" fill="#909090"/><rect x="8" y="2" width="2.6" height="2.6" fill="#141414"/><rect x="15" y="3" width="2.6" height="2.6" fill="#909090"/><rect x="14" y="2" width="2.6" height="2.6" fill="#141414"/><rect x="21" y="3" width="2.6" height="2.6" fill="#909090"/><rect x="20" y="2" width="2.6" height="2.6" fill="#141414"/><rect x="3" y="9" width="2.6" height="2.6" fill="#909090"/><rect x="2" y="8" width="2.6" height="2.6" fill="#141414"/><rect x="9" y="9" width="2.6" height="2.6" fill="#909090"/><rect x="8" y="8" width="2.6" height="2.6" fill="#141414"/><rect x="15" y="9" width="2.6" height="2.6" fill="#909090"/><rect x="14" y="8" width="2.6" height="2.6" fill="#141414"/><rect x="21" y="9" width="2.6" height="2.6" fill="#909090"/><rect x="20" y="8" width="2.6" height="2.6" fill="#141414"/></svg>
<div style="position:absolute;left:3234.0px;top:1475.9px;width:604.0px;height:48.0px;background:#424242;border-radius:0px;"></div>
<svg width="20" height="20" style="left:3248.0px;top:1490.9px"><path d="M5.2 4.0 L16.0 10 L5.2 16.0Z" fill="#b4b4b4"/></svg>
<div class="t" style="left:3278.5px;top:1486.2px;font-size:25.5px;line-height:29.3px;color:#e0e0e0;transform:scaleX(1.0076);transform-origin:0 50%;">Tessellate Settings</div>
<svg width="30" height="16" style="left:3800.0px;top:1492.9px"><rect x="3" y="3" width="2.6" height="2.6" fill="#909090"/><rect x="2" y="2" width="2.6" height="2.6" fill="#141414"/><rect x="9" y="3" width="2.6" height="2.6" fill="#909090"/><rect x="8" y="2" width="2.6" height="2.6" fill="#141414"/><rect x="15" y="3" width="2.6" height="2.6" fill="#909090"/><rect x="14" y="2" width="2.6" height="2.6" fill="#141414"/><rect x="21" y="3" width="2.6" height="2.6" fill="#909090"/><rect x="20" y="2" width="2.6" height="2.6" fill="#141414"/><rect x="3" y="9" width="2.6" height="2.6" fill="#909090"/><rect x="2" y="8" width="2.6" height="2.6" fill="#141414"/><rect x="9" y="9" width="2.6" height="2.6" fill="#909090"/><rect x="8" y="8" width="2.6" height="2.6" fill="#141414"/><rect x="15" y="9" width="2.6" height="2.6" fill="#909090"/><rect x="14" y="8" width="2.6" height="2.6" fill="#141414"/><rect x="21" y="9" width="2.6" height="2.6" fill="#909090"/><rect x="20" y="8" width="2.6" height="2.6" fill="#141414"/></svg>
<div style="position:absolute;left:3234.0px;top:1523.9px;width:604.0px;height:48.0px;background:#424242;border-radius:0px;"></div>
<svg width="20" height="20" style="left:3248.0px;top:1538.9px"><path d="M5.2 4.0 L16.0 10 L5.2 16.0Z" fill="#b4b4b4"/></svg>
<div class="t" style="left:3278.5px;top:1534.3px;font-size:25.5px;line-height:29.3px;color:#e0e0e0;transform:scaleX(1.0030);transform-origin:0 50%;">Custom Properties</div>
<svg width="30" height="16" style="left:3800.0px;top:1540.9px"><rect x="3" y="3" width="2.6" height="2.6" fill="#909090"/><rect x="2" y="2" width="2.6" height="2.6" fill="#141414"/><rect x="9" y="3" width="2.6" height="2.6" fill="#909090"/><rect x="8" y="2" width="2.6" height="2.6" fill="#141414"/><rect x="15" y="3" width="2.6" height="2.6" fill="#909090"/><rect x="14" y="2" width="2.6" height="2.6" fill="#141414"/><rect x="21" y="3" width="2.6" height="2.6" fill="#909090"/><rect x="20" y="2" width="2.6" height="2.6" fill="#141414"/><rect x="3" y="9" width="2.6" height="2.6" fill="#909090"/><rect x="2" y="8" width="2.6" height="2.6" fill="#141414"/><rect x="9" y="9" width="2.6" height="2.6" fill="#909090"/><rect x="8" y="8" width="2.6" height="2.6" fill="#141414"/><rect x="15" y="9" width="2.6" height="2.6" fill="#909090"/><rect x="14" y="8" width="2.6" height="2.6" fill="#141414"/><rect x="21" y="9" width="2.6" height="2.6" fill="#909090"/><rect x="20" y="8" width="2.6" height="2.6" fill="#141414"/></svg>
<svg width="3840" height="2400"><line x1="440" y1="1649.8" x2="2026.2" y2="1357.6" stroke="rgba(0,0,0,0.35)" stroke-width="6.5" stroke-linecap="round"/><line x1="440" y1="1649.8" x2="2026.2" y2="1357.6" stroke="#8c8c8c" stroke-width="4.3" stroke-linecap="round"/><line x1="440" y1="1649.8" x2="2026.2" y2="1387" stroke="rgba(0,0,0,0.35)" stroke-width="6.5" stroke-linecap="round"/><line x1="440" y1="1649.8" x2="2026.2" y2="1387" stroke="#8c8c8c" stroke-width="4.3" stroke-linecap="round"/><line x1="440" y1="1649.8" x2="2026.2" y2="1416.3" stroke="rgba(0,0,0,0.35)" stroke-width="6.5" stroke-linecap="round"/><line x1="440" y1="1649.8" x2="2026.2" y2="1416.3" stroke="#8c8c8c" stroke-width="4.3" stroke-linecap="round"/><line x1="440" y1="1649.8" x2="2021.4" y2="1640.4" stroke="rgba(0,0,0,0.35)" stroke-width="6.5" stroke-linecap="round"/><line x1="440" y1="1649.8" x2="2021.4" y2="1640.4" stroke="#8c8c8c" stroke-width="4.3" stroke-linecap="round"/><line x1="440" y1="1649.8" x2="930.8" y2="1908" stroke="rgba(0,0,0,0.35)" stroke-width="6.5" stroke-linecap="round"/><line x1="440" y1="1649.8" x2="930.8" y2="1908" stroke="#8c8c8c" stroke-width="4.3" stroke-linecap="round"/><line x1="1116.8" y1="1834.4" x2="2021.4" y2="1670" stroke="rgba(0,0,0,0.35)" stroke-width="6.5" stroke-linecap="round"/><line x1="1116.8" y1="1834.4" x2="2021.4" y2="1670" stroke="#8c8c8c" stroke-width="4.3" stroke-linecap="round"/><line x1="1116.8" y1="1834.4" x2="1341" y2="1983" stroke="rgba(0,0,0,0.35)" stroke-width="6.5" stroke-linecap="round"/><line x1="1116.8" y1="1834.4" x2="1341" y2="1983" stroke="#8c8c8c" stroke-width="4.3" stroke-linecap="round"/><line x1="1527" y1="1909.4" x2="2021.4" y2="1699.6" stroke="rgba(0,0,0,0.35)" stroke-width="6.5" stroke-linecap="round"/><line x1="1527" y1="1909.4" x2="2021.4" y2="1699.6" stroke="#8c8c8c" stroke-width="4.3" stroke-linecap="round"/><line x1="2221" y1="1607.3" x2="2361" y2="1427.7" stroke="rgba(0,0,0,0.35)" stroke-width="6.5" stroke-linecap="round"/><line x1="2221" y1="1607.3" x2="2361" y2="1427.7" stroke="#8c8c8c" stroke-width="4.3" stroke-linecap="round"/><defs><linearGradient id="lg" x1="0" y1="0" x2="1" y2="0"><stop offset="0" stop-color="#9a9a9a"/><stop offset="1" stop-color="#f0f0f0"/></linearGradient></defs><line x1="2680.3" y1="1321.1" x2="2801" y2="1367.9" stroke="rgba(0,0,0,0.35)" stroke-width="6.5"/><path d="M2680.3 1318.9 L2801 1365.7 L2801 1370.1 L2680.3 1323.3Z" fill="url(#lg)"/></svg>
<div style="position:absolute;left:253.3px;top:1486.0px;width:186.7px;height:184.0px;background:#3f3f3f;border-radius:6px;box-shadow:0 2px 10px 2px rgba(0,0,0,0.45);"></div>
<div style="position:absolute;left:253.3px;top:1486.0px;width:186.7px;height:27.0px;background:#a3333e;border-radius:0px;border-radius:6px 6px 0 0;"></div>
<svg width="20" height="20" style="left:260.5px;top:1490.0px"><path d="M5.5 6.4 L14.5 6.4 L10 14.5Z" fill="rgba(255,255,255,0.55)"/></svg>
<div class="t" style="left:284.3px;top:1490.5px;font-size:16.6px;line-height:19.1px;color:#e6e6e6;transform:scaleX(1.0205);transform-origin:0 50%;text-shadow:1px 1px 1.5px rgba(0,0,0,0.75);">Object Info</div>
<div class="t" style="right:3424.5px;top:1523.5px;font-size:16.6px;line-height:19.1px;color:#e6e6e6;text-align:right;transform:scaleX(1.0098);transform-origin:100% 50%;text-shadow:1px 1px 1.5px rgba(0,0,0,0.75);">Location</div>
<div class="t" style="right:3424.5px;top:1552.5px;font-size:16.6px;line-height:19.1px;color:#e6e6e6;text-align:right;transform:scaleX(0.9862);transform-origin:100% 50%;text-shadow:1px 1px 1.5px rgba(0,0,0,0.75);">Color</div>
<div class="t" style="right:3424.5px;top:1581.8px;font-size:16.6px;line-height:19.1px;color:#e6e6e6;text-align:right;transform:scaleX(1.0173);transform-origin:100% 50%;text-shadow:1px 1px 1.5px rgba(0,0,0,0.75);">Object Index</div>
<div class="t" style="right:3424.5px;top:1611.1px;font-size:16.6px;line-height:19.1px;color:#e6e6e6;text-align:right;transform:scaleX(1.0251);transform-origin:100% 50%;text-shadow:1px 1px 1.5px rgba(0,0,0,0.75);">Material Index</div>
<div class="t" style="right:3424.5px;top:1640.3px;font-size:16.6px;line-height:19.1px;color:#e6e6e6;text-align:right;transform:scaleX(0.9886);transform-origin:100% 50%;text-shadow:1px 1px 1.5px rgba(0,0,0,0.75);">Random</div>
<div style="position:absolute;left:2026.2px;top:1278.0px;width:199.5px;height:216.6px;background:#3f3f3f;border-radius:6px;box-shadow:0 2px 10px 2px rgba(0,0,0,0.45);"></div>
<div style="position:absolute;left:2026.2px;top:1278.0px;width:199.5px;height:26.0px;background:#8c7a31;border-radius:0px;border-radius:6px 6px 0 0;"></div>
<svg width="20" height="20" style="left:2032.9px;top:1281.0px"><path d="M5.5 6.4 L14.5 6.4 L10 14.5Z" fill="rgba(255,255,255,0.55)"/></svg>
<div class="t" style="left:2057.5px;top:1281.5px;font-size:16.6px;line-height:19.1px;color:#e6e6e6;transform:scaleX(1.0139);transform-origin:0 50%;text-shadow:1px 1px 1.5px rgba(0,0,0,0.75);">Hue Saturation Value</div>
<div class="t" style="right:1637.6px;top:1314.8px;font-size:16.6px;line-height:19.1px;color:#e6e6e6;text-align:right;transform:scaleX(0.9862);transform-origin:100% 50%;text-shadow:1px 1px 1.5px rgba(0,0,0,0.75);">Color</div>
<div class="t" style="left:2045.6px;top:1348.1px;font-size:16.6px;line-height:19.1px;color:#e6e6e6;transform:scaleX(0.9846);transform-origin:0 50%;text-shadow:1px 1px 1.5px rgba(0,0,0,0.75);">Hue</div>
<div class="t" style="left:2045.6px;top:1377.5px;font-size:16.6px;line-height:19.1px;color:#e6e6e6;transform:scaleX(1.0321);transform-origin:0 50%;text-shadow:1px 1px 1.5px rgba(0,0,0,0.75);">Saturation</div>
<div class="t" style="left:2045.6px;top:1406.8px;font-size:16.6px;line-height:19.1px;color:#e6e6e6;transform-origin:0 50%;text-shadow:1px 1px 1.5px rgba(0,0,0,0.75);">Value</div>
<div style="position:absolute;left:2042.0px;top:1434.7px;width:169.0px;height:22.0px;background:#545454;border-radius:4px;"></div>
<div style="position:absolute;left:2042.0px;top:1434.7px;width:169.0px;height:22.0px;background:#5680c2;border-radius:4px;"></div>
<div class="t" style="left:2054.8px;top:1436.2px;font-size:16.6px;line-height:19.1px;color:#e6e6e6;transform:scaleX(0.8913);transform-origin:0 50%;text-shadow:1px 1px 1.5px rgba(0,0,0,0.75);">Fac</div>
<div class="t" style="right:1640.8px;top:1436.2px;font-size:16.6px;line-height:19.1px;color:#e6e6e6;text-align:right;transform:scaleX(1.0326);transform-origin:100% 50%;text-shadow:1px 1px 1.5px rgba(0,0,0,0.75);">1.000</div>
<div class="t" style="left:2045.6px;top:1465.5px;font-size:16.6px;line-height:19.1px;color:#e6e6e6;transform:scaleX(0.9862);transform-origin:0 50%;text-shadow:1px 1px 1.5px rgba(0,0,0,0.75);">Color</div>
<div style="position:absolute;left:2134.0px;top:1464.0px;width:77.0px;height:22.0px;background:#e00000;border-radius:5px;"></div>
<div style="position:absolute;left:2021.4px;top:1561.2px;width:199.5px;height:216.6px;background:#3f3f3f;border-radius:6px;box-shadow:0 2px 10px 2px rgba(0,0,0,0.45);"></div>
<div style="position:absolute;left:2021.4px;top:1561.2px;width:199.5px;height:26.0px;background:#8c7a31;border-radius:0px;border-radius:6px 6px 0 0;"></div>
<svg width="20" height="20" style="left:2028.1px;top:1564.2px"><path d="M5.5 6.4 L14.5 6.4 L10 14.5Z" fill="rgba(255,255,255,0.55)"/></svg>
<div class="t" style="left:2052.7px;top:1564.7px;font-size:16.6px;line-height:19.1px;color:#e6e6e6;transform:scaleX(1.0139);transform-origin:0 50%;text-shadow:1px 1px 1.5px rgba(0,0,0,0.75);">Hue Saturation Value</div>
<div class="t" style="right:1642.4px;top:1598.0px;font-size:16.6px;line-height:19.1px;color:#e6e6e6;text-align:right;transform:scaleX(0.9862);transform-origin:100% 50%;text-shadow:1px 1px 1.5px rgba(0,0,0,0.75);">Color</div>
<div class="t" style="left:2040.8px;top:1631.3px;font-size:16.6px;line-height:19.1px;color:#e6e6e6;transform:scaleX(0.9846);transform-origin:0 50%;text-shadow:1px 1px 1.5px rgba(0,0,0,0.75);">Hue</div>
<div class="t" style="left:2040.8px;top:1660.7px;font-size:16.6px;line-height:19.1px;color:#e6e6e6;transform:scaleX(1.0321);transform-origin:0 50%;text-shadow:1px 1px 1.5px rgba(0,0,0,0.75);">Saturation</div>
<div class="t" style="left:2040.8px;top:1690.0px;font-size:16.6px;line-height:19.1px;color:#e6e6e6;transform-origin:0 50%;text-shadow:1px 1px 1.5px rgba(0,0,0,0.75);">Value</div>
<div style="position:absolute;left:2037.2px;top:1717.9px;width:169.0px;height:22.0px;background:#545454;border-radius:4px;"></div>
<div style="position:absolute;left:2037.2px;top:1717.9px;width:169.0px;height:22.0px;background:#5680c2;border-radius:4px;"></div>
<div class="t" style="left:2050.0px;top:1719.4px;font-size:16.6px;line-height:19.1px;color:#e6e6e6;transform:scaleX(0.8913);transform-origin:0 50%;text-shadow:1px 1px 1.5px rgba(0,0,0,0.75);">Fac</div>
<div class="t" style="right:1645.6px;top:1719.4px;font-size:16.6px;line-height:19.1px;color:#e6e6e6;text-align:right;transform:scaleX(1.0326);transform-origin:100% 50%;text-shadow:1px 1px 1.5px rgba(0,0,0,0.75);">1.000</div>
<div class="t" style="left:2040.8px;top:1748.7px;font-size:16.6px;line-height:19.1px;color:#e6e6e6;transform:scaleX(0.9862);transform-origin:0 50%;text-shadow:1px 1px 1.5px rgba(0,0,0,0.75);">Color</div>
<div style="position:absolute;left:2129.2px;top:1747.2px;width:77.0px;height:22.0px;background:#e00000;border-radius:5px;"></div>
<div style="position:absolute;left:930.8px;top:1788.0px;width:186.0px;height:139.0px;background:#3f3f3f;border-radius:6px;box-shadow:0 2px 10px 2px rgba(0,0,0,0.45);"></div>
<div style="position:absolute;left:930.8px;top:1788.0px;width:186.0px;height:25.7px;background:#3b5a29;border-radius:0px;border-radius:6px 6px 0 0;"></div>
<svg width="20" height="20" style="left:937.7px;top:1791.5px"><path d="M5.5 6.4 L14.5 6.4 L10 14.5Z" fill="rgba(255,255,255,0.55)"/></svg>
<div class="t" style="left:961.4px;top:1792.0px;font-size:16.6px;line-height:19.1px;color:#e6e6e6;transform:scaleX(0.9891);transform-origin:0 50%;text-shadow:1px 1px 1.5px rgba(0,0,0,0.75);">New Random</div>
<svg width="26" height="24" style="left:1085.0px;top:1790.0px"><rect x="4" y="3" width="11" height="7.5" rx="3.5" fill="#e0e0e0"/><rect x="2" y="13" width="11" height="7.5" rx="3.5" fill="#e0e0e0"/><path d="M18 5 H21 V17 H16" fill="none" stroke="#e0e0e0" stroke-width="1.6"/><path d="M15 14.5 L15 19.5 L12.5 17Z" fill="#e0e0e0"/></svg>
<div class="t" style="right:2747.2px;top:1824.9px;font-size:16.6px;line-height:19.1px;color:#e6e6e6;text-align:right;transform:scaleX(0.9891);transform-origin:100% 50%;text-shadow:1px 1px 1.5px rgba(0,0,0,0.75);">New Random</div>
<div style="position:absolute;left:945.8px;top:1863.0px;width:156.0px;height:22.5px;background:#282828;border-radius:6px;"></div>
<div style="position:absolute;left:986.7px;top:1863.0px;width:57.3px;height:22.5px;background:#1d1d1d;border-radius:0px;"></div>
<div style="position:absolute;left:1045.9px;top:1863.0px;width:30.0px;height:22.5px;background:#545454;border-radius:0px;"></div>
<div style="position:absolute;left:1077.8px;top:1863.0px;width:24.0px;height:22.5px;background:#545454;border-radius:0px;border-radius:0 6px 6px 0;"></div>
<svg width="20" height="20" style="left:949.0px;top:1864.0px"><circle cx="10" cy="10" r="8" fill="none" stroke="#e0e0e0" stroke-width="1.5"/><path d="M10 2.5 V11 Q5.5 10.7 2.8 8.8 A7.5 7.5 0 0 1 10 2.5Z" fill="#e0e0e0"/><path d="M10 17.5 V11.6 Q14.5 11.3 17.3 9.4 A7.5 7.5 0 0 1 10 17.5Z" fill="#e0e0e0"/></svg>
<svg width="24" height="24" style="left:965.0px;top:1863.0px"><path d="M8.5 10.425 L12 13.925 L15.5 10.425" fill="none" stroke="#e0e0e0" stroke-width="2.1" stroke-linecap="round" stroke-linejoin="round"/></svg>
<div class="t" style="left:995.0px;top:1864.5px;font-size:16.6px;line-height:19.1px;color:#e6e6e6;transform:scaleX(0.9841);transform-origin:0 50%;text-shadow:1px 1px 1.5px rgba(0,0,0,0.75);">New</div>
<div class="t" style="left:560.5px;width:1000px;top:1864.5px;font-size:16.6px;line-height:19.1px;color:#e6e6e6;text-align:center;transform:scaleX(1.0326);transform-origin:50% 50%;text-shadow:1px 1px 1.5px rgba(0,0,0,0.75);">2</div>
<svg width="22" height="21" style="left:1079.0px;top:1864.0px"><path d="M11 2 Q15 4.5 19 4.5 V10 Q19 16.5 11 19.5 Q3 16.5 3 10 V4.5 Q7 4.5 11 2Z" fill="none" stroke="#8a8a8a" stroke-width="1.6"/></svg>
<div class="t" style="left:949.0px;top:1898.5px;font-size:16.6px;line-height:19.1px;color:#e6e6e6;transform:scaleX(0.9886);transform-origin:0 50%;text-shadow:1px 1px 1.5px rgba(0,0,0,0.75);">Random</div>
<div style="position:absolute;left:1341.0px;top:1863.0px;width:186.0px;height:139.0px;background:#3f3f3f;border-radius:6px;box-shadow:0 2px 10px 2px rgba(0,0,0,0.45);"></div>
<div style="position:absolute;left:1341.0px;top:1863.0px;width:186.0px;height:25.7px;background:#3b5a29;border-radius:0px;border-radius:6px 6px 0 0;"></div>
<svg width="20" height="20" style="left:1347.9px;top:1866.5px"><path d="M5.5 6.4 L14.5 6.4 L10 14.5Z" fill="rgba(255,255,255,0.55)"/></svg>
<div class="t" style="left:1371.6px;top:1867.0px;font-size:16.6px;line-height:19.1px;color:#e6e6e6;transform:scaleX(0.9891);transform-origin:0 50%;text-shadow:1px 1px 1.5px rgba(0,0,0,0.75);">New Random</div>
<svg width="26" height="24" style="left:1495.2px;top:1865.0px"><rect x="4" y="3" width="11" height="7.5" rx="3.5" fill="#e0e0e0"/><rect x="2" y="13" width="11" height="7.5" rx="3.5" fill="#e0e0e0"/><path d="M18 5 H21 V17 H16" fill="none" stroke="#e0e0e0" stroke-width="1.6"/><path d="M15 14.5 L15 19.5 L12.5 17Z" fill="#e0e0e0"/></svg>
<div class="t" style="right:2337.0px;top:1899.9px;font-size:16.6px;line-height:19.1px;color:#e6e6e6;text-align:right;transform:scaleX(0.9891);transform-origin:100% 50%;text-shadow:1px 1px 1.5px rgba(0,0,0,0.75);">New Random</div>
<div style="position:absolute;left:1356.0px;top:1938.0px;width:156.0px;height:22.5px;background:#282828;border-radius:6px;"></div>
<div style="position:absolute;left:1396.9px;top:1938.0px;width:57.3px;height:22.5px;background:#1d1d1d;border-radius:0px;"></div>
<div style="position:absolute;left:1456.1px;top:1938.0px;width:30.0px;height:22.5px;background:#545454;border-radius:0px;"></div>
<div style="position:absolute;left:1488.0px;top:1938.0px;width:24.0px;height:22.5px;background:#545454;border-radius:0px;border-radius:0 6px 6px 0;"></div>
<svg width="20" height="20" style="left:1359.2px;top:1939.0px"><circle cx="10" cy="10" r="8" fill="none" stroke="#e0e0e0" stroke-width="1.5"/><path d="M10 2.5 V11 Q5.5 10.7 2.8 8.8 A7.5 7.5 0 0 1 10 2.5Z" fill="#e0e0e0"/><path d="M10 17.5 V11.6 Q14.5 11.3 17.3 9.4 A7.5 7.5 0 0 1 10 17.5Z" fill="#e0e0e0"/></svg>
<svg width="24" height="24" style="left:1375.2px;top:1938.0px"><path d="M8.5 10.425 L12 13.925 L15.5 10.425" fill="none" stroke="#e0e0e0" stroke-width="2.1" stroke-linecap="round" stroke-linejoin="round"/></svg>
<div class="t" style="left:1405.2px;top:1939.5px;font-size:16.6px;line-height:19.1px;color:#e6e6e6;transform:scaleX(0.9841);transform-origin:0 50%;text-shadow:1px 1px 1.5px rgba(0,0,0,0.75);">New</div>
<div class="t" style="left:970.7px;width:1000px;top:1939.5px;font-size:16.6px;line-height:19.1px;color:#e6e6e6;text-align:center;transform:scaleX(1.0326);transform-origin:50% 50%;text-shadow:1px 1px 1.5px rgba(0,0,0,0.75);">2</div>
<svg width="22" height="21" style="left:1489.2px;top:1939.0px"><path d="M11 2 Q15 4.5 19 4.5 V10 Q19 16.5 11 19.5 Q3 16.5 3 10 V4.5 Q7 4.5 11 2Z" fill="none" stroke="#8a8a8a" stroke-width="1.6"/></svg>
<div class="t" style="left:1359.2px;top:1973.5px;font-size:16.6px;line-height:19.1px;color:#e6e6e6;transform:scaleX(0.9886);transform-origin:0 50%;text-shadow:1px 1px 1.5px rgba(0,0,0,0.75);">Random</div>
<div style="position:absolute;left:2361.0px;top:1273.9px;width:319.3px;height:816.0px;background:#3f3f3f;border-radius:6px;box-shadow:0 2px 10px 2px rgba(0,0,0,0.45);"></div>
<div style="position:absolute;left:2361.0px;top:1273.9px;width:319.3px;height:27.1px;background:#2a8a5a;border-radius:0px;border-radius:6px 6px 0 0;"></div>
<svg width="20" height="20" style="left:2367.7px;top:1277.8px"><path d="M5.5 6.4 L14.5 6.4 L10 14.5Z" fill="rgba(255,255,255,0.55)"/></svg>
<div class="t" style="left:2391.6px;top:1278.3px;font-size:16.6px;line-height:19.1px;color:#e6e6e6;transform:scaleX(0.9676);transform-origin:0 50%;text-shadow:1px 1px 1.5px rgba(0,0,0,0.75);">Principled BSDF</div>
<div class="t" style="right:1184.5px;top:1311.6px;font-size:16.6px;line-height:19.1px;color:#e6e6e6;text-align:right;transform:scaleX(0.8963);transform-origin:100% 50%;text-shadow:1px 1px 1.5px rgba(0,0,0,0.75);">BSDF</div>
<div style="position:absolute;left:2375.7px;top:1350.3px;width:289.3px;height:21.8px;background:#282828;border-radius:5px;"></div>
<div class="t" style="left:2384.0px;top:1351.7px;font-size:16.6px;line-height:19.1px;color:#e6e6e6;transform:scaleX(0.9074);transform-origin:0 50%;text-shadow:1px 1px 1.5px rgba(0,0,0,0.75);">GGX</div>
<svg width="24" height="24" style="left:2646.0px;top:1350.2px"><path d="M7.5 9.975 L12 14.475 L16.5 9.975" fill="none" stroke="#e0e0e0" stroke-width="2.1" stroke-linecap="round" stroke-linejoin="round"/></svg>
<div style="position:absolute;left:2375.7px;top:1383.0px;width:289.3px;height:22.9px;background:#282828;border-radius:5px;"></div>
<div class="t" style="left:2384.0px;top:1384.9px;font-size:16.6px;line-height:19.1px;color:#e6e6e6;transform:scaleX(1.0077);transform-origin:0 50%;text-shadow:1px 1px 1.5px rgba(0,0,0,0.75);">Christensen-Burley</div>
<svg width="24" height="24" style="left:2646.0px;top:1383.5px"><path d="M7.5 9.975 L12 14.475 L16.5 9.975" fill="none" stroke="#e0e0e0" stroke-width="2.1" stroke-linecap="round" stroke-linejoin="round"/></svg>
<div class="t" style="left:2379.3px;top:1418.2px;font-size:16.6px;line-height:19.1px;color:#e6e6e6;transform:scaleX(0.9787);transform-origin:0 50%;text-shadow:1px 1px 1.5px rgba(0,0,0,0.75);">Base Color</div>
<div style="position:absolute;left:2375.7px;top:1445.9px;width:289.3px;height:22.0px;background:#545454;border-radius:4px;"></div>
<div class="t" style="left:2387.7px;top:1447.4px;font-size:16.6px;line-height:19.1px;color:#e6e6e6;transform-origin:0 50%;text-shadow:1px 1px 1.5px rgba(0,0,0,0.75);">Subsurface</div>
<div class="t" style="right:1185.5px;top:1447.4px;font-size:16.6px;line-height:19.1px;color:#e6e6e6;text-align:right;transform:scaleX(1.0326);transform-origin:100% 50%;text-shadow:1px 1px 1.5px rgba(0,0,0,0.75);">0.000</div>
<div style="position:absolute;left:2375.7px;top:1475.0px;width:289.3px;height:22.5px;background:#282828;border-radius:5px;"></div>
<div class="t" style="left:2384.0px;top:1476.7px;font-size:16.6px;line-height:19.1px;color:#e6e6e6;transform:scaleX(0.9903);transform-origin:0 50%;text-shadow:1px 1px 1.5px rgba(0,0,0,0.75);">Subsurface Radius</div>
<svg width="24" height="24" style="left:2646.0px;top:1475.2px"><path d="M7.5 9.975 L12 14.475 L16.5 9.975" fill="none" stroke="#e0e0e0" stroke-width="2.1" stroke-linecap="round" stroke-linejoin="round"/></svg>
<div class="t" style="left:2379.3px;top:1506.1px;font-size:16.6px;line-height:19.1px;color:#e6e6e6;transform:scaleX(0.9963);transform-origin:0 50%;text-shadow:1px 1px 1.5px rgba(0,0,0,0.75);">Subsurface Color</div>
<div style="position:absolute;left:2528.0px;top:1504.6px;width:137.0px;height:22.0px;background:#e6e6e6;border-radius:5px;"></div>
<div style="position:absolute;left:2375.7px;top:1533.8px;width:289.3px;height:22.0px;background:#545454;border-radius:4px;"></div>
<div class="t" style="left:2387.7px;top:1535.3px;font-size:16.6px;line-height:19.1px;color:#e6e6e6;transform:scaleX(1.0295);transform-origin:0 50%;text-shadow:1px 1px 1.5px rgba(0,0,0,0.75);">Metallic</div>
<div class="t" style="right:1185.5px;top:1535.3px;font-size:16.6px;line-height:19.1px;color:#e6e6e6;text-align:right;transform:scaleX(1.0326);transform-origin:100% 50%;text-shadow:1px 1px 1.5px rgba(0,0,0,0.75);">0.000</div>
<div style="position:absolute;left:2375.7px;top:1563.7px;width:289.3px;height:22.0px;background:#545454;border-radius:4px;"></div>
<div style="position:absolute;left:2375.7px;top:1563.7px;width:141.8px;height:22.0px;background:#5680c2;border-radius:0px;border-radius:4px 0 0 4px;"></div>
<div class="t" style="left:2387.7px;top:1565.2px;font-size:16.6px;line-height:19.1px;color:#e6e6e6;transform-origin:0 50%;text-shadow:1px 1px 1.5px rgba(0,0,0,0.75);">Specular</div>
<div class="t" style="right:1185.5px;top:1565.2px;font-size:16.6px;line-height:19.1px;color:#e6e6e6;text-align:right;transform:scaleX(1.0326);transform-origin:100% 50%;text-shadow:1px 1px 1.5px rgba(0,0,0,0.75);">0.500</div>
<div style="position:absolute;left:2375.7px;top:1592.5px;width:289.3px;height:22.0px;background:#545454;border-radius:4px;"></div>
<div class="t" style="left:2387.7px;top:1594.0px;font-size:16.6px;line-height:19.1px;color:#e6e6e6;transform:scaleX(1.0163);transform-origin:0 50%;text-shadow:1px 1px 1.5px rgba(0,0,0,0.75);">Specular Tint</div>
<div class="t" style="right:1185.5px;top:1594.0px;font-size:16.6px;line-height:19.1px;color:#e6e6e6;text-align:right;transform:scaleX(1.0326);transform-origin:100% 50%;text-shadow:1px 1px 1.5px rgba(0,0,0,0.75);">0.000</div>
<div style="position:absolute;left:2375.7px;top:1621.7px;width:289.3px;height:22.0px;background:#545454;border-radius:4px;"></div>
<div style="position:absolute;left:2375.7px;top:1621.7px;width:113.4px;height:22.0px;background:#5680c2;border-radius:0px;border-radius:4px 0 0 4px;"></div>
<div class="t" style="left:2387.7px;top:1623.2px;font-size:16.6px;line-height:19.1px;color:#e6e6e6;transform:scaleX(0.9732);transform-origin:0 50%;text-shadow:1px 1px 1.5px rgba(0,0,0,0.75);">Roughness</div>
<div class="t" style="right:1185.5px;top:1623.2px;font-size:16.6px;line-height:19.1px;color:#e6e6e6;text-align:right;transform:scaleX(1.0326);transform-origin:100% 50%;text-shadow:1px 1px 1.5px rgba(0,0,0,0.75);">0.400</div>
<div style="position:absolute;left:2375.7px;top:1651.0px;width:289.3px;height:22.0px;background:#545454;border-radius:4px;"></div>
<div class="t" style="left:2387.7px;top:1652.5px;font-size:16.6px;line-height:19.1px;color:#e6e6e6;transform:scaleX(1.0188);transform-origin:0 50%;text-shadow:1px 1px 1.5px rgba(0,0,0,0.75);">Anisotropic</div>
<div class="t" style="right:1185.5px;top:1652.5px;font-size:16.6px;line-height:19.1px;color:#e6e6e6;text-align:right;transform:scaleX(1.0326);transform-origin:100% 50%;text-shadow:1px 1px 1.5px rgba(0,0,0,0.75);">0.000</div>
<div style="position:absolute;left:2375.7px;top:1680.3px;width:289.3px;height:22.0px;background:#545454;border-radius:4px;"></div>
<div class="t" style="left:2387.7px;top:1681.8px;font-size:16.6px;line-height:19.1px;color:#e6e6e6;transform:scaleX(1.0170);transform-origin:0 50%;text-shadow:1px 1px 1.5px rgba(0,0,0,0.75);">Anisotropic Rotation</div>
<div class="t" style="right:1185.5px;top:1681.8px;font-size:16.6px;line-height:19.1px;color:#e6e6e6;text-align:right;transform:scaleX(1.0326);transform-origin:100% 50%;text-shadow:1px 1px 1.5px rgba(0,0,0,0.75);">0.000</div>
<div style="position:absolute;left:2375.7px;top:1709.5px;width:289.3px;height:22.0px;background:#545454;border-radius:4px;"></div>
<div class="t" style="left:2387.7px;top:1711.0px;font-size:16.6px;line-height:19.1px;color:#e6e6e6;transform:scaleX(0.9779);transform-origin:0 50%;text-shadow:1px 1px 1.5px rgba(0,0,0,0.75);">Sheen</div>
<div class="t" style="right:1185.5px;top:1711.0px;font-size:16.6px;line-height:19.1px;color:#e6e6e6;text-align:right;transform:scaleX(1.0326);transform-origin:100% 50%;text-shadow:1px 1px 1.5px rgba(0,0,0,0.75);">0.000</div>
<div style="position:absolute;left:2375.7px;top:1738.8px;width:289.3px;height:22.0px;background:#545454;border-radius:4px;"></div>
<div style="position:absolute;left:2375.7px;top:1738.8px;width:141.8px;height:22.0px;background:#5680c2;border-radius:0px;border-radius:4px 0 0 4px;"></div>
<div class="t" style="left:2387.7px;top:1740.3px;font-size:16.6px;line-height:19.1px;color:#e6e6e6;transform:scaleX(1.0070);transform-origin:0 50%;text-shadow:1px 1px 1.5px rgba(0,0,0,0.75);">Sheen Tint</div>
<div class="t" style="right:1185.5px;top:1740.3px;font-size:16.6px;line-height:19.1px;color:#e6e6e6;text-align:right;transform:scaleX(1.0326);transform-origin:100% 50%;text-shadow:1px 1px 1.5px rgba(0,0,0,0.75);">0.500</div>
<div style="position:absolute;left:2375.7px;top:1768.0px;width:289.3px;height:22.0px;background:#545454;border-radius:4px;"></div>
<div class="t" style="left:2387.7px;top:1769.5px;font-size:16.6px;line-height:19.1px;color:#e6e6e6;transform:scaleX(1.0038);transform-origin:0 50%;text-shadow:1px 1px 1.5px rgba(0,0,0,0.75);">Clearcoat</div>
<div class="t" style="right:1185.5px;top:1769.5px;font-size:16.6px;line-height:19.1px;color:#e6e6e6;text-align:right;transform:scaleX(1.0326);transform-origin:100% 50%;text-shadow:1px 1px 1.5px rgba(0,0,0,0.75);">0.000</div>
<div style="position:absolute;left:2375.7px;top:1797.3px;width:289.3px;height:22.0px;background:#545454;border-radius:4px;"></div>
<div style="position:absolute;left:2375.7px;top:1797.3px;width:4.1px;height:22.0px;background:#5680c2;border-radius:0px;border-radius:4px 0 0 4px;"></div>
<div class="t" style="left:2387.7px;top:1798.8px;font-size:16.6px;line-height:19.1px;color:#e6e6e6;transform:scaleX(0.9886);transform-origin:0 50%;text-shadow:1px 1px 1.5px rgba(0,0,0,0.75);">Clearcoat Roughness</div>
<div class="t" style="right:1185.5px;top:1798.8px;font-size:16.6px;line-height:19.1px;color:#e6e6e6;text-align:right;transform:scaleX(1.0326);transform-origin:100% 50%;text-shadow:1px 1px 1.5px rgba(0,0,0,0.75);">0.030</div>
<div style="position:absolute;left:2375.7px;top:1826.9px;width:289.3px;height:22.0px;background:#545454;border-radius:4px;"></div>
<div class="t" style="left:2395.0px;top:1828.4px;font-size:16.6px;line-height:19.1px;color:#e6e6e6;transform:scaleX(0.9021);transform-origin:0 50%;text-shadow:1px 1px 1.5px rgba(0,0,0,0.75);">IOR</div>
<div class="t" style="right:1193.4px;top:1828.4px;font-size:16.6px;line-height:19.1px;color:#e6e6e6;text-align:right;transform:scaleX(1.0326);transform-origin:100% 50%;text-shadow:1px 1px 1.5px rgba(0,0,0,0.75);">1.450</div>
<div style="position:absolute;left:2375.7px;top:1856.6px;width:289.3px;height:22.0px;background:#545454;border-radius:4px;"></div>
<div class="t" style="left:2387.7px;top:1858.1px;font-size:16.6px;line-height:19.1px;color:#e6e6e6;transform:scaleX(0.9867);transform-origin:0 50%;text-shadow:1px 1px 1.5px rgba(0,0,0,0.75);">Transmission</div>
<div class="t" style="right:1185.5px;top:1858.1px;font-size:16.6px;line-height:19.1px;color:#e6e6e6;text-align:right;transform:scaleX(1.0326);transform-origin:100% 50%;text-shadow:1px 1px 1.5px rgba(0,0,0,0.75);">0.000</div>
<div style="position:absolute;left:2375.7px;top:1885.4px;width:289.3px;height:22.0px;background:#545454;border-radius:4px;"></div>
<div class="t" style="left:2387.7px;top:1886.9px;font-size:16.6px;line-height:19.1px;color:#e6e6e6;transform:scaleX(0.9818);transform-origin:0 50%;text-shadow:1px 1px 1.5px rgba(0,0,0,0.75);">Transmission Roughness</div>
<div class="t" style="right:1185.5px;top:1886.9px;font-size:16.6px;line-height:19.1px;color:#e6e6e6;text-align:right;transform:scaleX(1.0326);transform-origin:100% 50%;text-shadow:1px 1px 1.5px rgba(0,0,0,0.75);">0.000</div>
<div class="t" style="left:2379.3px;top:1916.7px;font-size:16.6px;line-height:19.1px;color:#e6e6e6;transform:scaleX(0.9899);transform-origin:0 50%;text-shadow:1px 1px 1.5px rgba(0,0,0,0.75);">Emission</div>
<div style="position:absolute;left:2528.0px;top:1915.2px;width:137.0px;height:22.0px;background:#000000;border-radius:5px;"></div>
<div style="position:absolute;left:2375.7px;top:1944.5px;width:289.3px;height:22.0px;background:#545454;border-radius:4px;"></div>
<div class="t" style="left:2395.0px;top:1946.0px;font-size:16.6px;line-height:19.1px;color:#e6e6e6;transform:scaleX(1.0113);transform-origin:0 50%;text-shadow:1px 1px 1.5px rgba(0,0,0,0.75);">Emission Strength</div>
<div class="t" style="right:1193.4px;top:1946.0px;font-size:16.6px;line-height:19.1px;color:#e6e6e6;text-align:right;transform:scaleX(1.0326);transform-origin:100% 50%;text-shadow:1px 1px 1.5px rgba(0,0,0,0.75);">1.000</div>
<div style="position:absolute;left:2375.7px;top:1973.7px;width:289.3px;height:22.0px;background:#545454;border-radius:4px;"></div>
<div style="position:absolute;left:2375.7px;top:1973.7px;width:289.3px;height:22.0px;background:#5680c2;border-radius:4px;"></div>
<div class="t" style="left:2387.7px;top:1975.2px;font-size:16.6px;line-height:19.1px;color:#e6e6e6;transform:scaleX(1.0034);transform-origin:0 50%;text-shadow:1px 1px 1.5px rgba(0,0,0,0.75);">Alpha</div>
<div class="t" style="right:1185.5px;top:1975.2px;font-size:16.6px;line-height:19.1px;color:#e6e6e6;text-align:right;transform:scaleX(1.0326);transform-origin:100% 50%;text-shadow:1px 1px 1.5px rgba(0,0,0,0.75);">1.000</div>
<div class="t" style="left:2379.3px;top:2004.0px;font-size:16.6px;line-height:19.1px;color:#e6e6e6;transform:scaleX(1.0134);transform-origin:0 50%;text-shadow:1px 1px 1.5px rgba(0,0,0,0.75);">Normal</div>
<div class="t" style="left:2379.3px;top:2032.4px;font-size:16.6px;line-height:19.1px;color:#e6e6e6;transform:scaleX(1.0088);transform-origin:0 50%;text-shadow:1px 1px 1.5px rgba(0,0,0,0.75);">Clearcoat Normal</div>
<div class="t" style="left:2379.3px;top:2060.9px;font-size:16.6px;line-height:19.1px;color:#e6e6e6;transform:scaleX(1.0064);transform-origin:0 50%;text-shadow:1px 1px 1.5px rgba(0,0,0,0.75);">Tangent</div>
<div style="position:absolute;left:2800.8px;top:1288.0px;width:185.4px;height:157.7px;background:#3f3f3f;border-radius:6px;box-shadow:0 0 0 1.6px #e8e8e8,0 2px 10px 2px rgba(0,0,0,0.45);"></div>
<div style="position:absolute;left:2800.8px;top:1288.0px;width:185.4px;height:26.0px;background:#7a2731;border-radius:0px;border-radius:6px 6px 0 0;"></div>
<svg width="20" height="20" style="left:2808.0px;top:1290.7px"><path d="M5.5 6.4 L14.5 6.4 L10 14.5Z" fill="rgba(255,255,255,0.55)"/></svg>
<div class="t" style="left:2831.7px;top:1291.2px;font-size:16.6px;line-height:19.1px;color:#e6e6e6;transform:scaleX(1.0369);transform-origin:0 50%;text-shadow:1px 1px 1.5px rgba(0,0,0,0.75);">Material Output</div>
<div style="position:absolute;left:2816.0px;top:1323.0px;width:156.0px;height:22.7px;background:#282828;border-radius:5px;"></div>
<div class="t" style="left:2824.4px;top:1324.8px;font-size:16.6px;line-height:19.1px;color:#e6e6e6;transform:scaleX(1.0067);transform-origin:0 50%;text-shadow:1px 1px 1.5px rgba(0,0,0,0.75);">All</div>
<svg width="24" height="24" style="left:2953.0px;top:1323.3px"><path d="M7.5 9.975 L12 14.475 L16.5 9.975" fill="none" stroke="#e0e0e0" stroke-width="2.1" stroke-linecap="round" stroke-linejoin="round"/></svg>
<div class="t" style="left:2819.5px;top:1358.4px;font-size:16.6px;line-height:19.1px;color:#e6e6e6;transform:scaleX(0.9978);transform-origin:0 50%;text-shadow:1px 1px 1.5px rgba(0,0,0,0.75);">Surface</div>
<div class="t" style="left:2819.5px;top:1387.5px;font-size:16.6px;line-height:19.1px;color:#e6e6e6;transform:scaleX(1.0064);transform-origin:0 50%;text-shadow:1px 1px 1.5px rgba(0,0,0,0.75);">Volume</div>
<div class="t" style="left:2819.5px;top:1417.0px;font-size:16.6px;line-height:19.1px;color:#e6e6e6;transform:scaleX(1.0242);transform-origin:0 50%;text-shadow:1px 1px 1.5px rgba(0,0,0,0.75);">Displacement</div>
<svg width="3840" height="2400"><circle cx="440.0" cy="1533.0" r="5.6" fill="#6363c7" stroke="#151515" stroke-width="1"/><circle cx="440.0" cy="1562.0" r="5.6" fill="#c7c729" stroke="#151515" stroke-width="1"/><circle cx="440.0" cy="1591.3" r="5.6" fill="#a1a1a1" stroke="#151515" stroke-width="1"/><circle cx="440.0" cy="1620.6" r="5.6" fill="#a1a1a1" stroke="#151515" stroke-width="1"/><circle cx="440.0" cy="1649.8" r="5.6" fill="#a1a1a1" stroke="#151515" stroke-width="1"/><circle cx="2225.7" cy="1324.3" r="5.6" fill="#c7c729" stroke="#151515" stroke-width="1"/><circle cx="2026.2" cy="1357.6" r="5.6" fill="#a1a1a1" stroke="#151515" stroke-width="1"/><circle cx="2026.2" cy="1387.0" r="5.6" fill="#a1a1a1" stroke="#151515" stroke-width="1"/><circle cx="2026.2" cy="1416.3" r="5.6" fill="#a1a1a1" stroke="#151515" stroke-width="1"/><circle cx="2026.2" cy="1445.7" r="5.6" fill="#a1a1a1" stroke="#151515" stroke-width="1"/><circle cx="2026.2" cy="1475.0" r="5.6" fill="#c7c729" stroke="#151515" stroke-width="1"/><circle cx="2220.9" cy="1607.5" r="5.6" fill="#c7c729" stroke="#151515" stroke-width="1"/><circle cx="2021.4" cy="1640.8" r="5.6" fill="#a1a1a1" stroke="#151515" stroke-width="1"/><circle cx="2021.4" cy="1670.2" r="5.6" fill="#a1a1a1" stroke="#151515" stroke-width="1"/><circle cx="2021.4" cy="1699.5" r="5.6" fill="#a1a1a1" stroke="#151515" stroke-width="1"/><circle cx="2021.4" cy="1728.9" r="5.6" fill="#a1a1a1" stroke="#151515" stroke-width="1"/><circle cx="2021.4" cy="1758.2" r="5.6" fill="#c7c729" stroke="#151515" stroke-width="1"/><circle cx="1116.8" cy="1834.4" r="5.6" fill="#a1a1a1" stroke="#151515" stroke-width="1"/><circle cx="930.8" cy="1908.0" r="5.6" fill="#a1a1a1" stroke="#151515" stroke-width="1"/><circle cx="1527.0" cy="1909.4" r="5.6" fill="#a1a1a1" stroke="#151515" stroke-width="1"/><circle cx="1341.0" cy="1983.0" r="5.6" fill="#a1a1a1" stroke="#151515" stroke-width="1"/><circle cx="2680.3" cy="1321.1" r="5.6" fill="#63c763" stroke="#151515" stroke-width="1"/><circle cx="2361.0" cy="1427.7" r="5.6" fill="#c7c729" stroke="#151515" stroke-width="1"/><circle cx="2361.0" cy="1456.9" r="5.6" fill="#a1a1a1" stroke="#151515" stroke-width="1"/><circle cx="2361.0" cy="1486.2" r="5.6" fill="#6363c7" stroke="#151515" stroke-width="1"/><circle cx="2361.0" cy="1515.6" r="5.6" fill="#c7c729" stroke="#151515" stroke-width="1"/><circle cx="2361.0" cy="1544.8" r="5.6" fill="#a1a1a1" stroke="#151515" stroke-width="1"/><circle cx="2361.0" cy="1574.7" r="5.6" fill="#a1a1a1" stroke="#151515" stroke-width="1"/><circle cx="2361.0" cy="1603.5" r="5.6" fill="#a1a1a1" stroke="#151515" stroke-width="1"/><circle cx="2361.0" cy="1632.7" r="5.6" fill="#a1a1a1" stroke="#151515" stroke-width="1"/><circle cx="2361.0" cy="1662.0" r="5.6" fill="#a1a1a1" stroke="#151515" stroke-width="1"/><circle cx="2361.0" cy="1691.3" r="5.6" fill="#a1a1a1" stroke="#151515" stroke-width="1"/><circle cx="2361.0" cy="1720.5" r="5.6" fill="#a1a1a1" stroke="#151515" stroke-width="1"/><circle cx="2361.0" cy="1749.8" r="5.6" fill="#a1a1a1" stroke="#151515" stroke-width="1"/><circle cx="2361.0" cy="1779.0" r="5.6" fill="#a1a1a1" stroke="#151515" stroke-width="1"/><circle cx="2361.0" cy="1808.3" r="5.6" fill="#a1a1a1" stroke="#151515" stroke-width="1"/><circle cx="2361.0" cy="1837.9" r="5.6" fill="#a1a1a1" stroke="#151515" stroke-width="1"/><circle cx="2361.0" cy="1867.6" r="5.6" fill="#a1a1a1" stroke="#151515" stroke-width="1"/><circle cx="2361.0" cy="1896.4" r="5.6" fill="#a1a1a1" stroke="#151515" stroke-width="1"/><circle cx="2361.0" cy="1926.2" r="5.6" fill="#c7c729" stroke="#151515" stroke-width="1"/><circle cx="2361.0" cy="1955.5" r="5.6" fill="#a1a1a1" stroke="#151515" stroke-width="1"/><circle cx="2361.0" cy="1984.7" r="5.6" fill="#a1a1a1" stroke="#151515" stroke-width="1"/><circle cx="2361.0" cy="2013.5" r="5.6" fill="#6363c7" stroke="#151515" stroke-width="1"/><circle cx="2361.0" cy="2041.9" r="5.6" fill="#6363c7" stroke="#151515" stroke-width="1"/><circle cx="2361.0" cy="2070.4" r="5.6" fill="#6363c7" stroke="#151515" stroke-width="1"/><circle cx="2801.0" cy="1367.9" r="5.6" fill="#63c763" stroke="#151515" stroke-width="1"/><circle cx="2801.0" cy="1397.0" r="5.6" fill="#63c763" stroke="#151515" stroke-width="1"/><circle cx="2801.0" cy="1426.5" r="5.6" fill="#6363c7" stroke="#151515" stroke-width="1"/></svg>
<div style="position:absolute;left:17.0px;top:1093.0px;width:62.0px;height:38.0px;background:#282828;border-radius:8px;box-sizing:border-box;border:1.5px solid #3a3a3a;"></div>
<svg width="36" height="34" style="left:21.0px;top:1095.0px"><circle cx="17" cy="17" r="12.5" fill="none" stroke="#e0e0e0" stroke-width="2.4"/><path d="M10 15 A7 7 0 0 1 15 9" fill="none" stroke="#e0e0e0" stroke-width="2.6" stroke-linecap="round"/></svg>
<svg width="24" height="24" style="left:55.0px;top:1101.0px"><path d="M5.5 9.075 L12 15.575 L18.5 9.075" fill="none" stroke="#e0e0e0" stroke-width="2.1" stroke-linecap="round" stroke-linejoin="round"/></svg>
<div style="position:absolute;left:91.0px;top:1093.0px;width:182.0px;height:38.0px;background:#282828;border-radius:8px;box-sizing:border-box;border:1.5px solid #3a3a3a;"></div>
<svg width="36" height="34" style="left:96.0px;top:1095.0px"><g fill="none" stroke="#b0b0b0" stroke-width="2"><path d="M4 10 V4 H10 M24 4 H30 V10 M30 24 V30 H24 M10 30 H4 V24"/></g><rect x="9" y="9" width="16" height="16" fill="#e0e0e0"/></svg>
<div class="t" style="left:142.0px;top:1098.5px;font-size:23.4px;line-height:26.9px;color:#e6e6e6;transform:scaleX(1.0171);transform-origin:0 50%;">Object</div>
<svg width="24" height="24" style="left:248.0px;top:1102.0px"><path d="M5.5 9.075 L12 15.575 L18.5 9.075" fill="none" stroke="#e0e0e0" stroke-width="2.1" stroke-linecap="round" stroke-linejoin="round"/></svg>
<div class="t" style="left:299.0px;top:1098.5px;font-size:23.4px;line-height:26.9px;color:#e0e0e0;transform:scaleX(0.9964);transform-origin:0 50%;">View</div>
<div class="t" style="left:380.0px;top:1098.5px;font-size:23.4px;line-height:26.9px;color:#e0e0e0;transform-origin:0 50%;">Select</div>
<div class="t" style="left:475.0px;top:1098.5px;font-size:23.4px;line-height:26.9px;color:#e0e0e0;transform:scaleX(0.9822);transform-origin:0 50%;">Add</div>
<div class="t" style="left:547.0px;top:1098.5px;font-size:23.4px;line-height:26.9px;color:#e0e0e0;transform:scaleX(0.9855);transform-origin:0 50%;">Node</div>
<svg width="26" height="26" style="left:629.0px;top:1099.0px"><rect x="1" y="1" width="24" height="24" rx="4" fill="#4772b3"/><path d="M6 13 L11 18 L20 8" fill="none" stroke="#fff" stroke-width="3"/></svg>
<div class="t" style="left:661.0px;top:1098.5px;font-size:23.4px;line-height:26.9px;color:#e6e6e6;transform:scaleX(0.9701);transform-origin:0 50%;">Use Nodes</div>
<div style="position:absolute;left:1211.0px;top:1093.0px;width:158.0px;height:38.0px;background:#282828;border-radius:8px;box-sizing:border-box;border:1.5px solid #3a3a3a;"></div>
<div class="t" style="left:1226.0px;top:1098.5px;font-size:23.4px;line-height:26.9px;color:#e6e6e6;transform:scaleX(1.0132);transform-origin:0 50%;">Slot 1</div>
<svg width="24" height="24" style="left:1344.0px;top:1102.0px"><path d="M5.5 9.075 L12 15.575 L18.5 9.075" fill="none" stroke="#e0e0e0" stroke-width="2.1" stroke-linecap="round" stroke-linejoin="round"/></svg>
<div style="position:absolute;left:1381.0px;top:1093.0px;width:485.0px;height:38.0px;background:#282828;border-radius:8px;box-sizing:border-box;border:1.5px solid #3a3a3a;"></div>
<div style="position:absolute;left:1443.0px;top:1094.5px;width:239.0px;height:35.0px;background:#1d1d1d;border-radius:0px;"></div>
<div style="position:absolute;left:1684.0px;top:1094.5px;width:62.0px;height:35.0px;background:#545454;border-radius:0px;"></div>
<div style="position:absolute;left:1747.5px;top:1094.5px;width:38.0px;height:35.0px;background:#545454;border-radius:0px;"></div>
<div style="position:absolute;left:1787.0px;top:1094.5px;width:39.0px;height:35.0px;background:#545454;border-radius:0px;"></div>
<div style="position:absolute;left:1827.5px;top:1094.5px;width:37.0px;height:35.0px;background:#545454;border-radius:0px;border-radius:0 7px 7px 0;"></div>
<svg width="32" height="32" style="left:1387.0px;top:1096.0px"><circle cx="16" cy="16" r="12.5" fill="none" stroke="#e0e0e0" stroke-width="2"/><path d="M16 4 V17.5 Q9 17 4.5 14 A12 12 0 0 1 16 4Z" fill="#e0e0e0"/><path d="M16 28 V18.5 Q23 18 27.5 15 A12 12 0 0 1 16 28Z" fill="#e0e0e0"/></svg>
<svg width="24" height="24" style="left:1418.0px;top:1102.0px"><path d="M5.5 9.075 L12 15.575 L18.5 9.075" fill="none" stroke="#e0e0e0" stroke-width="2.1" stroke-linecap="round" stroke-linejoin="round"/></svg>
<div class="t" style="left:1458.0px;top:1098.5px;font-size:23.4px;line-height:26.9px;color:#e6e6e6;transform:scaleX(1.0310);transform-origin:0 50%;">Material</div>
<div class="t" style="left:1215.0px;width:1000px;top:1098.5px;font-size:23.4px;line-height:26.9px;color:#e6e6e6;text-align:center;transform:scaleX(1.0326);transform-origin:50% 50%;">120</div>
<svg width="28" height="30" style="left:1752.5px;top:1097.0px"><path d="M14 4 Q20 7 25 7 V15 Q25 24 14 28 Q3 24 3 15 V7 Q8 7 14 4Z" fill="none" stroke="#8a8a8a" stroke-width="2.2"/></svg>
<svg width="30" height="30" style="left:1792.0px;top:1098.0px"><g fill="none" stroke="#d8d8d8" stroke-width="2"><path d="M10 4 H20 L25 9 V21 H10 Z"/><path d="M6 9 V26 H20"/></g></svg>
<svg width="30" height="30" style="left:1831.0px;top:1097.0px"><path d="M9 9 L21 21 M21 9 L9 21" stroke="#d8d8d8" stroke-width="2.2"/></svg>
<svg width="40" height="40" style="left:1878.0px;top:1092.0px"><g fill="none" stroke="#8a8a8a" stroke-width="2.2" stroke-linejoin="round"><path d="M22 6 L34 18 L30 19 L24 25 L24 30 L10 16 L15 16 L21 10Z"/><path d="M16 24 L5 35"/></g></svg>
<div style="position:absolute;left:3004.0px;top:1094.0px;width:36.0px;height:36.0px;background:#4a4a4a;border-radius:8px;"></div>
<svg width="36" height="36" style="left:3004.0px;top:1094.0px"><path d="M9 13 L15 6 L21 13 M15 6 V27 H28" fill="none" stroke="#8a8a8a" stroke-width="2"/></svg>
<div style="position:absolute;left:3054.0px;top:1094.0px;width:101.0px;height:36.0px;background:#282828;border-radius:8px;box-sizing:border-box;border:1.5px solid #3a3a3a;"></div>
<div style="position:absolute;left:3054.0px;top:1094.0px;width:36.0px;height:36.0px;background:#545454;border-radius:0px;border-radius:8px 0 0 8px;"></div>
<svg width="36" height="36" style="left:3055.0px;top:1094.0px"><path d="M8 17 A10 10 0 1 1 24 27 L18 21 A3.5 3.5 0 1 0 13 21 L8 26" fill="none" stroke="#a0a0a0" stroke-width="2.4" stroke-linejoin="round"/></svg>
<svg width="34" height="34" style="left:3092.0px;top:1095.0px"><g stroke="#b8b8b8" stroke-width="2"><path d="M10 20 V32 M24 6 V32 M4 26 H30 M16 12 H30"/></g><rect x="5" y="7" width="10" height="10" fill="#e0e0e0"/></svg>
<svg width="24" height="24" style="left:3129.0px;top:1102.0px"><path d="M5.5 9.075 L12 15.575 L18.5 9.075" fill="none" stroke="#e0e0e0" stroke-width="2.1" stroke-linecap="round" stroke-linejoin="round"/></svg>
<div style="position:absolute;left:0.0px;top:1165.0px;width:16.0px;height:33.0px;background:#2a2a2a;border-radius:0px;border-radius:0 6px 6px 0;"></div>
<svg width="16" height="26" style="left:0.0px;top:1170.0px"><path d="M4 6 L11 13 L4 20" fill="none" stroke="#999" stroke-width="2"/></svg>
<div style="position:absolute;left:3150.0px;top:1160.0px;width:21.0px;height:34.0px;background:#2a2a2a;border-radius:0px;border-radius:6px 0 0 6px;"></div>
<svg width="16" height="26" style="left:3152.0px;top:1164.0px"><path d="M12 6 L5 13 L12 20" fill="none" stroke="#999" stroke-width="2"/></svg>
<div class="t" style="left:60.0px;top:2276.5px;font-size:23.4px;line-height:26.9px;color:#ffffff;transform:scaleX(1.0310);transform-origin:0 50%;text-shadow:1px 1px 2px rgba(0,0,0,0.8);">Material</div>
<svg width="26" height="32" style="left:23.0px;top:2364.0px"><rect x="2" y="2" width="20" height="28" rx="8" fill="none" stroke="#a8a8a8" stroke-width="2"/><path d="M4 10 Q4 3 11 3 V13 H4Z" fill="#a8a8a8"/></svg>
<div class="t" style="left:68.0px;top:2365.5px;font-size:23.4px;line-height:26.9px;color:#a8a8a8;transform-origin:0 50%;">Select</div>
<svg width="26" height="32" style="left:154.0px;top:2364.0px"><rect x="2" y="2" width="20" height="28" rx="8" fill="none" stroke="#a8a8a8" stroke-width="2"/><path d="M4 10 Q4 3 11 3 V13 H4Z" fill="#a8a8a8"/></svg>
<svg width="10" height="20" style="left:178.0px;top:2363.0px"><path d="M2 2 V14 M7 2 V14" stroke="#a8a8a8" stroke-width="2"/></svg>
<div class="t" style="left:203.0px;top:2365.5px;font-size:23.4px;line-height:26.9px;color:#a8a8a8;transform:scaleX(0.9935);transform-origin:0 50%;">Box Select</div>
<svg width="26" height="32" style="left:562.0px;top:2364.0px"><rect x="2" y="2" width="20" height="28" rx="8" fill="none" stroke="#a8a8a8" stroke-width="2"/><rect x="9.5" y="6" width="5" height="10" rx="2.5" fill="#a8a8a8"/></svg>
<div class="t" style="left:607.0px;top:2365.5px;font-size:23.4px;line-height:26.9px;color:#a8a8a8;transform-origin:0 50%;">Rotate View</div>
<svg width="26" height="32" style="left:1100.0px;top:2364.0px"><rect x="2" y="2" width="20" height="28" rx="8" fill="none" stroke="#a8a8a8" stroke-width="2"/><path d="M20 10 Q20 3 13 3 V13 H20Z" fill="#a8a8a8"/></svg>
<div class="t" style="left:1146.0px;top:2365.5px;font-size:23.4px;line-height:26.9px;color:#a8a8a8;transform:scaleX(1.0143);transform-origin:0 50%;">Object Context Menu</div>
<div class="t" style="right:33.0px;top:2365.5px;font-size:23.4px;line-height:26.9px;color:#a8a8a8;text-align:right;transform:scaleX(1.0357);transform-origin:100% 50%;">Collection | Cube | Verts:960 | Faces:720 | Tris:1,440 | Objects:0/121 | Memory: 23.5 MiB | 2.91.0</div>
</div></body></html>
